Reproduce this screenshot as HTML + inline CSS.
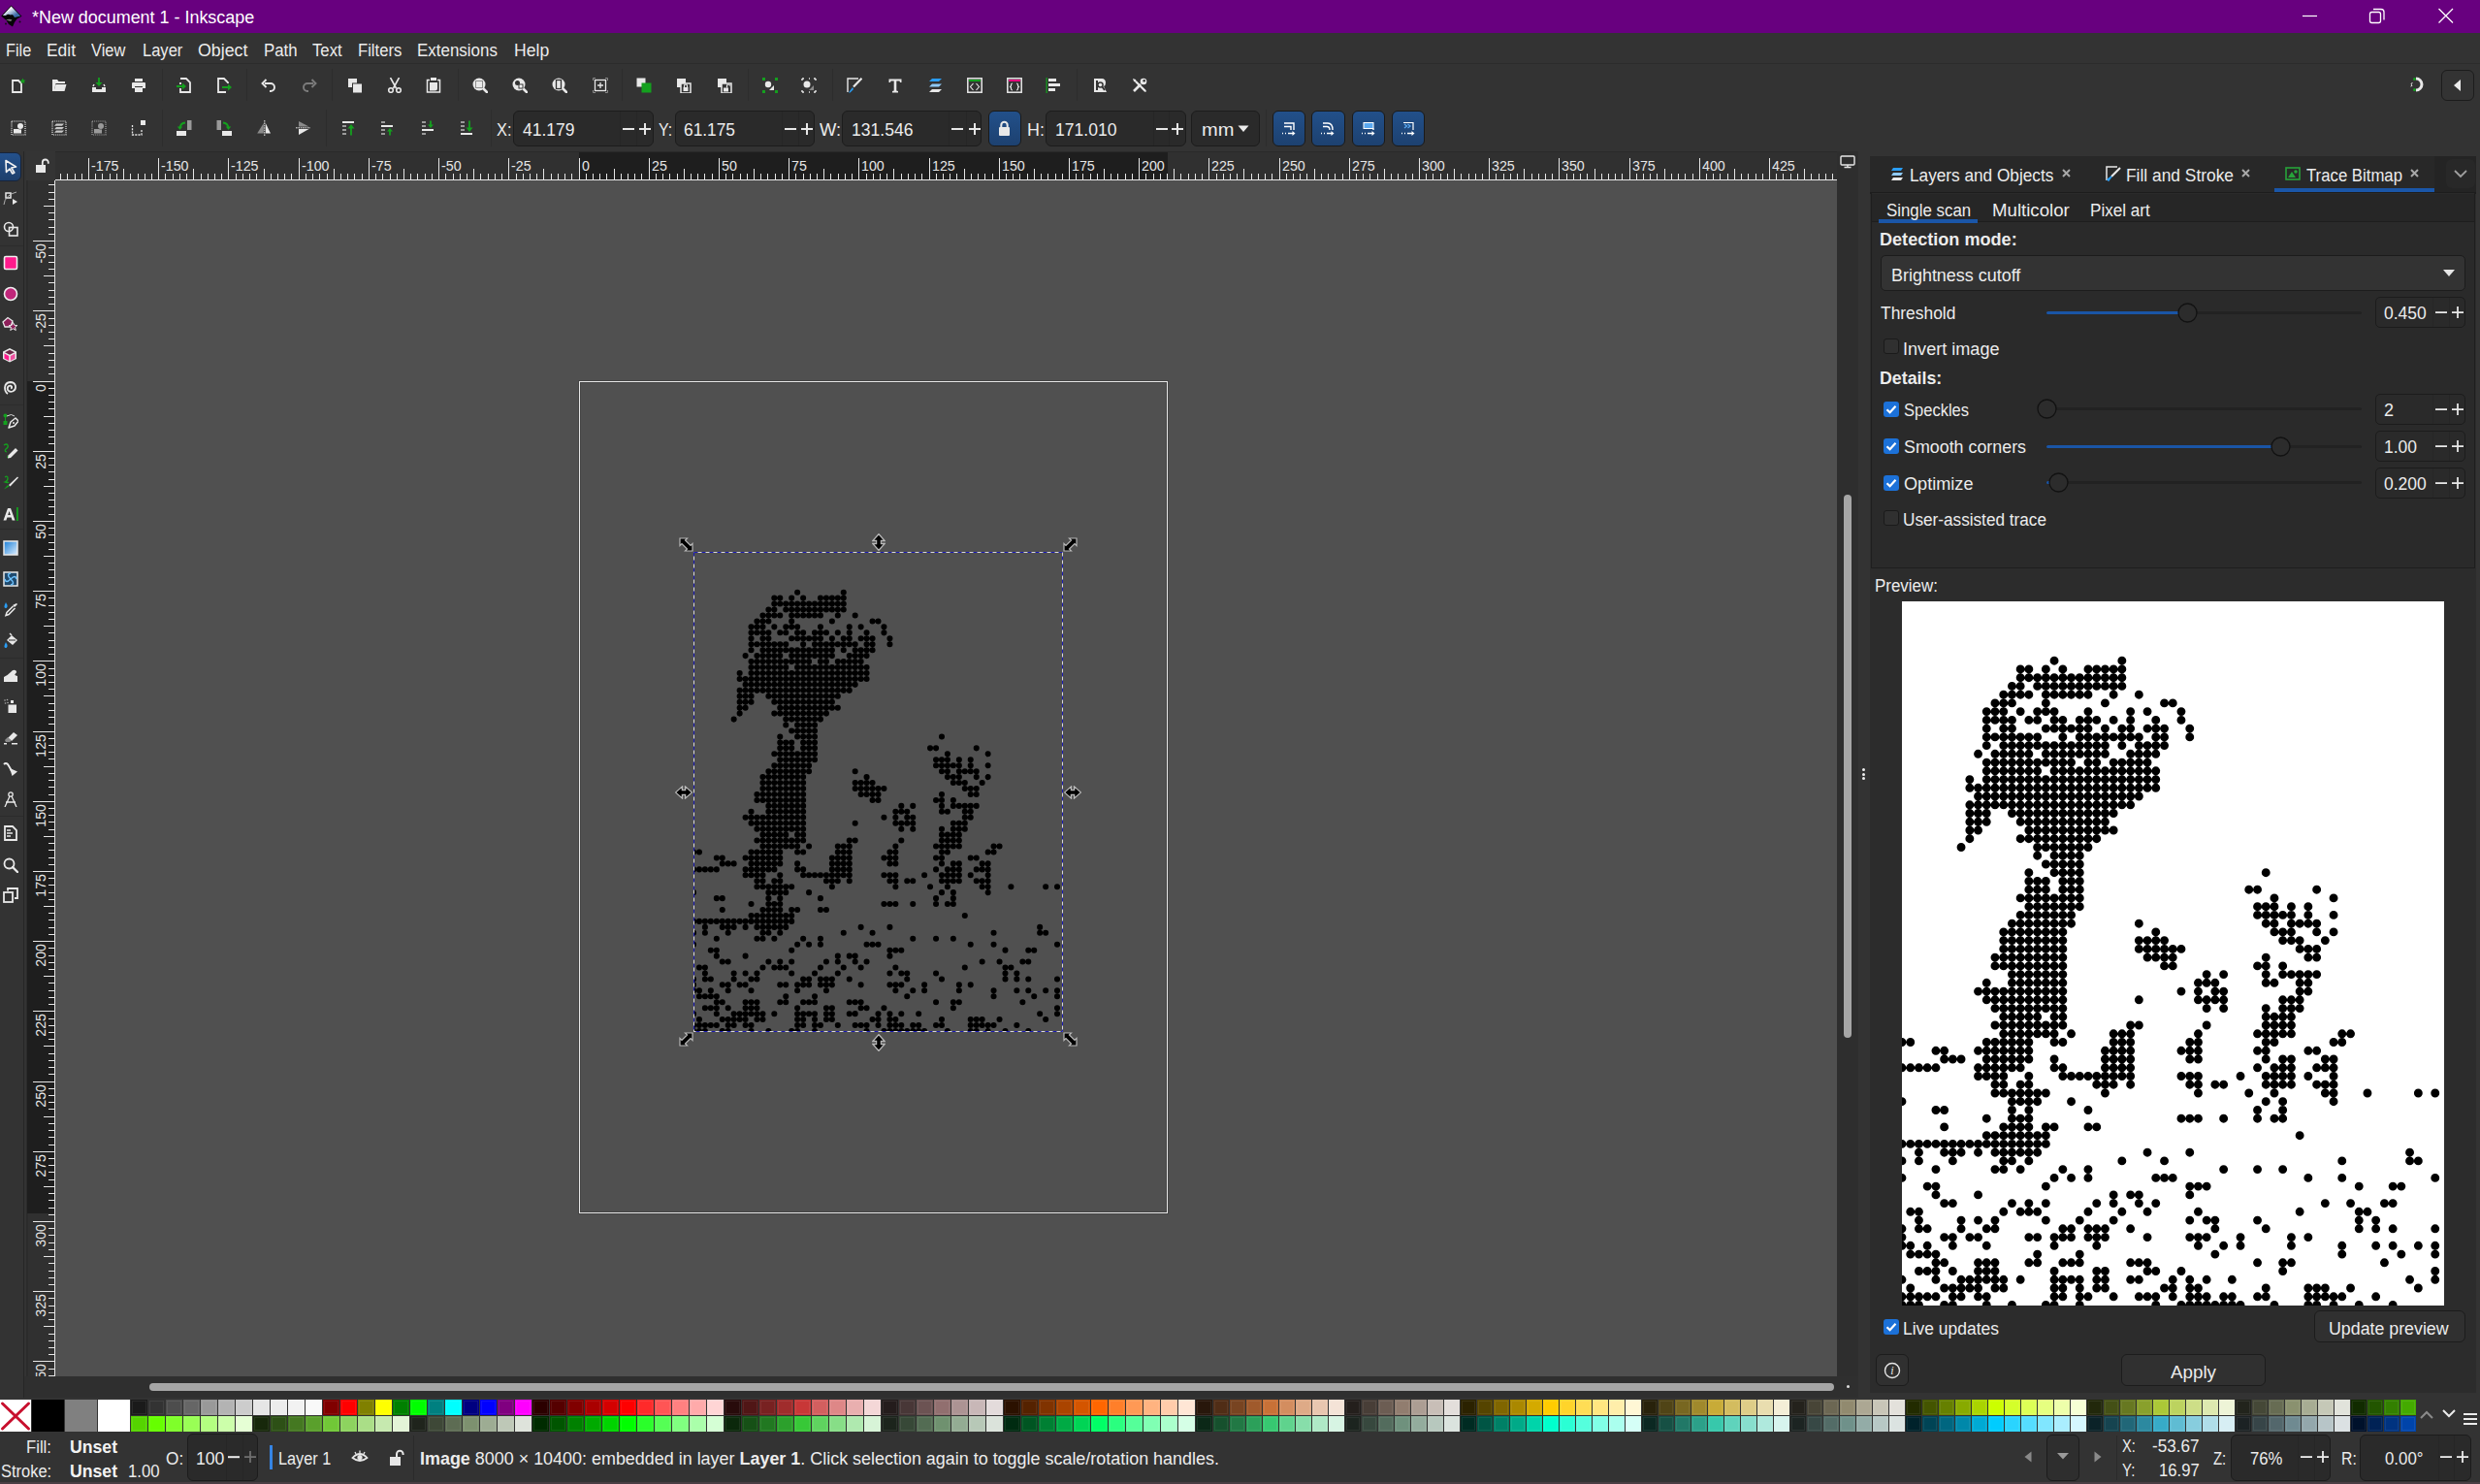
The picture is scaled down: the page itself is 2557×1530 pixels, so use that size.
<!DOCTYPE html><html><head><meta charset="utf-8"><style>*{margin:0;padding:0}
html,body{width:2557px;height:1530px;overflow:hidden;background:#333;position:relative}
body>div{position:absolute}
.t{position:absolute;white-space:pre;font-family:"Liberation Sans",sans-serif}
</style></head><body>
<div style="left:0.0px;top:0.0px;width:2557.0px;height:34.0px;background:#68007f"></div>
<div class="t" id="t0" style="left:33.30px;top:9.46px;font-size:18px;line-height:18px;color:#ffffff;font-weight:400;transform:scaleX(0.9961);transform-origin:0 0;">*New document 1 - Inkscape</div>
<svg style="position:absolute;left:2370.0px;top:10.0px;" width="24" height="14" viewBox="0 0 24 14"><line x1="4" y1="6.5" x2="19" y2="6.5" stroke="#fff" stroke-width="1.2"/></svg>
<svg style="position:absolute;left:2440.0px;top:6.0px;" width="22" height="22" viewBox="0 0 22 22"><rect x="3.5" y="6.5" width="11" height="11" rx="2" fill="none" stroke="#fff" stroke-width="1.3"/><path d="M7 3.5 h8 a3 3 0 0 1 3 3 v8" fill="none" stroke="#fff" stroke-width="1.3"/></svg>
<svg style="position:absolute;left:2510.0px;top:6.0px;" width="24" height="22" viewBox="0 0 24 22"><path d="M4.5 3 L19 17.5 M19 3 L4.5 17.5" stroke="#fff" stroke-width="1.3"/></svg>
<svg style="position:absolute;left:0.0px;top:0.0px;" width="26" height="30" viewBox="0 0 26 30"><defs><linearGradient id="lg1" x1="0" y1="0" x2="1" y2="1"><stop offset="0.3" stop-color="#ffffff"/><stop offset="0.75" stop-color="#3d6aa8"/></linearGradient></defs><path d="M11.5 5.5 L22.5 16.8 L17.5 19.5 L15 23 L13 27.5 L9 25 L6.5 21 L1.2 16.5 Z" fill="#050505"/><path d="M11.5 6.5 L21.2 16.5 L15 18 Q13 13.5 11 15.5 Q8 14 6 16 L2.8 16 Z" fill="url(#lg1)"/><path d="M6 20.5 Q10 19 12.5 20.5 L11 22 Z" fill="#777"/><circle cx="20.5" cy="22.5" r="1" fill="#111"/><circle cx="6" cy="24.5" r="0.9" fill="#111"/></svg>
<div style="left:0.0px;top:34.0px;width:2557.0px;height:32.0px;background:#333333"></div>
<div style="left:0.0px;top:65.0px;width:2557.0px;height:1.0px;background:#2c2c2c"></div>
<div class="t" id="t1" style="left:5.80px;top:42.76px;font-size:18px;line-height:18px;color:#ececec;font-weight:400;transform:scaleX(0.9038);transform-origin:0 0;">File</div>
<div class="t" id="t2" style="left:48.03px;top:42.76px;font-size:18px;line-height:18px;color:#ececec;font-weight:400;transform:scaleX(0.9662);transform-origin:0 0;">Edit</div>
<div class="t" id="t3" style="left:94.40px;top:42.76px;font-size:18px;line-height:18px;color:#ececec;font-weight:400;transform:scaleX(0.9121);transform-origin:0 0;">View</div>
<div class="t" id="t4" style="left:146.68px;top:42.76px;font-size:18px;line-height:18px;color:#ececec;font-weight:400;transform:scaleX(0.9175);transform-origin:0 0;">Layer</div>
<div class="t" id="t5" style="left:204.40px;top:42.76px;font-size:18px;line-height:18px;color:#ececec;font-weight:400;transform:scaleX(0.9881);transform-origin:0 0;">Object</div>
<div class="t" id="t6" style="left:271.67px;top:42.76px;font-size:18px;line-height:18px;color:#ececec;font-weight:400;transform:scaleX(0.9338);transform-origin:0 0;">Path</div>
<div class="t" id="t7" style="left:322.30px;top:42.76px;font-size:18px;line-height:18px;color:#ececec;font-weight:400;transform:scaleX(0.9300);transform-origin:0 0;">Text</div>
<div class="t" id="t8" style="left:369.07px;top:42.76px;font-size:18px;line-height:18px;color:#ececec;font-weight:400;transform:scaleX(0.9250);transform-origin:0 0;">Filters</div>
<div class="t" id="t9" style="left:430.36px;top:42.76px;font-size:18px;line-height:18px;color:#ececec;font-weight:400;transform:scaleX(0.9409);transform-origin:0 0;">Extensions</div>
<div class="t" id="t10" style="left:529.82px;top:42.76px;font-size:18px;line-height:18px;color:#ececec;font-weight:400;transform:scaleX(0.9775);transform-origin:0 0;">Help</div>
<div style="left:0.0px;top:66.0px;width:2557.0px;height:90.0px;background:#333333"></div>
<div style="left:166.5px;top:71.0px;width:1.0px;height:33.0px;background:#2d2d2d"></div>
<div style="left:254.0px;top:71.0px;width:1.0px;height:33.0px;background:#2d2d2d"></div>
<div style="left:342.0px;top:71.0px;width:1.0px;height:33.0px;background:#2d2d2d"></div>
<div style="left:472.0px;top:71.0px;width:1.0px;height:33.0px;background:#2d2d2d"></div>
<div style="left:641.0px;top:71.0px;width:1.0px;height:33.0px;background:#2d2d2d"></div>
<div style="left:770.6px;top:71.0px;width:1.0px;height:33.0px;background:#2d2d2d"></div>
<div style="left:858.4px;top:71.0px;width:1.0px;height:33.0px;background:#2d2d2d"></div>
<div style="left:1110.4px;top:71.0px;width:1.0px;height:33.0px;background:#2d2d2d"></div>
<div style="left:166.5px;top:113.0px;width:1.0px;height:38.0px;background:#2d2d2d"></div>
<div style="left:336.0px;top:113.0px;width:1.0px;height:38.0px;background:#2d2d2d"></div>
<div style="left:506.0px;top:113.0px;width:1.0px;height:38.0px;background:#2d2d2d"></div>
<div style="left:1305.0px;top:113.0px;width:1.0px;height:38.0px;background:#2d2d2d"></div>
<div style="left:27.0px;top:156.0px;width:30.0px;height:30.0px;background:#343434"></div>
<div style="left:57.0px;top:156.0px;width:1837.0px;height:30.0px;background:#303030;border-top:1px solid #2a2a2a;box-sizing:border-box"></div>
<div style="left:597.0px;top:157.0px;width:607.0px;height:29.0px;background:#1e1e1e"></div>
<div style="left:27.0px;top:186.0px;width:30.0px;height:1233.0px;background:#303030;border-left:2px solid #2b2b2b;box-sizing:border-box"></div>
<div style="left:28.0px;top:393.0px;width:29.0px;height:858.0px;background:#1e1e1e"></div>
<div style="left:24.0px;top:156.0px;width:1.0px;height:1285.0px;background:#262626"></div>
<svg style="position:absolute;left:57.0px;top:156.0px;font-family:'Liberation Sans'" width="1837" height="30" viewBox="0 0 1837 30"><rect x="0" y="29" width="1837" height="1" fill="#e6e6e6"/><rect x="5.00" y="23" width="1" height="7" fill="#e6e6e6"/><rect x="12.00" y="23" width="1" height="7" fill="#e6e6e6"/><rect x="20.00" y="23" width="1" height="7" fill="#e6e6e6"/><rect x="27.00" y="23" width="1" height="7" fill="#e6e6e6"/><rect x="34.00" y="7" width="1" height="23" fill="#e6e6e6"/><text transform="translate(37.00,19.8) scale(0.92,1)" font-size="15.5" fill="#e6e6e6">-175</text><rect x="41.00" y="23" width="1" height="7" fill="#e6e6e6"/><rect x="48.00" y="23" width="1" height="7" fill="#e6e6e6"/><rect x="56.00" y="23" width="1" height="7" fill="#e6e6e6"/><rect x="63.00" y="23" width="1" height="7" fill="#e6e6e6"/><rect x="70.00" y="18" width="1" height="12" fill="#e6e6e6"/><rect x="77.00" y="23" width="1" height="7" fill="#e6e6e6"/><rect x="85.00" y="23" width="1" height="7" fill="#e6e6e6"/><rect x="92.00" y="23" width="1" height="7" fill="#e6e6e6"/><rect x="99.00" y="23" width="1" height="7" fill="#e6e6e6"/><rect x="106.00" y="7" width="1" height="23" fill="#e6e6e6"/><text transform="translate(109.00,19.8) scale(0.92,1)" font-size="15.5" fill="#e6e6e6">-150</text><rect x="113.00" y="23" width="1" height="7" fill="#e6e6e6"/><rect x="121.00" y="23" width="1" height="7" fill="#e6e6e6"/><rect x="128.00" y="23" width="1" height="7" fill="#e6e6e6"/><rect x="135.00" y="23" width="1" height="7" fill="#e6e6e6"/><rect x="142.00" y="18" width="1" height="12" fill="#e6e6e6"/><rect x="150.00" y="23" width="1" height="7" fill="#e6e6e6"/><rect x="157.00" y="23" width="1" height="7" fill="#e6e6e6"/><rect x="164.00" y="23" width="1" height="7" fill="#e6e6e6"/><rect x="171.00" y="23" width="1" height="7" fill="#e6e6e6"/><rect x="178.00" y="7" width="1" height="23" fill="#e6e6e6"/><text transform="translate(181.00,19.8) scale(0.92,1)" font-size="15.5" fill="#e6e6e6">-125</text><rect x="186.00" y="23" width="1" height="7" fill="#e6e6e6"/><rect x="193.00" y="23" width="1" height="7" fill="#e6e6e6"/><rect x="200.00" y="23" width="1" height="7" fill="#e6e6e6"/><rect x="207.00" y="23" width="1" height="7" fill="#e6e6e6"/><rect x="215.00" y="18" width="1" height="12" fill="#e6e6e6"/><rect x="222.00" y="23" width="1" height="7" fill="#e6e6e6"/><rect x="229.00" y="23" width="1" height="7" fill="#e6e6e6"/><rect x="236.00" y="23" width="1" height="7" fill="#e6e6e6"/><rect x="243.00" y="23" width="1" height="7" fill="#e6e6e6"/><rect x="251.00" y="7" width="1" height="23" fill="#e6e6e6"/><text transform="translate(254.00,19.8) scale(0.92,1)" font-size="15.5" fill="#e6e6e6">-100</text><rect x="258.00" y="23" width="1" height="7" fill="#e6e6e6"/><rect x="265.00" y="23" width="1" height="7" fill="#e6e6e6"/><rect x="272.00" y="23" width="1" height="7" fill="#e6e6e6"/><rect x="280.00" y="23" width="1" height="7" fill="#e6e6e6"/><rect x="287.00" y="18" width="1" height="12" fill="#e6e6e6"/><rect x="294.00" y="23" width="1" height="7" fill="#e6e6e6"/><rect x="301.00" y="23" width="1" height="7" fill="#e6e6e6"/><rect x="308.00" y="23" width="1" height="7" fill="#e6e6e6"/><rect x="316.00" y="23" width="1" height="7" fill="#e6e6e6"/><rect x="323.00" y="7" width="1" height="23" fill="#e6e6e6"/><text transform="translate(326.00,19.8) scale(0.92,1)" font-size="15.5" fill="#e6e6e6">-75</text><rect x="330.00" y="23" width="1" height="7" fill="#e6e6e6"/><rect x="337.00" y="23" width="1" height="7" fill="#e6e6e6"/><rect x="345.00" y="23" width="1" height="7" fill="#e6e6e6"/><rect x="352.00" y="23" width="1" height="7" fill="#e6e6e6"/><rect x="359.00" y="18" width="1" height="12" fill="#e6e6e6"/><rect x="366.00" y="23" width="1" height="7" fill="#e6e6e6"/><rect x="373.00" y="23" width="1" height="7" fill="#e6e6e6"/><rect x="381.00" y="23" width="1" height="7" fill="#e6e6e6"/><rect x="388.00" y="23" width="1" height="7" fill="#e6e6e6"/><rect x="395.00" y="7" width="1" height="23" fill="#e6e6e6"/><text transform="translate(398.00,19.8) scale(0.92,1)" font-size="15.5" fill="#e6e6e6">-50</text><rect x="402.00" y="23" width="1" height="7" fill="#e6e6e6"/><rect x="410.00" y="23" width="1" height="7" fill="#e6e6e6"/><rect x="417.00" y="23" width="1" height="7" fill="#e6e6e6"/><rect x="424.00" y="23" width="1" height="7" fill="#e6e6e6"/><rect x="431.00" y="18" width="1" height="12" fill="#e6e6e6"/><rect x="438.00" y="23" width="1" height="7" fill="#e6e6e6"/><rect x="446.00" y="23" width="1" height="7" fill="#e6e6e6"/><rect x="453.00" y="23" width="1" height="7" fill="#e6e6e6"/><rect x="460.00" y="23" width="1" height="7" fill="#e6e6e6"/><rect x="467.00" y="7" width="1" height="23" fill="#e6e6e6"/><text transform="translate(470.00,19.8) scale(0.92,1)" font-size="15.5" fill="#e6e6e6">-25</text><rect x="475.00" y="23" width="1" height="7" fill="#e6e6e6"/><rect x="482.00" y="23" width="1" height="7" fill="#e6e6e6"/><rect x="489.00" y="23" width="1" height="7" fill="#e6e6e6"/><rect x="496.00" y="23" width="1" height="7" fill="#e6e6e6"/><rect x="503.00" y="18" width="1" height="12" fill="#e6e6e6"/><rect x="511.00" y="23" width="1" height="7" fill="#e6e6e6"/><rect x="518.00" y="23" width="1" height="7" fill="#e6e6e6"/><rect x="525.00" y="23" width="1" height="7" fill="#e6e6e6"/><rect x="532.00" y="23" width="1" height="7" fill="#e6e6e6"/><rect x="540.00" y="7" width="1" height="23" fill="#e6e6e6"/><text transform="translate(543.00,19.8) scale(0.92,1)" font-size="15.5" fill="#e6e6e6">0</text><rect x="547.00" y="23" width="1" height="7" fill="#e6e6e6"/><rect x="554.00" y="23" width="1" height="7" fill="#e6e6e6"/><rect x="561.00" y="23" width="1" height="7" fill="#e6e6e6"/><rect x="568.00" y="23" width="1" height="7" fill="#e6e6e6"/><rect x="576.00" y="18" width="1" height="12" fill="#e6e6e6"/><rect x="583.00" y="23" width="1" height="7" fill="#e6e6e6"/><rect x="590.00" y="23" width="1" height="7" fill="#e6e6e6"/><rect x="597.00" y="23" width="1" height="7" fill="#e6e6e6"/><rect x="604.00" y="23" width="1" height="7" fill="#e6e6e6"/><rect x="612.00" y="7" width="1" height="23" fill="#e6e6e6"/><text transform="translate(615.00,19.8) scale(0.92,1)" font-size="15.5" fill="#e6e6e6">25</text><rect x="619.00" y="23" width="1" height="7" fill="#e6e6e6"/><rect x="626.00" y="23" width="1" height="7" fill="#e6e6e6"/><rect x="633.00" y="23" width="1" height="7" fill="#e6e6e6"/><rect x="641.00" y="23" width="1" height="7" fill="#e6e6e6"/><rect x="648.00" y="18" width="1" height="12" fill="#e6e6e6"/><rect x="655.00" y="23" width="1" height="7" fill="#e6e6e6"/><rect x="662.00" y="23" width="1" height="7" fill="#e6e6e6"/><rect x="669.00" y="23" width="1" height="7" fill="#e6e6e6"/><rect x="677.00" y="23" width="1" height="7" fill="#e6e6e6"/><rect x="684.00" y="7" width="1" height="23" fill="#e6e6e6"/><text transform="translate(687.00,19.8) scale(0.92,1)" font-size="15.5" fill="#e6e6e6">50</text><rect x="691.00" y="23" width="1" height="7" fill="#e6e6e6"/><rect x="698.00" y="23" width="1" height="7" fill="#e6e6e6"/><rect x="706.00" y="23" width="1" height="7" fill="#e6e6e6"/><rect x="713.00" y="23" width="1" height="7" fill="#e6e6e6"/><rect x="720.00" y="18" width="1" height="12" fill="#e6e6e6"/><rect x="727.00" y="23" width="1" height="7" fill="#e6e6e6"/><rect x="734.00" y="23" width="1" height="7" fill="#e6e6e6"/><rect x="742.00" y="23" width="1" height="7" fill="#e6e6e6"/><rect x="749.00" y="23" width="1" height="7" fill="#e6e6e6"/><rect x="756.00" y="7" width="1" height="23" fill="#e6e6e6"/><text transform="translate(759.00,19.8) scale(0.92,1)" font-size="15.5" fill="#e6e6e6">75</text><rect x="763.00" y="23" width="1" height="7" fill="#e6e6e6"/><rect x="771.00" y="23" width="1" height="7" fill="#e6e6e6"/><rect x="778.00" y="23" width="1" height="7" fill="#e6e6e6"/><rect x="785.00" y="23" width="1" height="7" fill="#e6e6e6"/><rect x="792.00" y="18" width="1" height="12" fill="#e6e6e6"/><rect x="799.00" y="23" width="1" height="7" fill="#e6e6e6"/><rect x="807.00" y="23" width="1" height="7" fill="#e6e6e6"/><rect x="814.00" y="23" width="1" height="7" fill="#e6e6e6"/><rect x="821.00" y="23" width="1" height="7" fill="#e6e6e6"/><rect x="828.00" y="7" width="1" height="23" fill="#e6e6e6"/><text transform="translate(831.00,19.8) scale(0.92,1)" font-size="15.5" fill="#e6e6e6">100</text><rect x="836.00" y="23" width="1" height="7" fill="#e6e6e6"/><rect x="843.00" y="23" width="1" height="7" fill="#e6e6e6"/><rect x="850.00" y="23" width="1" height="7" fill="#e6e6e6"/><rect x="857.00" y="23" width="1" height="7" fill="#e6e6e6"/><rect x="864.00" y="18" width="1" height="12" fill="#e6e6e6"/><rect x="872.00" y="23" width="1" height="7" fill="#e6e6e6"/><rect x="879.00" y="23" width="1" height="7" fill="#e6e6e6"/><rect x="886.00" y="23" width="1" height="7" fill="#e6e6e6"/><rect x="893.00" y="23" width="1" height="7" fill="#e6e6e6"/><rect x="901.00" y="7" width="1" height="23" fill="#e6e6e6"/><text transform="translate(904.00,19.8) scale(0.92,1)" font-size="15.5" fill="#e6e6e6">125</text><rect x="908.00" y="23" width="1" height="7" fill="#e6e6e6"/><rect x="915.00" y="23" width="1" height="7" fill="#e6e6e6"/><rect x="922.00" y="23" width="1" height="7" fill="#e6e6e6"/><rect x="929.00" y="23" width="1" height="7" fill="#e6e6e6"/><rect x="937.00" y="18" width="1" height="12" fill="#e6e6e6"/><rect x="944.00" y="23" width="1" height="7" fill="#e6e6e6"/><rect x="951.00" y="23" width="1" height="7" fill="#e6e6e6"/><rect x="958.00" y="23" width="1" height="7" fill="#e6e6e6"/><rect x="966.00" y="23" width="1" height="7" fill="#e6e6e6"/><rect x="973.00" y="7" width="1" height="23" fill="#e6e6e6"/><text transform="translate(976.00,19.8) scale(0.92,1)" font-size="15.5" fill="#e6e6e6">150</text><rect x="980.00" y="23" width="1" height="7" fill="#e6e6e6"/><rect x="987.00" y="23" width="1" height="7" fill="#e6e6e6"/><rect x="994.00" y="23" width="1" height="7" fill="#e6e6e6"/><rect x="1002.00" y="23" width="1" height="7" fill="#e6e6e6"/><rect x="1009.00" y="18" width="1" height="12" fill="#e6e6e6"/><rect x="1016.00" y="23" width="1" height="7" fill="#e6e6e6"/><rect x="1023.00" y="23" width="1" height="7" fill="#e6e6e6"/><rect x="1031.00" y="23" width="1" height="7" fill="#e6e6e6"/><rect x="1038.00" y="23" width="1" height="7" fill="#e6e6e6"/><rect x="1045.00" y="7" width="1" height="23" fill="#e6e6e6"/><text transform="translate(1048.00,19.8) scale(0.92,1)" font-size="15.5" fill="#e6e6e6">175</text><rect x="1052.00" y="23" width="1" height="7" fill="#e6e6e6"/><rect x="1059.00" y="23" width="1" height="7" fill="#e6e6e6"/><rect x="1067.00" y="23" width="1" height="7" fill="#e6e6e6"/><rect x="1074.00" y="23" width="1" height="7" fill="#e6e6e6"/><rect x="1081.00" y="18" width="1" height="12" fill="#e6e6e6"/><rect x="1088.00" y="23" width="1" height="7" fill="#e6e6e6"/><rect x="1095.00" y="23" width="1" height="7" fill="#e6e6e6"/><rect x="1103.00" y="23" width="1" height="7" fill="#e6e6e6"/><rect x="1110.00" y="23" width="1" height="7" fill="#e6e6e6"/><rect x="1117.00" y="7" width="1" height="23" fill="#e6e6e6"/><text transform="translate(1120.00,19.8) scale(0.92,1)" font-size="15.5" fill="#e6e6e6">200</text><rect x="1124.00" y="23" width="1" height="7" fill="#e6e6e6"/><rect x="1132.00" y="23" width="1" height="7" fill="#e6e6e6"/><rect x="1139.00" y="23" width="1" height="7" fill="#e6e6e6"/><rect x="1146.00" y="23" width="1" height="7" fill="#e6e6e6"/><rect x="1153.00" y="18" width="1" height="12" fill="#e6e6e6"/><rect x="1160.00" y="23" width="1" height="7" fill="#e6e6e6"/><rect x="1168.00" y="23" width="1" height="7" fill="#e6e6e6"/><rect x="1175.00" y="23" width="1" height="7" fill="#e6e6e6"/><rect x="1182.00" y="23" width="1" height="7" fill="#e6e6e6"/><rect x="1189.00" y="7" width="1" height="23" fill="#e6e6e6"/><text transform="translate(1192.00,19.8) scale(0.92,1)" font-size="15.5" fill="#e6e6e6">225</text><rect x="1197.00" y="23" width="1" height="7" fill="#e6e6e6"/><rect x="1204.00" y="23" width="1" height="7" fill="#e6e6e6"/><rect x="1211.00" y="23" width="1" height="7" fill="#e6e6e6"/><rect x="1218.00" y="23" width="1" height="7" fill="#e6e6e6"/><rect x="1225.00" y="18" width="1" height="12" fill="#e6e6e6"/><rect x="1233.00" y="23" width="1" height="7" fill="#e6e6e6"/><rect x="1240.00" y="23" width="1" height="7" fill="#e6e6e6"/><rect x="1247.00" y="23" width="1" height="7" fill="#e6e6e6"/><rect x="1254.00" y="23" width="1" height="7" fill="#e6e6e6"/><rect x="1262.00" y="7" width="1" height="23" fill="#e6e6e6"/><text transform="translate(1265.00,19.8) scale(0.92,1)" font-size="15.5" fill="#e6e6e6">250</text><rect x="1269.00" y="23" width="1" height="7" fill="#e6e6e6"/><rect x="1276.00" y="23" width="1" height="7" fill="#e6e6e6"/><rect x="1283.00" y="23" width="1" height="7" fill="#e6e6e6"/><rect x="1290.00" y="23" width="1" height="7" fill="#e6e6e6"/><rect x="1298.00" y="18" width="1" height="12" fill="#e6e6e6"/><rect x="1305.00" y="23" width="1" height="7" fill="#e6e6e6"/><rect x="1312.00" y="23" width="1" height="7" fill="#e6e6e6"/><rect x="1319.00" y="23" width="1" height="7" fill="#e6e6e6"/><rect x="1327.00" y="23" width="1" height="7" fill="#e6e6e6"/><rect x="1334.00" y="7" width="1" height="23" fill="#e6e6e6"/><text transform="translate(1337.00,19.8) scale(0.92,1)" font-size="15.5" fill="#e6e6e6">275</text><rect x="1341.00" y="23" width="1" height="7" fill="#e6e6e6"/><rect x="1348.00" y="23" width="1" height="7" fill="#e6e6e6"/><rect x="1355.00" y="23" width="1" height="7" fill="#e6e6e6"/><rect x="1363.00" y="23" width="1" height="7" fill="#e6e6e6"/><rect x="1370.00" y="18" width="1" height="12" fill="#e6e6e6"/><rect x="1377.00" y="23" width="1" height="7" fill="#e6e6e6"/><rect x="1384.00" y="23" width="1" height="7" fill="#e6e6e6"/><rect x="1392.00" y="23" width="1" height="7" fill="#e6e6e6"/><rect x="1399.00" y="23" width="1" height="7" fill="#e6e6e6"/><rect x="1406.00" y="7" width="1" height="23" fill="#e6e6e6"/><text transform="translate(1409.00,19.8) scale(0.92,1)" font-size="15.5" fill="#e6e6e6">300</text><rect x="1413.00" y="23" width="1" height="7" fill="#e6e6e6"/><rect x="1420.00" y="23" width="1" height="7" fill="#e6e6e6"/><rect x="1428.00" y="23" width="1" height="7" fill="#e6e6e6"/><rect x="1435.00" y="23" width="1" height="7" fill="#e6e6e6"/><rect x="1442.00" y="18" width="1" height="12" fill="#e6e6e6"/><rect x="1449.00" y="23" width="1" height="7" fill="#e6e6e6"/><rect x="1457.00" y="23" width="1" height="7" fill="#e6e6e6"/><rect x="1464.00" y="23" width="1" height="7" fill="#e6e6e6"/><rect x="1471.00" y="23" width="1" height="7" fill="#e6e6e6"/><rect x="1478.00" y="7" width="1" height="23" fill="#e6e6e6"/><text transform="translate(1481.00,19.8) scale(0.92,1)" font-size="15.5" fill="#e6e6e6">325</text><rect x="1485.00" y="23" width="1" height="7" fill="#e6e6e6"/><rect x="1493.00" y="23" width="1" height="7" fill="#e6e6e6"/><rect x="1500.00" y="23" width="1" height="7" fill="#e6e6e6"/><rect x="1507.00" y="23" width="1" height="7" fill="#e6e6e6"/><rect x="1514.00" y="18" width="1" height="12" fill="#e6e6e6"/><rect x="1522.00" y="23" width="1" height="7" fill="#e6e6e6"/><rect x="1529.00" y="23" width="1" height="7" fill="#e6e6e6"/><rect x="1536.00" y="23" width="1" height="7" fill="#e6e6e6"/><rect x="1543.00" y="23" width="1" height="7" fill="#e6e6e6"/><rect x="1550.00" y="7" width="1" height="23" fill="#e6e6e6"/><text transform="translate(1553.00,19.8) scale(0.92,1)" font-size="15.5" fill="#e6e6e6">350</text><rect x="1558.00" y="23" width="1" height="7" fill="#e6e6e6"/><rect x="1565.00" y="23" width="1" height="7" fill="#e6e6e6"/><rect x="1572.00" y="23" width="1" height="7" fill="#e6e6e6"/><rect x="1579.00" y="23" width="1" height="7" fill="#e6e6e6"/><rect x="1587.00" y="18" width="1" height="12" fill="#e6e6e6"/><rect x="1594.00" y="23" width="1" height="7" fill="#e6e6e6"/><rect x="1601.00" y="23" width="1" height="7" fill="#e6e6e6"/><rect x="1608.00" y="23" width="1" height="7" fill="#e6e6e6"/><rect x="1615.00" y="23" width="1" height="7" fill="#e6e6e6"/><rect x="1623.00" y="7" width="1" height="23" fill="#e6e6e6"/><text transform="translate(1626.00,19.8) scale(0.92,1)" font-size="15.5" fill="#e6e6e6">375</text><rect x="1630.00" y="23" width="1" height="7" fill="#e6e6e6"/><rect x="1637.00" y="23" width="1" height="7" fill="#e6e6e6"/><rect x="1644.00" y="23" width="1" height="7" fill="#e6e6e6"/><rect x="1651.00" y="23" width="1" height="7" fill="#e6e6e6"/><rect x="1659.00" y="18" width="1" height="12" fill="#e6e6e6"/><rect x="1666.00" y="23" width="1" height="7" fill="#e6e6e6"/><rect x="1673.00" y="23" width="1" height="7" fill="#e6e6e6"/><rect x="1680.00" y="23" width="1" height="7" fill="#e6e6e6"/><rect x="1688.00" y="23" width="1" height="7" fill="#e6e6e6"/><rect x="1695.00" y="7" width="1" height="23" fill="#e6e6e6"/><text transform="translate(1698.00,19.8) scale(0.92,1)" font-size="15.5" fill="#e6e6e6">400</text><rect x="1702.00" y="23" width="1" height="7" fill="#e6e6e6"/><rect x="1709.00" y="23" width="1" height="7" fill="#e6e6e6"/><rect x="1716.00" y="23" width="1" height="7" fill="#e6e6e6"/><rect x="1724.00" y="23" width="1" height="7" fill="#e6e6e6"/><rect x="1731.00" y="18" width="1" height="12" fill="#e6e6e6"/><rect x="1738.00" y="23" width="1" height="7" fill="#e6e6e6"/><rect x="1745.00" y="23" width="1" height="7" fill="#e6e6e6"/><rect x="1753.00" y="23" width="1" height="7" fill="#e6e6e6"/><rect x="1760.00" y="23" width="1" height="7" fill="#e6e6e6"/><rect x="1767.00" y="7" width="1" height="23" fill="#e6e6e6"/><text transform="translate(1770.00,19.8) scale(0.92,1)" font-size="15.5" fill="#e6e6e6">425</text><rect x="1774.00" y="23" width="1" height="7" fill="#e6e6e6"/><rect x="1781.00" y="23" width="1" height="7" fill="#e6e6e6"/><rect x="1789.00" y="23" width="1" height="7" fill="#e6e6e6"/><rect x="1796.00" y="23" width="1" height="7" fill="#e6e6e6"/><rect x="1803.00" y="18" width="1" height="12" fill="#e6e6e6"/><rect x="1810.00" y="23" width="1" height="7" fill="#e6e6e6"/><rect x="1818.00" y="23" width="1" height="7" fill="#e6e6e6"/><rect x="1825.00" y="23" width="1" height="7" fill="#e6e6e6"/><rect x="1832.00" y="23" width="1" height="7" fill="#e6e6e6"/></svg>
<svg style="position:absolute;left:27.0px;top:186.0px;font-family:'Liberation Sans'" width="30" height="1233" viewBox="0 0 30 1233"><rect x="29" y="0" width="1" height="1233" fill="#e6e6e6"/><rect x="23" y="4.00" width="7" height="1" fill="#e6e6e6"/><rect x="23" y="12.00" width="7" height="1" fill="#e6e6e6"/><rect x="23" y="19.00" width="7" height="1" fill="#e6e6e6"/><rect x="18" y="26.00" width="12" height="1" fill="#e6e6e6"/><rect x="23" y="33.00" width="7" height="1" fill="#e6e6e6"/><rect x="23" y="40.00" width="7" height="1" fill="#e6e6e6"/><rect x="23" y="48.00" width="7" height="1" fill="#e6e6e6"/><rect x="23" y="55.00" width="7" height="1" fill="#e6e6e6"/><rect x="7" y="62.00" width="23" height="1" fill="#e6e6e6"/><text transform="translate(19.8,65.00) rotate(-90) scale(0.92,1)" text-anchor="end" font-size="15.5" fill="#e6e6e6">-50</text><rect x="23" y="69.00" width="7" height="1" fill="#e6e6e6"/><rect x="23" y="77.00" width="7" height="1" fill="#e6e6e6"/><rect x="23" y="84.00" width="7" height="1" fill="#e6e6e6"/><rect x="23" y="91.00" width="7" height="1" fill="#e6e6e6"/><rect x="18" y="98.00" width="12" height="1" fill="#e6e6e6"/><rect x="23" y="105.00" width="7" height="1" fill="#e6e6e6"/><rect x="23" y="113.00" width="7" height="1" fill="#e6e6e6"/><rect x="23" y="120.00" width="7" height="1" fill="#e6e6e6"/><rect x="23" y="127.00" width="7" height="1" fill="#e6e6e6"/><rect x="7" y="134.00" width="23" height="1" fill="#e6e6e6"/><text transform="translate(19.8,137.00) rotate(-90) scale(0.92,1)" text-anchor="end" font-size="15.5" fill="#e6e6e6">-25</text><rect x="23" y="142.00" width="7" height="1" fill="#e6e6e6"/><rect x="23" y="149.00" width="7" height="1" fill="#e6e6e6"/><rect x="23" y="156.00" width="7" height="1" fill="#e6e6e6"/><rect x="23" y="163.00" width="7" height="1" fill="#e6e6e6"/><rect x="18" y="170.00" width="12" height="1" fill="#e6e6e6"/><rect x="23" y="178.00" width="7" height="1" fill="#e6e6e6"/><rect x="23" y="185.00" width="7" height="1" fill="#e6e6e6"/><rect x="23" y="192.00" width="7" height="1" fill="#e6e6e6"/><rect x="23" y="199.00" width="7" height="1" fill="#e6e6e6"/><rect x="7" y="207.00" width="23" height="1" fill="#e6e6e6"/><text transform="translate(19.8,210.00) rotate(-90) scale(0.92,1)" text-anchor="end" font-size="15.5" fill="#e6e6e6">0</text><rect x="23" y="214.00" width="7" height="1" fill="#e6e6e6"/><rect x="23" y="221.00" width="7" height="1" fill="#e6e6e6"/><rect x="23" y="228.00" width="7" height="1" fill="#e6e6e6"/><rect x="23" y="235.00" width="7" height="1" fill="#e6e6e6"/><rect x="18" y="243.00" width="12" height="1" fill="#e6e6e6"/><rect x="23" y="250.00" width="7" height="1" fill="#e6e6e6"/><rect x="23" y="257.00" width="7" height="1" fill="#e6e6e6"/><rect x="23" y="264.00" width="7" height="1" fill="#e6e6e6"/><rect x="23" y="271.00" width="7" height="1" fill="#e6e6e6"/><rect x="7" y="279.00" width="23" height="1" fill="#e6e6e6"/><text transform="translate(19.8,282.00) rotate(-90) scale(0.92,1)" text-anchor="end" font-size="15.5" fill="#e6e6e6">25</text><rect x="23" y="286.00" width="7" height="1" fill="#e6e6e6"/><rect x="23" y="293.00" width="7" height="1" fill="#e6e6e6"/><rect x="23" y="300.00" width="7" height="1" fill="#e6e6e6"/><rect x="23" y="308.00" width="7" height="1" fill="#e6e6e6"/><rect x="18" y="315.00" width="12" height="1" fill="#e6e6e6"/><rect x="23" y="322.00" width="7" height="1" fill="#e6e6e6"/><rect x="23" y="329.00" width="7" height="1" fill="#e6e6e6"/><rect x="23" y="336.00" width="7" height="1" fill="#e6e6e6"/><rect x="23" y="344.00" width="7" height="1" fill="#e6e6e6"/><rect x="7" y="351.00" width="23" height="1" fill="#e6e6e6"/><text transform="translate(19.8,354.00) rotate(-90) scale(0.92,1)" text-anchor="end" font-size="15.5" fill="#e6e6e6">50</text><rect x="23" y="358.00" width="7" height="1" fill="#e6e6e6"/><rect x="23" y="365.00" width="7" height="1" fill="#e6e6e6"/><rect x="23" y="373.00" width="7" height="1" fill="#e6e6e6"/><rect x="23" y="380.00" width="7" height="1" fill="#e6e6e6"/><rect x="18" y="387.00" width="12" height="1" fill="#e6e6e6"/><rect x="23" y="394.00" width="7" height="1" fill="#e6e6e6"/><rect x="23" y="401.00" width="7" height="1" fill="#e6e6e6"/><rect x="23" y="409.00" width="7" height="1" fill="#e6e6e6"/><rect x="23" y="416.00" width="7" height="1" fill="#e6e6e6"/><rect x="7" y="423.00" width="23" height="1" fill="#e6e6e6"/><text transform="translate(19.8,426.00) rotate(-90) scale(0.92,1)" text-anchor="end" font-size="15.5" fill="#e6e6e6">75</text><rect x="23" y="430.00" width="7" height="1" fill="#e6e6e6"/><rect x="23" y="438.00" width="7" height="1" fill="#e6e6e6"/><rect x="23" y="445.00" width="7" height="1" fill="#e6e6e6"/><rect x="23" y="452.00" width="7" height="1" fill="#e6e6e6"/><rect x="18" y="459.00" width="12" height="1" fill="#e6e6e6"/><rect x="23" y="466.00" width="7" height="1" fill="#e6e6e6"/><rect x="23" y="474.00" width="7" height="1" fill="#e6e6e6"/><rect x="23" y="481.00" width="7" height="1" fill="#e6e6e6"/><rect x="23" y="488.00" width="7" height="1" fill="#e6e6e6"/><rect x="7" y="495.00" width="23" height="1" fill="#e6e6e6"/><text transform="translate(19.8,498.00) rotate(-90) scale(0.92,1)" text-anchor="end" font-size="15.5" fill="#e6e6e6">100</text><rect x="23" y="503.00" width="7" height="1" fill="#e6e6e6"/><rect x="23" y="510.00" width="7" height="1" fill="#e6e6e6"/><rect x="23" y="517.00" width="7" height="1" fill="#e6e6e6"/><rect x="23" y="524.00" width="7" height="1" fill="#e6e6e6"/><rect x="18" y="531.00" width="12" height="1" fill="#e6e6e6"/><rect x="23" y="539.00" width="7" height="1" fill="#e6e6e6"/><rect x="23" y="546.00" width="7" height="1" fill="#e6e6e6"/><rect x="23" y="553.00" width="7" height="1" fill="#e6e6e6"/><rect x="23" y="560.00" width="7" height="1" fill="#e6e6e6"/><rect x="7" y="568.00" width="23" height="1" fill="#e6e6e6"/><text transform="translate(19.8,571.00) rotate(-90) scale(0.92,1)" text-anchor="end" font-size="15.5" fill="#e6e6e6">125</text><rect x="23" y="575.00" width="7" height="1" fill="#e6e6e6"/><rect x="23" y="582.00" width="7" height="1" fill="#e6e6e6"/><rect x="23" y="589.00" width="7" height="1" fill="#e6e6e6"/><rect x="23" y="596.00" width="7" height="1" fill="#e6e6e6"/><rect x="18" y="604.00" width="12" height="1" fill="#e6e6e6"/><rect x="23" y="611.00" width="7" height="1" fill="#e6e6e6"/><rect x="23" y="618.00" width="7" height="1" fill="#e6e6e6"/><rect x="23" y="625.00" width="7" height="1" fill="#e6e6e6"/><rect x="23" y="633.00" width="7" height="1" fill="#e6e6e6"/><rect x="7" y="640.00" width="23" height="1" fill="#e6e6e6"/><text transform="translate(19.8,643.00) rotate(-90) scale(0.92,1)" text-anchor="end" font-size="15.5" fill="#e6e6e6">150</text><rect x="23" y="647.00" width="7" height="1" fill="#e6e6e6"/><rect x="23" y="654.00" width="7" height="1" fill="#e6e6e6"/><rect x="23" y="661.00" width="7" height="1" fill="#e6e6e6"/><rect x="23" y="669.00" width="7" height="1" fill="#e6e6e6"/><rect x="18" y="676.00" width="12" height="1" fill="#e6e6e6"/><rect x="23" y="683.00" width="7" height="1" fill="#e6e6e6"/><rect x="23" y="690.00" width="7" height="1" fill="#e6e6e6"/><rect x="23" y="698.00" width="7" height="1" fill="#e6e6e6"/><rect x="23" y="705.00" width="7" height="1" fill="#e6e6e6"/><rect x="7" y="712.00" width="23" height="1" fill="#e6e6e6"/><text transform="translate(19.8,715.00) rotate(-90) scale(0.92,1)" text-anchor="end" font-size="15.5" fill="#e6e6e6">175</text><rect x="23" y="719.00" width="7" height="1" fill="#e6e6e6"/><rect x="23" y="726.00" width="7" height="1" fill="#e6e6e6"/><rect x="23" y="734.00" width="7" height="1" fill="#e6e6e6"/><rect x="23" y="741.00" width="7" height="1" fill="#e6e6e6"/><rect x="18" y="748.00" width="12" height="1" fill="#e6e6e6"/><rect x="23" y="755.00" width="7" height="1" fill="#e6e6e6"/><rect x="23" y="762.00" width="7" height="1" fill="#e6e6e6"/><rect x="23" y="770.00" width="7" height="1" fill="#e6e6e6"/><rect x="23" y="777.00" width="7" height="1" fill="#e6e6e6"/><rect x="7" y="784.00" width="23" height="1" fill="#e6e6e6"/><text transform="translate(19.8,787.00) rotate(-90) scale(0.92,1)" text-anchor="end" font-size="15.5" fill="#e6e6e6">200</text><rect x="23" y="791.00" width="7" height="1" fill="#e6e6e6"/><rect x="23" y="799.00" width="7" height="1" fill="#e6e6e6"/><rect x="23" y="806.00" width="7" height="1" fill="#e6e6e6"/><rect x="23" y="813.00" width="7" height="1" fill="#e6e6e6"/><rect x="18" y="820.00" width="12" height="1" fill="#e6e6e6"/><rect x="23" y="827.00" width="7" height="1" fill="#e6e6e6"/><rect x="23" y="835.00" width="7" height="1" fill="#e6e6e6"/><rect x="23" y="842.00" width="7" height="1" fill="#e6e6e6"/><rect x="23" y="849.00" width="7" height="1" fill="#e6e6e6"/><rect x="7" y="856.00" width="23" height="1" fill="#e6e6e6"/><text transform="translate(19.8,859.00) rotate(-90) scale(0.92,1)" text-anchor="end" font-size="15.5" fill="#e6e6e6">225</text><rect x="23" y="864.00" width="7" height="1" fill="#e6e6e6"/><rect x="23" y="871.00" width="7" height="1" fill="#e6e6e6"/><rect x="23" y="878.00" width="7" height="1" fill="#e6e6e6"/><rect x="23" y="885.00" width="7" height="1" fill="#e6e6e6"/><rect x="18" y="892.00" width="12" height="1" fill="#e6e6e6"/><rect x="23" y="900.00" width="7" height="1" fill="#e6e6e6"/><rect x="23" y="907.00" width="7" height="1" fill="#e6e6e6"/><rect x="23" y="914.00" width="7" height="1" fill="#e6e6e6"/><rect x="23" y="921.00" width="7" height="1" fill="#e6e6e6"/><rect x="7" y="929.00" width="23" height="1" fill="#e6e6e6"/><text transform="translate(19.8,932.00) rotate(-90) scale(0.92,1)" text-anchor="end" font-size="15.5" fill="#e6e6e6">250</text><rect x="23" y="936.00" width="7" height="1" fill="#e6e6e6"/><rect x="23" y="943.00" width="7" height="1" fill="#e6e6e6"/><rect x="23" y="950.00" width="7" height="1" fill="#e6e6e6"/><rect x="23" y="957.00" width="7" height="1" fill="#e6e6e6"/><rect x="18" y="965.00" width="12" height="1" fill="#e6e6e6"/><rect x="23" y="972.00" width="7" height="1" fill="#e6e6e6"/><rect x="23" y="979.00" width="7" height="1" fill="#e6e6e6"/><rect x="23" y="986.00" width="7" height="1" fill="#e6e6e6"/><rect x="23" y="994.00" width="7" height="1" fill="#e6e6e6"/><rect x="7" y="1001.00" width="23" height="1" fill="#e6e6e6"/><text transform="translate(19.8,1004.00) rotate(-90) scale(0.92,1)" text-anchor="end" font-size="15.5" fill="#e6e6e6">275</text><rect x="23" y="1008.00" width="7" height="1" fill="#e6e6e6"/><rect x="23" y="1015.00" width="7" height="1" fill="#e6e6e6"/><rect x="23" y="1022.00" width="7" height="1" fill="#e6e6e6"/><rect x="23" y="1030.00" width="7" height="1" fill="#e6e6e6"/><rect x="18" y="1037.00" width="12" height="1" fill="#e6e6e6"/><rect x="23" y="1044.00" width="7" height="1" fill="#e6e6e6"/><rect x="23" y="1051.00" width="7" height="1" fill="#e6e6e6"/><rect x="23" y="1059.00" width="7" height="1" fill="#e6e6e6"/><rect x="23" y="1066.00" width="7" height="1" fill="#e6e6e6"/><rect x="7" y="1073.00" width="23" height="1" fill="#e6e6e6"/><text transform="translate(19.8,1076.00) rotate(-90) scale(0.92,1)" text-anchor="end" font-size="15.5" fill="#e6e6e6">300</text><rect x="23" y="1080.00" width="7" height="1" fill="#e6e6e6"/><rect x="23" y="1087.00" width="7" height="1" fill="#e6e6e6"/><rect x="23" y="1095.00" width="7" height="1" fill="#e6e6e6"/><rect x="23" y="1102.00" width="7" height="1" fill="#e6e6e6"/><rect x="18" y="1109.00" width="12" height="1" fill="#e6e6e6"/><rect x="23" y="1116.00" width="7" height="1" fill="#e6e6e6"/><rect x="23" y="1124.00" width="7" height="1" fill="#e6e6e6"/><rect x="23" y="1131.00" width="7" height="1" fill="#e6e6e6"/><rect x="23" y="1138.00" width="7" height="1" fill="#e6e6e6"/><rect x="7" y="1145.00" width="23" height="1" fill="#e6e6e6"/><text transform="translate(19.8,1148.00) rotate(-90) scale(0.92,1)" text-anchor="end" font-size="15.5" fill="#e6e6e6">325</text><rect x="23" y="1152.00" width="7" height="1" fill="#e6e6e6"/><rect x="23" y="1160.00" width="7" height="1" fill="#e6e6e6"/><rect x="23" y="1167.00" width="7" height="1" fill="#e6e6e6"/><rect x="23" y="1174.00" width="7" height="1" fill="#e6e6e6"/><rect x="18" y="1181.00" width="12" height="1" fill="#e6e6e6"/><rect x="23" y="1189.00" width="7" height="1" fill="#e6e6e6"/><rect x="23" y="1196.00" width="7" height="1" fill="#e6e6e6"/><rect x="23" y="1203.00" width="7" height="1" fill="#e6e6e6"/><rect x="23" y="1210.00" width="7" height="1" fill="#e6e6e6"/><rect x="7" y="1217.00" width="23" height="1" fill="#e6e6e6"/><text transform="translate(19.8,1220.00) rotate(-90) scale(0.92,1)" text-anchor="end" font-size="15.5" fill="#e6e6e6">350</text><rect x="23" y="1225.00" width="7" height="1" fill="#e6e6e6"/><rect x="23" y="1232.00" width="7" height="1" fill="#e6e6e6"/></svg>
<div style="left:57.0px;top:186.0px;width:1837.0px;height:1233.0px;background:#505050"></div>
<div style="left:597.0px;top:393.0px;width:607.0px;height:858.0px;border:1px solid #e8e8e8;box-sizing:border-box;box-shadow:0 0 0 1px rgba(0,0,0,0.13), inset 0 0 0 1px rgba(0,0,0,0.13)"></div>
<div style="left:1894.0px;top:156.0px;width:22.0px;height:1263.0px;background:#2e2e2e"></div>
<div style="left:0.0px;top:1441.0px;width:2557.0px;height:89.0px;background:#333333"></div>
<div style="left:25.0px;top:1419.0px;width:1891.0px;height:22.0px;background:#2f2f2f"></div>
<div style="left:1916.0px;top:156.0px;width:12.0px;height:1285.0px;background:#333333"></div>
<div style="left:1920.3px;top:791.9px;width:3.0px;height:3.0px;background:#f0f0f0;border-radius:50%"></div>
<div style="left:1920.3px;top:796.5px;width:3.0px;height:3.0px;background:#f0f0f0;border-radius:50%"></div>
<div style="left:1920.3px;top:801.0px;width:3.0px;height:3.0px;background:#f0f0f0;border-radius:50%"></div>
<div style="left:1900.8px;top:510.0px;width:8.3px;height:560.0px;background:#a6a6a6;border-radius:4px"></div>
<div style="left:1928.0px;top:161.0px;width:625.0px;height:1275.0px;background:#2c2c2c"></div>
<div style="left:1928.0px;top:161.0px;width:625.0px;height:37.0px;background:#282828"></div>
<div style="left:2510.0px;top:161.0px;width:43.0px;height:37.0px;background:#242424"></div>
<div style="left:2522.0px;top:164.0px;width:29.6px;height:30.0px;background:#282828;border-radius:6px"></div>
<svg style="position:absolute;left:2528.0px;top:172.0px;" width="18" height="14" viewBox="0 0 18 14"><path d="M3 4 L9 10 L15 4" fill="none" stroke="#a0a0a0" stroke-width="1.8"/></svg>
<div style="left:2344.8px;top:194.0px;width:164.8px;height:4.0px;background:#1a56a8"></div>
<div style="left:1928.0px;top:198.0px;width:625.0px;height:2.0px;background:#1d1d1d"></div>
<div class="t" id="t11" style="left:1968.64px;top:171.56px;font-size:18px;line-height:18px;color:#ececec;font-weight:400;transform:scaleX(0.9566);transform-origin:0 0;">Layers and Objects</div>
<div class="t" id="t12" style="left:2191.54px;top:171.56px;font-size:18px;line-height:18px;color:#ececec;font-weight:400;transform:scaleX(0.9646);transform-origin:0 0;">Fill and Stroke</div>
<div class="t" id="t13" style="left:2378.00px;top:171.56px;font-size:18px;line-height:18px;color:#ececec;font-weight:400;transform:scaleX(0.9308);transform-origin:0 0;">Trace Bitmap</div>
<svg style="position:absolute;left:2125.6px;top:174.0px;" width="9" height="9" viewBox="0 0 9 9"><path d="M1 1 L8 8 M8 1 L1 8" stroke="#a8a8a8" stroke-width="2"/></svg>
<svg style="position:absolute;left:2310.7px;top:174.0px;" width="9" height="9" viewBox="0 0 9 9"><path d="M1 1 L8 8 M8 1 L1 8" stroke="#a8a8a8" stroke-width="2"/></svg>
<svg style="position:absolute;left:2485.0px;top:174.0px;" width="9" height="9" viewBox="0 0 9 9"><path d="M1 1 L8 8 M8 1 L1 8" stroke="#a8a8a8" stroke-width="2"/></svg>
<svg style="position:absolute;left:1948.0px;top:170.0px;" width="18" height="18" viewBox="0 0 18 18"><path d="M4 3 H14 L12 6 H2 Z" fill="#2a9df4"/><path d="M4 8 H14 L12 11 H2 Z" fill="#8fc9f7"/><path d="M4 13 H14 L12 16 H2 Z" fill="#e8e8e8"/></svg>
<svg style="position:absolute;left:2170.0px;top:170.0px;" width="18" height="18" viewBox="0 0 18 18"><path d="M2 16 V2 H13" fill="none" stroke="#e8e8e8" stroke-width="1.5"/><path d="M16 3 L7 12" stroke="#e8e8e8" stroke-width="2.2"/><path d="M7 12 L4 16 L3 15 Z" fill="#2a9df4" stroke="#2a9df4" stroke-width="1.5"/></svg>
<svg style="position:absolute;left:2356.0px;top:171.0px;" width="17" height="16" viewBox="0 0 17 16"><rect x="1" y="2" width="14" height="12" fill="none" stroke="#27a33a" stroke-width="1.6"/><path d="M3 12 L7 6 L11 12 Z" fill="#27a33a"/><circle cx="11" cy="6" r="1.8" fill="#27a33a"/></svg>
<div style="left:1929.0px;top:199.0px;width:623.0px;height:387.0px;background:#2a2a2a;border:1px solid #1e1e1e;border-top:none;box-sizing:border-box"></div>
<div style="left:1930.0px;top:200.0px;width:621.0px;height:28.0px;background:#262626"></div>
<div style="left:1930.0px;top:228.0px;width:621.0px;height:1.0px;background:#1e1e1e"></div>
<div style="left:1937.0px;top:226.0px;width:102.0px;height:4.0px;background:#1a56a8"></div>
<div class="t" id="t14" style="left:1944.80px;top:207.56px;font-size:18px;line-height:18px;color:#ececec;font-weight:400;transform:scaleX(0.9365);transform-origin:0 0;">Single scan</div>
<div class="t" id="t15" style="left:2053.76px;top:207.56px;font-size:18px;line-height:18px;color:#ececec;font-weight:400;transform:scaleX(1.0352);transform-origin:0 0;">Multicolor</div>
<div class="t" id="t16" style="left:2155.25px;top:207.56px;font-size:18px;line-height:18px;color:#ececec;font-weight:400;transform:scaleX(0.9497);transform-origin:0 0;">Pixel art</div>
<div class="t" id="t17" style="left:1937.70px;top:238.06px;font-size:18px;line-height:18px;color:#ececec;font-weight:700;transform:scaleX(1.0049);transform-origin:0 0;">Detection mode:</div>
<div style="left:1938.6px;top:262.6px;width:603.9px;height:37.7px;background:#333333;border:1px solid #1c1c1c;border-radius:5px;box-sizing:border-box"></div>
<div class="t" id="t18" style="left:1949.70px;top:274.86px;font-size:18px;line-height:18px;color:#ececec;font-weight:400;transform:scaleX(0.9967);transform-origin:0 0;">Brightness cutoff</div>
<svg style="position:absolute;left:2518.0px;top:277.0px;" width="14" height="9" viewBox="0 0 14 9"><path d="M1 1 H13 L7 8 Z" fill="#e6e6e6"/></svg>
<div class="t" id="t19" style="left:1939.00px;top:314.46px;font-size:18px;line-height:18px;color:#ececec;font-weight:400;transform:scaleX(0.9667);transform-origin:0 0;">Threshold</div>
<div style="left:2110.3px;top:320.5px;width:325.0px;height:3.0px;background:#222222;border-radius:2px"></div>
<div style="left:2110.3px;top:320.5px;width:145.6px;height:3.0px;background:#1a55a6;border-radius:2px"></div>
<svg style="position:absolute;left:2245.4px;top:311.5px;" width="21" height="21" viewBox="0 0 21 21"><circle cx="10.5" cy="10.5" r="9.5" fill="#2c2c2c" stroke="#121212" stroke-width="1.3"/></svg>
<div style="left:2448.7px;top:305.7px;width:93.8px;height:32.3px;background:#2a2a2a;border:1px solid #1c1c1c;border-radius:5px;box-sizing:border-box"></div>
<div style="left:2508.0px;top:306.7px;width:1.0px;height:30.3px;background:#262626"></div>
<div style="left:2525.0px;top:306.7px;width:1.0px;height:30.3px;background:#262626"></div>
<div class="t" id="t20" style="left:2458.00px;top:314.46px;font-size:18px;line-height:18px;color:#ececec;font-weight:400;transform:scaleX(0.9704);transform-origin:0 0;">0.450</div>
<svg style="position:absolute;left:2510.0px;top:314.9px;" width="14" height="14" viewBox="0 0 14 14"><rect x="1" y="6.2" width="12" height="1.8" fill="#e6e6e6"/></svg>
<svg style="position:absolute;left:2527.0px;top:314.9px;" width="14" height="14" viewBox="0 0 14 14"><rect x="1" y="6.2" width="12" height="1.8" fill="#e6e6e6"/><rect x="6.1" y="1" width="1.8" height="12" fill="#e6e6e6"/></svg>
<div style="left:1941.8px;top:349.4px;width:16.0px;height:16.0px;background:#303030;border:1px solid #1a1a1a;border-radius:3px;box-sizing:border-box"></div>
<div class="t" id="t21" style="left:1961.50px;top:350.86px;font-size:18px;line-height:18px;color:#ececec;font-weight:400;transform:scaleX(1.0048);transform-origin:0 0;">Invert image</div>
<div class="t" id="t22" style="left:1937.71px;top:381.06px;font-size:18px;line-height:18px;color:#ececec;font-weight:700;transform:scaleX(0.9885);transform-origin:0 0;">Details:</div>
<div style="left:1941.8px;top:414.0px;width:16.0px;height:16.0px;background:#1c71d8;border-radius:3px"></div>
<svg style="position:absolute;left:1941.8px;top:414.0px;" width="16" height="16" viewBox="0 0 16 16"><path d="M3.5 8.2 L6.6 11.2 L12.5 4.8" fill="none" stroke="#fff" stroke-width="2.2"/></svg>
<div class="t" id="t23" style="left:1962.50px;top:414.46px;font-size:18px;line-height:18px;color:#ececec;font-weight:400;transform:scaleX(0.9173);transform-origin:0 0;">Speckles</div>
<div style="left:2110.3px;top:420.2px;width:325.0px;height:3.0px;background:#222222;border-radius:2px"></div>
<svg style="position:absolute;left:2100.3px;top:411.2px;" width="21" height="21" viewBox="0 0 21 21"><circle cx="10.5" cy="10.5" r="9.5" fill="#2c2c2c" stroke="#121212" stroke-width="1.3"/></svg>
<div style="left:2448.7px;top:406.0px;width:93.8px;height:31.8px;background:#2a2a2a;border:1px solid #1c1c1c;border-radius:5px;box-sizing:border-box"></div>
<div style="left:2508.0px;top:407.0px;width:1.0px;height:29.8px;background:#262626"></div>
<div style="left:2525.0px;top:407.0px;width:1.0px;height:29.8px;background:#262626"></div>
<div class="t" id="t24" style="left:2458.00px;top:414.46px;font-size:18px;line-height:18px;color:#ececec;font-weight:400;">2</div>
<svg style="position:absolute;left:2510.0px;top:414.9px;" width="14" height="14" viewBox="0 0 14 14"><rect x="1" y="6.2" width="12" height="1.8" fill="#e6e6e6"/></svg>
<svg style="position:absolute;left:2527.0px;top:414.9px;" width="14" height="14" viewBox="0 0 14 14"><rect x="1" y="6.2" width="12" height="1.8" fill="#e6e6e6"/><rect x="6.1" y="1" width="1.8" height="12" fill="#e6e6e6"/></svg>
<div style="left:1941.8px;top:452.0px;width:16.0px;height:16.0px;background:#1c71d8;border-radius:3px"></div>
<svg style="position:absolute;left:1941.8px;top:452.0px;" width="16" height="16" viewBox="0 0 16 16"><path d="M3.5 8.2 L6.6 11.2 L12.5 4.8" fill="none" stroke="#fff" stroke-width="2.2"/></svg>
<div class="t" id="t25" style="left:1962.50px;top:452.46px;font-size:18px;line-height:18px;color:#ececec;font-weight:400;transform:scaleX(0.9917);transform-origin:0 0;">Smooth corners</div>
<div style="left:2110.3px;top:458.5px;width:325.0px;height:3.0px;background:#222222;border-radius:2px"></div>
<div style="left:2110.3px;top:458.5px;width:241.3px;height:3.0px;background:#1a55a6;border-radius:2px"></div>
<svg style="position:absolute;left:2341.1px;top:449.5px;" width="21" height="21" viewBox="0 0 21 21"><circle cx="10.5" cy="10.5" r="9.5" fill="#2c2c2c" stroke="#121212" stroke-width="1.3"/></svg>
<div style="left:2448.7px;top:443.8px;width:93.8px;height:32.2px;background:#2a2a2a;border:1px solid #1c1c1c;border-radius:5px;box-sizing:border-box"></div>
<div style="left:2508.0px;top:444.8px;width:1.0px;height:30.2px;background:#262626"></div>
<div style="left:2525.0px;top:444.8px;width:1.0px;height:30.2px;background:#262626"></div>
<div class="t" id="t26" style="left:2458.03px;top:452.46px;font-size:18px;line-height:18px;color:#ececec;font-weight:400;transform:scaleX(0.9699);transform-origin:0 0;">1.00</div>
<svg style="position:absolute;left:2510.0px;top:452.9px;" width="14" height="14" viewBox="0 0 14 14"><rect x="1" y="6.2" width="12" height="1.8" fill="#e6e6e6"/></svg>
<svg style="position:absolute;left:2527.0px;top:452.9px;" width="14" height="14" viewBox="0 0 14 14"><rect x="1" y="6.2" width="12" height="1.8" fill="#e6e6e6"/><rect x="6.1" y="1" width="1.8" height="12" fill="#e6e6e6"/></svg>
<div style="left:1941.8px;top:490.4px;width:16.0px;height:16.0px;background:#1c71d8;border-radius:3px"></div>
<svg style="position:absolute;left:1941.8px;top:490.4px;" width="16" height="16" viewBox="0 0 16 16"><path d="M3.5 8.2 L6.6 11.2 L12.5 4.8" fill="none" stroke="#fff" stroke-width="2.2"/></svg>
<div class="t" id="t27" style="left:1962.50px;top:490.46px;font-size:18px;line-height:18px;color:#ececec;font-weight:400;transform:scaleX(1.0070);transform-origin:0 0;">Optimize</div>
<div style="left:2110.3px;top:496.2px;width:325.0px;height:3.0px;background:#222222;border-radius:2px"></div>
<div style="left:2110.3px;top:496.2px;width:12.1px;height:3.0px;background:#1a55a6;border-radius:2px"></div>
<svg style="position:absolute;left:2111.9px;top:487.2px;" width="21" height="21" viewBox="0 0 21 21"><circle cx="10.5" cy="10.5" r="9.5" fill="#2c2c2c" stroke="#121212" stroke-width="1.3"/></svg>
<div style="left:2448.7px;top:481.5px;width:93.8px;height:32.9px;background:#2a2a2a;border:1px solid #1c1c1c;border-radius:5px;box-sizing:border-box"></div>
<div style="left:2508.0px;top:482.5px;width:1.0px;height:30.9px;background:#262626"></div>
<div style="left:2525.0px;top:482.5px;width:1.0px;height:30.9px;background:#262626"></div>
<div class="t" id="t28" style="left:2458.00px;top:490.46px;font-size:18px;line-height:18px;color:#ececec;font-weight:400;transform:scaleX(0.9704);transform-origin:0 0;">0.200</div>
<svg style="position:absolute;left:2510.0px;top:490.9px;" width="14" height="14" viewBox="0 0 14 14"><rect x="1" y="6.2" width="12" height="1.8" fill="#e6e6e6"/></svg>
<svg style="position:absolute;left:2527.0px;top:490.9px;" width="14" height="14" viewBox="0 0 14 14"><rect x="1" y="6.2" width="12" height="1.8" fill="#e6e6e6"/><rect x="6.1" y="1" width="1.8" height="12" fill="#e6e6e6"/></svg>
<div style="left:1941.8px;top:525.5px;width:16.0px;height:16.0px;background:#303030;border:1px solid #1a1a1a;border-radius:3px;box-sizing:border-box"></div>
<div class="t" id="t29" style="left:1961.55px;top:527.26px;font-size:18px;line-height:18px;color:#ececec;font-weight:400;transform:scaleX(0.9543);transform-origin:0 0;">User-assisted trace</div>
<div class="t" id="t30" style="left:1932.76px;top:595.26px;font-size:18px;line-height:18px;color:#ececec;font-weight:400;transform:scaleX(0.9400);transform-origin:0 0;">Preview:</div>
<div style="left:1942.0px;top:1359.6px;width:16.0px;height:16.0px;background:#1c71d8;border-radius:3px"></div>
<svg style="position:absolute;left:1942.0px;top:1359.6px;" width="16" height="16" viewBox="0 0 16 16"><path d="M3.5 8.2 L6.6 11.2 L12.5 4.8" fill="none" stroke="#fff" stroke-width="2.2"/></svg>
<div class="t" id="t31" style="left:1961.63px;top:1360.56px;font-size:18px;line-height:18px;color:#ececec;font-weight:400;transform:scaleX(0.9696);transform-origin:0 0;">Live updates</div>
<div style="left:2385.6px;top:1350.6px;width:156.8px;height:33.7px;background:#303030;border:1px solid #1c1c1c;border-radius:6px;box-sizing:border-box"></div>
<div class="t" id="t32" style="left:2401.41px;top:1360.56px;font-size:18px;line-height:18px;color:#ececec;font-weight:400;transform:scaleX(0.9883);transform-origin:0 0;">Update preview</div>
<div style="left:1933.6px;top:1395.6px;width:34.9px;height:33.7px;background:#303030;border:1px solid #1c1c1c;border-radius:6px;box-sizing:border-box"></div>
<svg style="position:absolute;left:1942.0px;top:1403.5px;" width="18" height="18" viewBox="0 0 18 18"><circle cx="9" cy="9" r="7.5" fill="none" stroke="#e6e6e6" stroke-width="1.4"/><text x="9" y="13.2" text-anchor="middle" font-family="Liberation Serif" font-style="italic" font-size="12" fill="#e6e6e6">i</text></svg>
<div style="left:2187.4px;top:1395.6px;width:149.0px;height:33.7px;background:#303030;border:1px solid #1c1c1c;border-radius:6px;box-sizing:border-box"></div>
<div class="t" id="t33" style="left:2238.00px;top:1405.76px;font-size:18px;line-height:18px;color:#ececec;font-weight:400;transform:scaleX(1.0438);transform-origin:0 0;">Apply</div>
<div style="left:1961.0px;top:619.5px;width:558.5px;height:726.3px;background:#ffffff;overflow:hidden"></div>
<svg style="position:absolute;left:1961px;top:619.5px" width="558.5" height="726.3" viewBox="0 0 558.5 726.3"><defs><path id="dots" d="M152.6 61.2a4.45 4.45 0 1 0 8.9 0a4.45 4.45 0 1 0 -8.9 0M222.4 61.2a4.45 4.45 0 1 0 8.9 0a4.45 4.45 0 1 0 -8.9 0M117.7 69.9a4.45 4.45 0 1 0 8.9 0a4.45 4.45 0 1 0 -8.9 0M126.4 69.9a4.45 4.45 0 1 0 8.9 0a4.45 4.45 0 1 0 -8.9 0M143.9 69.9a4.45 4.45 0 1 0 8.9 0a4.45 4.45 0 1 0 -8.9 0M161.4 69.9a4.45 4.45 0 1 0 8.9 0a4.45 4.45 0 1 0 -8.9 0M187.5 69.9a4.45 4.45 0 1 0 8.9 0a4.45 4.45 0 1 0 -8.9 0M196.3 69.9a4.45 4.45 0 1 0 8.9 0a4.45 4.45 0 1 0 -8.9 0M205.0 69.9a4.45 4.45 0 1 0 8.9 0a4.45 4.45 0 1 0 -8.9 0M213.7 69.9a4.45 4.45 0 1 0 8.9 0a4.45 4.45 0 1 0 -8.9 0M222.4 69.9a4.45 4.45 0 1 0 8.9 0a4.45 4.45 0 1 0 -8.9 0M117.7 78.7a4.45 4.45 0 1 0 8.9 0a4.45 4.45 0 1 0 -8.9 0M126.4 78.7a4.45 4.45 0 1 0 8.9 0a4.45 4.45 0 1 0 -8.9 0M135.2 78.7a4.45 4.45 0 1 0 8.9 0a4.45 4.45 0 1 0 -8.9 0M143.9 78.7a4.45 4.45 0 1 0 8.9 0a4.45 4.45 0 1 0 -8.9 0M152.6 78.7a4.45 4.45 0 1 0 8.9 0a4.45 4.45 0 1 0 -8.9 0M161.4 78.7a4.45 4.45 0 1 0 8.9 0a4.45 4.45 0 1 0 -8.9 0M170.1 78.7a4.45 4.45 0 1 0 8.9 0a4.45 4.45 0 1 0 -8.9 0M178.8 78.7a4.45 4.45 0 1 0 8.9 0a4.45 4.45 0 1 0 -8.9 0M187.5 78.7a4.45 4.45 0 1 0 8.9 0a4.45 4.45 0 1 0 -8.9 0M196.3 78.7a4.45 4.45 0 1 0 8.9 0a4.45 4.45 0 1 0 -8.9 0M205.0 78.7a4.45 4.45 0 1 0 8.9 0a4.45 4.45 0 1 0 -8.9 0M213.7 78.7a4.45 4.45 0 1 0 8.9 0a4.45 4.45 0 1 0 -8.9 0M222.4 78.7a4.45 4.45 0 1 0 8.9 0a4.45 4.45 0 1 0 -8.9 0M109.0 87.4a4.45 4.45 0 1 0 8.9 0a4.45 4.45 0 1 0 -8.9 0M117.7 87.4a4.45 4.45 0 1 0 8.9 0a4.45 4.45 0 1 0 -8.9 0M135.2 87.4a4.45 4.45 0 1 0 8.9 0a4.45 4.45 0 1 0 -8.9 0M143.9 87.4a4.45 4.45 0 1 0 8.9 0a4.45 4.45 0 1 0 -8.9 0M152.6 87.4a4.45 4.45 0 1 0 8.9 0a4.45 4.45 0 1 0 -8.9 0M161.4 87.4a4.45 4.45 0 1 0 8.9 0a4.45 4.45 0 1 0 -8.9 0M170.1 87.4a4.45 4.45 0 1 0 8.9 0a4.45 4.45 0 1 0 -8.9 0M178.8 87.4a4.45 4.45 0 1 0 8.9 0a4.45 4.45 0 1 0 -8.9 0M187.5 87.4a4.45 4.45 0 1 0 8.9 0a4.45 4.45 0 1 0 -8.9 0M196.3 87.4a4.45 4.45 0 1 0 8.9 0a4.45 4.45 0 1 0 -8.9 0M205.0 87.4a4.45 4.45 0 1 0 8.9 0a4.45 4.45 0 1 0 -8.9 0M213.7 87.4a4.45 4.45 0 1 0 8.9 0a4.45 4.45 0 1 0 -8.9 0M222.4 87.4a4.45 4.45 0 1 0 8.9 0a4.45 4.45 0 1 0 -8.9 0M100.3 96.2a4.45 4.45 0 1 0 8.9 0a4.45 4.45 0 1 0 -8.9 0M109.0 96.2a4.45 4.45 0 1 0 8.9 0a4.45 4.45 0 1 0 -8.9 0M117.7 96.2a4.45 4.45 0 1 0 8.9 0a4.45 4.45 0 1 0 -8.9 0M126.4 96.2a4.45 4.45 0 1 0 8.9 0a4.45 4.45 0 1 0 -8.9 0M143.9 96.2a4.45 4.45 0 1 0 8.9 0a4.45 4.45 0 1 0 -8.9 0M152.6 96.2a4.45 4.45 0 1 0 8.9 0a4.45 4.45 0 1 0 -8.9 0M161.4 96.2a4.45 4.45 0 1 0 8.9 0a4.45 4.45 0 1 0 -8.9 0M170.1 96.2a4.45 4.45 0 1 0 8.9 0a4.45 4.45 0 1 0 -8.9 0M178.8 96.2a4.45 4.45 0 1 0 8.9 0a4.45 4.45 0 1 0 -8.9 0M187.5 96.2a4.45 4.45 0 1 0 8.9 0a4.45 4.45 0 1 0 -8.9 0M213.7 96.2a4.45 4.45 0 1 0 8.9 0a4.45 4.45 0 1 0 -8.9 0M239.9 96.2a4.45 4.45 0 1 0 8.9 0a4.45 4.45 0 1 0 -8.9 0M91.5 104.9a4.45 4.45 0 1 0 8.9 0a4.45 4.45 0 1 0 -8.9 0M100.3 104.9a4.45 4.45 0 1 0 8.9 0a4.45 4.45 0 1 0 -8.9 0M109.0 104.9a4.45 4.45 0 1 0 8.9 0a4.45 4.45 0 1 0 -8.9 0M143.9 104.9a4.45 4.45 0 1 0 8.9 0a4.45 4.45 0 1 0 -8.9 0M205.0 104.9a4.45 4.45 0 1 0 8.9 0a4.45 4.45 0 1 0 -8.9 0M266.1 104.9a4.45 4.45 0 1 0 8.9 0a4.45 4.45 0 1 0 -8.9 0M274.8 104.9a4.45 4.45 0 1 0 8.9 0a4.45 4.45 0 1 0 -8.9 0M82.8 113.6a4.45 4.45 0 1 0 8.9 0a4.45 4.45 0 1 0 -8.9 0M91.5 113.6a4.45 4.45 0 1 0 8.9 0a4.45 4.45 0 1 0 -8.9 0M100.3 113.6a4.45 4.45 0 1 0 8.9 0a4.45 4.45 0 1 0 -8.9 0M117.7 113.6a4.45 4.45 0 1 0 8.9 0a4.45 4.45 0 1 0 -8.9 0M135.2 113.6a4.45 4.45 0 1 0 8.9 0a4.45 4.45 0 1 0 -8.9 0M143.9 113.6a4.45 4.45 0 1 0 8.9 0a4.45 4.45 0 1 0 -8.9 0M152.6 113.6a4.45 4.45 0 1 0 8.9 0a4.45 4.45 0 1 0 -8.9 0M187.5 113.6a4.45 4.45 0 1 0 8.9 0a4.45 4.45 0 1 0 -8.9 0M231.2 113.6a4.45 4.45 0 1 0 8.9 0a4.45 4.45 0 1 0 -8.9 0M248.6 113.6a4.45 4.45 0 1 0 8.9 0a4.45 4.45 0 1 0 -8.9 0M283.5 113.6a4.45 4.45 0 1 0 8.9 0a4.45 4.45 0 1 0 -8.9 0M82.8 122.4a4.45 4.45 0 1 0 8.9 0a4.45 4.45 0 1 0 -8.9 0M91.5 122.4a4.45 4.45 0 1 0 8.9 0a4.45 4.45 0 1 0 -8.9 0M100.3 122.4a4.45 4.45 0 1 0 8.9 0a4.45 4.45 0 1 0 -8.9 0M109.0 122.4a4.45 4.45 0 1 0 8.9 0a4.45 4.45 0 1 0 -8.9 0M126.4 122.4a4.45 4.45 0 1 0 8.9 0a4.45 4.45 0 1 0 -8.9 0M135.2 122.4a4.45 4.45 0 1 0 8.9 0a4.45 4.45 0 1 0 -8.9 0M152.6 122.4a4.45 4.45 0 1 0 8.9 0a4.45 4.45 0 1 0 -8.9 0M161.4 122.4a4.45 4.45 0 1 0 8.9 0a4.45 4.45 0 1 0 -8.9 0M178.8 122.4a4.45 4.45 0 1 0 8.9 0a4.45 4.45 0 1 0 -8.9 0M187.5 122.4a4.45 4.45 0 1 0 8.9 0a4.45 4.45 0 1 0 -8.9 0M196.3 122.4a4.45 4.45 0 1 0 8.9 0a4.45 4.45 0 1 0 -8.9 0M213.7 122.4a4.45 4.45 0 1 0 8.9 0a4.45 4.45 0 1 0 -8.9 0M231.2 122.4a4.45 4.45 0 1 0 8.9 0a4.45 4.45 0 1 0 -8.9 0M257.3 122.4a4.45 4.45 0 1 0 8.9 0a4.45 4.45 0 1 0 -8.9 0M283.5 122.4a4.45 4.45 0 1 0 8.9 0a4.45 4.45 0 1 0 -8.9 0M82.8 131.1a4.45 4.45 0 1 0 8.9 0a4.45 4.45 0 1 0 -8.9 0M100.3 131.1a4.45 4.45 0 1 0 8.9 0a4.45 4.45 0 1 0 -8.9 0M109.0 131.1a4.45 4.45 0 1 0 8.9 0a4.45 4.45 0 1 0 -8.9 0M143.9 131.1a4.45 4.45 0 1 0 8.9 0a4.45 4.45 0 1 0 -8.9 0M152.6 131.1a4.45 4.45 0 1 0 8.9 0a4.45 4.45 0 1 0 -8.9 0M161.4 131.1a4.45 4.45 0 1 0 8.9 0a4.45 4.45 0 1 0 -8.9 0M170.1 131.1a4.45 4.45 0 1 0 8.9 0a4.45 4.45 0 1 0 -8.9 0M178.8 131.1a4.45 4.45 0 1 0 8.9 0a4.45 4.45 0 1 0 -8.9 0M187.5 131.1a4.45 4.45 0 1 0 8.9 0a4.45 4.45 0 1 0 -8.9 0M205.0 131.1a4.45 4.45 0 1 0 8.9 0a4.45 4.45 0 1 0 -8.9 0M222.4 131.1a4.45 4.45 0 1 0 8.9 0a4.45 4.45 0 1 0 -8.9 0M231.2 131.1a4.45 4.45 0 1 0 8.9 0a4.45 4.45 0 1 0 -8.9 0M248.6 131.1a4.45 4.45 0 1 0 8.9 0a4.45 4.45 0 1 0 -8.9 0M257.3 131.1a4.45 4.45 0 1 0 8.9 0a4.45 4.45 0 1 0 -8.9 0M266.1 131.1a4.45 4.45 0 1 0 8.9 0a4.45 4.45 0 1 0 -8.9 0M292.3 131.1a4.45 4.45 0 1 0 8.9 0a4.45 4.45 0 1 0 -8.9 0M82.8 139.9a4.45 4.45 0 1 0 8.9 0a4.45 4.45 0 1 0 -8.9 0M91.5 139.9a4.45 4.45 0 1 0 8.9 0a4.45 4.45 0 1 0 -8.9 0M100.3 139.9a4.45 4.45 0 1 0 8.9 0a4.45 4.45 0 1 0 -8.9 0M109.0 139.9a4.45 4.45 0 1 0 8.9 0a4.45 4.45 0 1 0 -8.9 0M117.7 139.9a4.45 4.45 0 1 0 8.9 0a4.45 4.45 0 1 0 -8.9 0M126.4 139.9a4.45 4.45 0 1 0 8.9 0a4.45 4.45 0 1 0 -8.9 0M135.2 139.9a4.45 4.45 0 1 0 8.9 0a4.45 4.45 0 1 0 -8.9 0M161.4 139.9a4.45 4.45 0 1 0 8.9 0a4.45 4.45 0 1 0 -8.9 0M178.8 139.9a4.45 4.45 0 1 0 8.9 0a4.45 4.45 0 1 0 -8.9 0M187.5 139.9a4.45 4.45 0 1 0 8.9 0a4.45 4.45 0 1 0 -8.9 0M196.3 139.9a4.45 4.45 0 1 0 8.9 0a4.45 4.45 0 1 0 -8.9 0M205.0 139.9a4.45 4.45 0 1 0 8.9 0a4.45 4.45 0 1 0 -8.9 0M213.7 139.9a4.45 4.45 0 1 0 8.9 0a4.45 4.45 0 1 0 -8.9 0M222.4 139.9a4.45 4.45 0 1 0 8.9 0a4.45 4.45 0 1 0 -8.9 0M231.2 139.9a4.45 4.45 0 1 0 8.9 0a4.45 4.45 0 1 0 -8.9 0M239.9 139.9a4.45 4.45 0 1 0 8.9 0a4.45 4.45 0 1 0 -8.9 0M257.3 139.9a4.45 4.45 0 1 0 8.9 0a4.45 4.45 0 1 0 -8.9 0M266.1 139.9a4.45 4.45 0 1 0 8.9 0a4.45 4.45 0 1 0 -8.9 0M292.3 139.9a4.45 4.45 0 1 0 8.9 0a4.45 4.45 0 1 0 -8.9 0M82.8 148.6a4.45 4.45 0 1 0 8.9 0a4.45 4.45 0 1 0 -8.9 0M100.3 148.6a4.45 4.45 0 1 0 8.9 0a4.45 4.45 0 1 0 -8.9 0M109.0 148.6a4.45 4.45 0 1 0 8.9 0a4.45 4.45 0 1 0 -8.9 0M117.7 148.6a4.45 4.45 0 1 0 8.9 0a4.45 4.45 0 1 0 -8.9 0M126.4 148.6a4.45 4.45 0 1 0 8.9 0a4.45 4.45 0 1 0 -8.9 0M135.2 148.6a4.45 4.45 0 1 0 8.9 0a4.45 4.45 0 1 0 -8.9 0M143.9 148.6a4.45 4.45 0 1 0 8.9 0a4.45 4.45 0 1 0 -8.9 0M152.6 148.6a4.45 4.45 0 1 0 8.9 0a4.45 4.45 0 1 0 -8.9 0M161.4 148.6a4.45 4.45 0 1 0 8.9 0a4.45 4.45 0 1 0 -8.9 0M170.1 148.6a4.45 4.45 0 1 0 8.9 0a4.45 4.45 0 1 0 -8.9 0M178.8 148.6a4.45 4.45 0 1 0 8.9 0a4.45 4.45 0 1 0 -8.9 0M187.5 148.6a4.45 4.45 0 1 0 8.9 0a4.45 4.45 0 1 0 -8.9 0M196.3 148.6a4.45 4.45 0 1 0 8.9 0a4.45 4.45 0 1 0 -8.9 0M205.0 148.6a4.45 4.45 0 1 0 8.9 0a4.45 4.45 0 1 0 -8.9 0M222.4 148.6a4.45 4.45 0 1 0 8.9 0a4.45 4.45 0 1 0 -8.9 0M239.9 148.6a4.45 4.45 0 1 0 8.9 0a4.45 4.45 0 1 0 -8.9 0M248.6 148.6a4.45 4.45 0 1 0 8.9 0a4.45 4.45 0 1 0 -8.9 0M257.3 148.6a4.45 4.45 0 1 0 8.9 0a4.45 4.45 0 1 0 -8.9 0M266.1 148.6a4.45 4.45 0 1 0 8.9 0a4.45 4.45 0 1 0 -8.9 0M74.1 157.3a4.45 4.45 0 1 0 8.9 0a4.45 4.45 0 1 0 -8.9 0M91.5 157.3a4.45 4.45 0 1 0 8.9 0a4.45 4.45 0 1 0 -8.9 0M100.3 157.3a4.45 4.45 0 1 0 8.9 0a4.45 4.45 0 1 0 -8.9 0M109.0 157.3a4.45 4.45 0 1 0 8.9 0a4.45 4.45 0 1 0 -8.9 0M117.7 157.3a4.45 4.45 0 1 0 8.9 0a4.45 4.45 0 1 0 -8.9 0M126.4 157.3a4.45 4.45 0 1 0 8.9 0a4.45 4.45 0 1 0 -8.9 0M143.9 157.3a4.45 4.45 0 1 0 8.9 0a4.45 4.45 0 1 0 -8.9 0M152.6 157.3a4.45 4.45 0 1 0 8.9 0a4.45 4.45 0 1 0 -8.9 0M161.4 157.3a4.45 4.45 0 1 0 8.9 0a4.45 4.45 0 1 0 -8.9 0M170.1 157.3a4.45 4.45 0 1 0 8.9 0a4.45 4.45 0 1 0 -8.9 0M178.8 157.3a4.45 4.45 0 1 0 8.9 0a4.45 4.45 0 1 0 -8.9 0M187.5 157.3a4.45 4.45 0 1 0 8.9 0a4.45 4.45 0 1 0 -8.9 0M196.3 157.3a4.45 4.45 0 1 0 8.9 0a4.45 4.45 0 1 0 -8.9 0M205.0 157.3a4.45 4.45 0 1 0 8.9 0a4.45 4.45 0 1 0 -8.9 0M231.2 157.3a4.45 4.45 0 1 0 8.9 0a4.45 4.45 0 1 0 -8.9 0M239.9 157.3a4.45 4.45 0 1 0 8.9 0a4.45 4.45 0 1 0 -8.9 0M248.6 157.3a4.45 4.45 0 1 0 8.9 0a4.45 4.45 0 1 0 -8.9 0M257.3 157.3a4.45 4.45 0 1 0 8.9 0a4.45 4.45 0 1 0 -8.9 0M82.8 166.1a4.45 4.45 0 1 0 8.9 0a4.45 4.45 0 1 0 -8.9 0M91.5 166.1a4.45 4.45 0 1 0 8.9 0a4.45 4.45 0 1 0 -8.9 0M100.3 166.1a4.45 4.45 0 1 0 8.9 0a4.45 4.45 0 1 0 -8.9 0M109.0 166.1a4.45 4.45 0 1 0 8.9 0a4.45 4.45 0 1 0 -8.9 0M117.7 166.1a4.45 4.45 0 1 0 8.9 0a4.45 4.45 0 1 0 -8.9 0M126.4 166.1a4.45 4.45 0 1 0 8.9 0a4.45 4.45 0 1 0 -8.9 0M135.2 166.1a4.45 4.45 0 1 0 8.9 0a4.45 4.45 0 1 0 -8.9 0M143.9 166.1a4.45 4.45 0 1 0 8.9 0a4.45 4.45 0 1 0 -8.9 0M152.6 166.1a4.45 4.45 0 1 0 8.9 0a4.45 4.45 0 1 0 -8.9 0M161.4 166.1a4.45 4.45 0 1 0 8.9 0a4.45 4.45 0 1 0 -8.9 0M170.1 166.1a4.45 4.45 0 1 0 8.9 0a4.45 4.45 0 1 0 -8.9 0M187.5 166.1a4.45 4.45 0 1 0 8.9 0a4.45 4.45 0 1 0 -8.9 0M196.3 166.1a4.45 4.45 0 1 0 8.9 0a4.45 4.45 0 1 0 -8.9 0M213.7 166.1a4.45 4.45 0 1 0 8.9 0a4.45 4.45 0 1 0 -8.9 0M222.4 166.1a4.45 4.45 0 1 0 8.9 0a4.45 4.45 0 1 0 -8.9 0M231.2 166.1a4.45 4.45 0 1 0 8.9 0a4.45 4.45 0 1 0 -8.9 0M239.9 166.1a4.45 4.45 0 1 0 8.9 0a4.45 4.45 0 1 0 -8.9 0M248.6 166.1a4.45 4.45 0 1 0 8.9 0a4.45 4.45 0 1 0 -8.9 0M82.8 174.8a4.45 4.45 0 1 0 8.9 0a4.45 4.45 0 1 0 -8.9 0M91.5 174.8a4.45 4.45 0 1 0 8.9 0a4.45 4.45 0 1 0 -8.9 0M100.3 174.8a4.45 4.45 0 1 0 8.9 0a4.45 4.45 0 1 0 -8.9 0M109.0 174.8a4.45 4.45 0 1 0 8.9 0a4.45 4.45 0 1 0 -8.9 0M117.7 174.8a4.45 4.45 0 1 0 8.9 0a4.45 4.45 0 1 0 -8.9 0M126.4 174.8a4.45 4.45 0 1 0 8.9 0a4.45 4.45 0 1 0 -8.9 0M135.2 174.8a4.45 4.45 0 1 0 8.9 0a4.45 4.45 0 1 0 -8.9 0M152.6 174.8a4.45 4.45 0 1 0 8.9 0a4.45 4.45 0 1 0 -8.9 0M161.4 174.8a4.45 4.45 0 1 0 8.9 0a4.45 4.45 0 1 0 -8.9 0M170.1 174.8a4.45 4.45 0 1 0 8.9 0a4.45 4.45 0 1 0 -8.9 0M178.8 174.8a4.45 4.45 0 1 0 8.9 0a4.45 4.45 0 1 0 -8.9 0M187.5 174.8a4.45 4.45 0 1 0 8.9 0a4.45 4.45 0 1 0 -8.9 0M196.3 174.8a4.45 4.45 0 1 0 8.9 0a4.45 4.45 0 1 0 -8.9 0M205.0 174.8a4.45 4.45 0 1 0 8.9 0a4.45 4.45 0 1 0 -8.9 0M213.7 174.8a4.45 4.45 0 1 0 8.9 0a4.45 4.45 0 1 0 -8.9 0M222.4 174.8a4.45 4.45 0 1 0 8.9 0a4.45 4.45 0 1 0 -8.9 0M231.2 174.8a4.45 4.45 0 1 0 8.9 0a4.45 4.45 0 1 0 -8.9 0M239.9 174.8a4.45 4.45 0 1 0 8.9 0a4.45 4.45 0 1 0 -8.9 0M248.6 174.8a4.45 4.45 0 1 0 8.9 0a4.45 4.45 0 1 0 -8.9 0M257.3 174.8a4.45 4.45 0 1 0 8.9 0a4.45 4.45 0 1 0 -8.9 0M65.4 183.6a4.45 4.45 0 1 0 8.9 0a4.45 4.45 0 1 0 -8.9 0M82.8 183.6a4.45 4.45 0 1 0 8.9 0a4.45 4.45 0 1 0 -8.9 0M91.5 183.6a4.45 4.45 0 1 0 8.9 0a4.45 4.45 0 1 0 -8.9 0M100.3 183.6a4.45 4.45 0 1 0 8.9 0a4.45 4.45 0 1 0 -8.9 0M109.0 183.6a4.45 4.45 0 1 0 8.9 0a4.45 4.45 0 1 0 -8.9 0M117.7 183.6a4.45 4.45 0 1 0 8.9 0a4.45 4.45 0 1 0 -8.9 0M126.4 183.6a4.45 4.45 0 1 0 8.9 0a4.45 4.45 0 1 0 -8.9 0M135.2 183.6a4.45 4.45 0 1 0 8.9 0a4.45 4.45 0 1 0 -8.9 0M143.9 183.6a4.45 4.45 0 1 0 8.9 0a4.45 4.45 0 1 0 -8.9 0M152.6 183.6a4.45 4.45 0 1 0 8.9 0a4.45 4.45 0 1 0 -8.9 0M161.4 183.6a4.45 4.45 0 1 0 8.9 0a4.45 4.45 0 1 0 -8.9 0M170.1 183.6a4.45 4.45 0 1 0 8.9 0a4.45 4.45 0 1 0 -8.9 0M178.8 183.6a4.45 4.45 0 1 0 8.9 0a4.45 4.45 0 1 0 -8.9 0M187.5 183.6a4.45 4.45 0 1 0 8.9 0a4.45 4.45 0 1 0 -8.9 0M196.3 183.6a4.45 4.45 0 1 0 8.9 0a4.45 4.45 0 1 0 -8.9 0M205.0 183.6a4.45 4.45 0 1 0 8.9 0a4.45 4.45 0 1 0 -8.9 0M213.7 183.6a4.45 4.45 0 1 0 8.9 0a4.45 4.45 0 1 0 -8.9 0M222.4 183.6a4.45 4.45 0 1 0 8.9 0a4.45 4.45 0 1 0 -8.9 0M231.2 183.6a4.45 4.45 0 1 0 8.9 0a4.45 4.45 0 1 0 -8.9 0M239.9 183.6a4.45 4.45 0 1 0 8.9 0a4.45 4.45 0 1 0 -8.9 0M248.6 183.6a4.45 4.45 0 1 0 8.9 0a4.45 4.45 0 1 0 -8.9 0M257.3 183.6a4.45 4.45 0 1 0 8.9 0a4.45 4.45 0 1 0 -8.9 0M65.4 192.3a4.45 4.45 0 1 0 8.9 0a4.45 4.45 0 1 0 -8.9 0M74.1 192.3a4.45 4.45 0 1 0 8.9 0a4.45 4.45 0 1 0 -8.9 0M82.8 192.3a4.45 4.45 0 1 0 8.9 0a4.45 4.45 0 1 0 -8.9 0M91.5 192.3a4.45 4.45 0 1 0 8.9 0a4.45 4.45 0 1 0 -8.9 0M100.3 192.3a4.45 4.45 0 1 0 8.9 0a4.45 4.45 0 1 0 -8.9 0M109.0 192.3a4.45 4.45 0 1 0 8.9 0a4.45 4.45 0 1 0 -8.9 0M117.7 192.3a4.45 4.45 0 1 0 8.9 0a4.45 4.45 0 1 0 -8.9 0M126.4 192.3a4.45 4.45 0 1 0 8.9 0a4.45 4.45 0 1 0 -8.9 0M135.2 192.3a4.45 4.45 0 1 0 8.9 0a4.45 4.45 0 1 0 -8.9 0M143.9 192.3a4.45 4.45 0 1 0 8.9 0a4.45 4.45 0 1 0 -8.9 0M152.6 192.3a4.45 4.45 0 1 0 8.9 0a4.45 4.45 0 1 0 -8.9 0M161.4 192.3a4.45 4.45 0 1 0 8.9 0a4.45 4.45 0 1 0 -8.9 0M170.1 192.3a4.45 4.45 0 1 0 8.9 0a4.45 4.45 0 1 0 -8.9 0M178.8 192.3a4.45 4.45 0 1 0 8.9 0a4.45 4.45 0 1 0 -8.9 0M187.5 192.3a4.45 4.45 0 1 0 8.9 0a4.45 4.45 0 1 0 -8.9 0M196.3 192.3a4.45 4.45 0 1 0 8.9 0a4.45 4.45 0 1 0 -8.9 0M205.0 192.3a4.45 4.45 0 1 0 8.9 0a4.45 4.45 0 1 0 -8.9 0M213.7 192.3a4.45 4.45 0 1 0 8.9 0a4.45 4.45 0 1 0 -8.9 0M222.4 192.3a4.45 4.45 0 1 0 8.9 0a4.45 4.45 0 1 0 -8.9 0M231.2 192.3a4.45 4.45 0 1 0 8.9 0a4.45 4.45 0 1 0 -8.9 0M239.9 192.3a4.45 4.45 0 1 0 8.9 0a4.45 4.45 0 1 0 -8.9 0M248.6 192.3a4.45 4.45 0 1 0 8.9 0a4.45 4.45 0 1 0 -8.9 0M257.3 192.3a4.45 4.45 0 1 0 8.9 0a4.45 4.45 0 1 0 -8.9 0M74.1 201.0a4.45 4.45 0 1 0 8.9 0a4.45 4.45 0 1 0 -8.9 0M82.8 201.0a4.45 4.45 0 1 0 8.9 0a4.45 4.45 0 1 0 -8.9 0M91.5 201.0a4.45 4.45 0 1 0 8.9 0a4.45 4.45 0 1 0 -8.9 0M100.3 201.0a4.45 4.45 0 1 0 8.9 0a4.45 4.45 0 1 0 -8.9 0M109.0 201.0a4.45 4.45 0 1 0 8.9 0a4.45 4.45 0 1 0 -8.9 0M117.7 201.0a4.45 4.45 0 1 0 8.9 0a4.45 4.45 0 1 0 -8.9 0M126.4 201.0a4.45 4.45 0 1 0 8.9 0a4.45 4.45 0 1 0 -8.9 0M135.2 201.0a4.45 4.45 0 1 0 8.9 0a4.45 4.45 0 1 0 -8.9 0M143.9 201.0a4.45 4.45 0 1 0 8.9 0a4.45 4.45 0 1 0 -8.9 0M152.6 201.0a4.45 4.45 0 1 0 8.9 0a4.45 4.45 0 1 0 -8.9 0M161.4 201.0a4.45 4.45 0 1 0 8.9 0a4.45 4.45 0 1 0 -8.9 0M170.1 201.0a4.45 4.45 0 1 0 8.9 0a4.45 4.45 0 1 0 -8.9 0M178.8 201.0a4.45 4.45 0 1 0 8.9 0a4.45 4.45 0 1 0 -8.9 0M187.5 201.0a4.45 4.45 0 1 0 8.9 0a4.45 4.45 0 1 0 -8.9 0M196.3 201.0a4.45 4.45 0 1 0 8.9 0a4.45 4.45 0 1 0 -8.9 0M205.0 201.0a4.45 4.45 0 1 0 8.9 0a4.45 4.45 0 1 0 -8.9 0M213.7 201.0a4.45 4.45 0 1 0 8.9 0a4.45 4.45 0 1 0 -8.9 0M222.4 201.0a4.45 4.45 0 1 0 8.9 0a4.45 4.45 0 1 0 -8.9 0M231.2 201.0a4.45 4.45 0 1 0 8.9 0a4.45 4.45 0 1 0 -8.9 0M239.9 201.0a4.45 4.45 0 1 0 8.9 0a4.45 4.45 0 1 0 -8.9 0M65.4 209.8a4.45 4.45 0 1 0 8.9 0a4.45 4.45 0 1 0 -8.9 0M74.1 209.8a4.45 4.45 0 1 0 8.9 0a4.45 4.45 0 1 0 -8.9 0M82.8 209.8a4.45 4.45 0 1 0 8.9 0a4.45 4.45 0 1 0 -8.9 0M91.5 209.8a4.45 4.45 0 1 0 8.9 0a4.45 4.45 0 1 0 -8.9 0M100.3 209.8a4.45 4.45 0 1 0 8.9 0a4.45 4.45 0 1 0 -8.9 0M109.0 209.8a4.45 4.45 0 1 0 8.9 0a4.45 4.45 0 1 0 -8.9 0M117.7 209.8a4.45 4.45 0 1 0 8.9 0a4.45 4.45 0 1 0 -8.9 0M126.4 209.8a4.45 4.45 0 1 0 8.9 0a4.45 4.45 0 1 0 -8.9 0M135.2 209.8a4.45 4.45 0 1 0 8.9 0a4.45 4.45 0 1 0 -8.9 0M143.9 209.8a4.45 4.45 0 1 0 8.9 0a4.45 4.45 0 1 0 -8.9 0M152.6 209.8a4.45 4.45 0 1 0 8.9 0a4.45 4.45 0 1 0 -8.9 0M161.4 209.8a4.45 4.45 0 1 0 8.9 0a4.45 4.45 0 1 0 -8.9 0M170.1 209.8a4.45 4.45 0 1 0 8.9 0a4.45 4.45 0 1 0 -8.9 0M178.8 209.8a4.45 4.45 0 1 0 8.9 0a4.45 4.45 0 1 0 -8.9 0M187.5 209.8a4.45 4.45 0 1 0 8.9 0a4.45 4.45 0 1 0 -8.9 0M196.3 209.8a4.45 4.45 0 1 0 8.9 0a4.45 4.45 0 1 0 -8.9 0M205.0 209.8a4.45 4.45 0 1 0 8.9 0a4.45 4.45 0 1 0 -8.9 0M213.7 209.8a4.45 4.45 0 1 0 8.9 0a4.45 4.45 0 1 0 -8.9 0M222.4 209.8a4.45 4.45 0 1 0 8.9 0a4.45 4.45 0 1 0 -8.9 0M231.2 209.8a4.45 4.45 0 1 0 8.9 0a4.45 4.45 0 1 0 -8.9 0M65.4 218.5a4.45 4.45 0 1 0 8.9 0a4.45 4.45 0 1 0 -8.9 0M74.1 218.5a4.45 4.45 0 1 0 8.9 0a4.45 4.45 0 1 0 -8.9 0M82.8 218.5a4.45 4.45 0 1 0 8.9 0a4.45 4.45 0 1 0 -8.9 0M109.0 218.5a4.45 4.45 0 1 0 8.9 0a4.45 4.45 0 1 0 -8.9 0M117.7 218.5a4.45 4.45 0 1 0 8.9 0a4.45 4.45 0 1 0 -8.9 0M126.4 218.5a4.45 4.45 0 1 0 8.9 0a4.45 4.45 0 1 0 -8.9 0M135.2 218.5a4.45 4.45 0 1 0 8.9 0a4.45 4.45 0 1 0 -8.9 0M143.9 218.5a4.45 4.45 0 1 0 8.9 0a4.45 4.45 0 1 0 -8.9 0M152.6 218.5a4.45 4.45 0 1 0 8.9 0a4.45 4.45 0 1 0 -8.9 0M161.4 218.5a4.45 4.45 0 1 0 8.9 0a4.45 4.45 0 1 0 -8.9 0M170.1 218.5a4.45 4.45 0 1 0 8.9 0a4.45 4.45 0 1 0 -8.9 0M178.8 218.5a4.45 4.45 0 1 0 8.9 0a4.45 4.45 0 1 0 -8.9 0M187.5 218.5a4.45 4.45 0 1 0 8.9 0a4.45 4.45 0 1 0 -8.9 0M196.3 218.5a4.45 4.45 0 1 0 8.9 0a4.45 4.45 0 1 0 -8.9 0M205.0 218.5a4.45 4.45 0 1 0 8.9 0a4.45 4.45 0 1 0 -8.9 0M213.7 218.5a4.45 4.45 0 1 0 8.9 0a4.45 4.45 0 1 0 -8.9 0M65.4 227.3a4.45 4.45 0 1 0 8.9 0a4.45 4.45 0 1 0 -8.9 0M74.1 227.3a4.45 4.45 0 1 0 8.9 0a4.45 4.45 0 1 0 -8.9 0M82.8 227.3a4.45 4.45 0 1 0 8.9 0a4.45 4.45 0 1 0 -8.9 0M117.7 227.3a4.45 4.45 0 1 0 8.9 0a4.45 4.45 0 1 0 -8.9 0M126.4 227.3a4.45 4.45 0 1 0 8.9 0a4.45 4.45 0 1 0 -8.9 0M135.2 227.3a4.45 4.45 0 1 0 8.9 0a4.45 4.45 0 1 0 -8.9 0M143.9 227.3a4.45 4.45 0 1 0 8.9 0a4.45 4.45 0 1 0 -8.9 0M152.6 227.3a4.45 4.45 0 1 0 8.9 0a4.45 4.45 0 1 0 -8.9 0M161.4 227.3a4.45 4.45 0 1 0 8.9 0a4.45 4.45 0 1 0 -8.9 0M170.1 227.3a4.45 4.45 0 1 0 8.9 0a4.45 4.45 0 1 0 -8.9 0M178.8 227.3a4.45 4.45 0 1 0 8.9 0a4.45 4.45 0 1 0 -8.9 0M187.5 227.3a4.45 4.45 0 1 0 8.9 0a4.45 4.45 0 1 0 -8.9 0M196.3 227.3a4.45 4.45 0 1 0 8.9 0a4.45 4.45 0 1 0 -8.9 0M205.0 227.3a4.45 4.45 0 1 0 8.9 0a4.45 4.45 0 1 0 -8.9 0M65.4 236.0a4.45 4.45 0 1 0 8.9 0a4.45 4.45 0 1 0 -8.9 0M74.1 236.0a4.45 4.45 0 1 0 8.9 0a4.45 4.45 0 1 0 -8.9 0M126.4 236.0a4.45 4.45 0 1 0 8.9 0a4.45 4.45 0 1 0 -8.9 0M135.2 236.0a4.45 4.45 0 1 0 8.9 0a4.45 4.45 0 1 0 -8.9 0M143.9 236.0a4.45 4.45 0 1 0 8.9 0a4.45 4.45 0 1 0 -8.9 0M152.6 236.0a4.45 4.45 0 1 0 8.9 0a4.45 4.45 0 1 0 -8.9 0M161.4 236.0a4.45 4.45 0 1 0 8.9 0a4.45 4.45 0 1 0 -8.9 0M170.1 236.0a4.45 4.45 0 1 0 8.9 0a4.45 4.45 0 1 0 -8.9 0M178.8 236.0a4.45 4.45 0 1 0 8.9 0a4.45 4.45 0 1 0 -8.9 0M187.5 236.0a4.45 4.45 0 1 0 8.9 0a4.45 4.45 0 1 0 -8.9 0M196.3 236.0a4.45 4.45 0 1 0 8.9 0a4.45 4.45 0 1 0 -8.9 0M205.0 236.0a4.45 4.45 0 1 0 8.9 0a4.45 4.45 0 1 0 -8.9 0M213.7 236.0a4.45 4.45 0 1 0 8.9 0a4.45 4.45 0 1 0 -8.9 0M65.4 244.7a4.45 4.45 0 1 0 8.9 0a4.45 4.45 0 1 0 -8.9 0M117.7 244.7a4.45 4.45 0 1 0 8.9 0a4.45 4.45 0 1 0 -8.9 0M126.4 244.7a4.45 4.45 0 1 0 8.9 0a4.45 4.45 0 1 0 -8.9 0M135.2 244.7a4.45 4.45 0 1 0 8.9 0a4.45 4.45 0 1 0 -8.9 0M143.9 244.7a4.45 4.45 0 1 0 8.9 0a4.45 4.45 0 1 0 -8.9 0M152.6 244.7a4.45 4.45 0 1 0 8.9 0a4.45 4.45 0 1 0 -8.9 0M161.4 244.7a4.45 4.45 0 1 0 8.9 0a4.45 4.45 0 1 0 -8.9 0M170.1 244.7a4.45 4.45 0 1 0 8.9 0a4.45 4.45 0 1 0 -8.9 0M178.8 244.7a4.45 4.45 0 1 0 8.9 0a4.45 4.45 0 1 0 -8.9 0M187.5 244.7a4.45 4.45 0 1 0 8.9 0a4.45 4.45 0 1 0 -8.9 0M196.3 244.7a4.45 4.45 0 1 0 8.9 0a4.45 4.45 0 1 0 -8.9 0M56.6 253.5a4.45 4.45 0 1 0 8.9 0a4.45 4.45 0 1 0 -8.9 0M135.2 253.5a4.45 4.45 0 1 0 8.9 0a4.45 4.45 0 1 0 -8.9 0M143.9 253.5a4.45 4.45 0 1 0 8.9 0a4.45 4.45 0 1 0 -8.9 0M152.6 253.5a4.45 4.45 0 1 0 8.9 0a4.45 4.45 0 1 0 -8.9 0M161.4 253.5a4.45 4.45 0 1 0 8.9 0a4.45 4.45 0 1 0 -8.9 0M170.1 253.5a4.45 4.45 0 1 0 8.9 0a4.45 4.45 0 1 0 -8.9 0M178.8 253.5a4.45 4.45 0 1 0 8.9 0a4.45 4.45 0 1 0 -8.9 0M187.5 253.5a4.45 4.45 0 1 0 8.9 0a4.45 4.45 0 1 0 -8.9 0M135.2 262.2a4.45 4.45 0 1 0 8.9 0a4.45 4.45 0 1 0 -8.9 0M152.6 262.2a4.45 4.45 0 1 0 8.9 0a4.45 4.45 0 1 0 -8.9 0M161.4 262.2a4.45 4.45 0 1 0 8.9 0a4.45 4.45 0 1 0 -8.9 0M170.1 262.2a4.45 4.45 0 1 0 8.9 0a4.45 4.45 0 1 0 -8.9 0M178.8 262.2a4.45 4.45 0 1 0 8.9 0a4.45 4.45 0 1 0 -8.9 0M143.9 271.0a4.45 4.45 0 1 0 8.9 0a4.45 4.45 0 1 0 -8.9 0M152.6 271.0a4.45 4.45 0 1 0 8.9 0a4.45 4.45 0 1 0 -8.9 0M161.4 271.0a4.45 4.45 0 1 0 8.9 0a4.45 4.45 0 1 0 -8.9 0M170.1 271.0a4.45 4.45 0 1 0 8.9 0a4.45 4.45 0 1 0 -8.9 0M178.8 271.0a4.45 4.45 0 1 0 8.9 0a4.45 4.45 0 1 0 -8.9 0M126.4 279.7a4.45 4.45 0 1 0 8.9 0a4.45 4.45 0 1 0 -8.9 0M152.6 279.7a4.45 4.45 0 1 0 8.9 0a4.45 4.45 0 1 0 -8.9 0M161.4 279.7a4.45 4.45 0 1 0 8.9 0a4.45 4.45 0 1 0 -8.9 0M170.1 279.7a4.45 4.45 0 1 0 8.9 0a4.45 4.45 0 1 0 -8.9 0M178.8 279.7a4.45 4.45 0 1 0 8.9 0a4.45 4.45 0 1 0 -8.9 0M370.8 279.7a4.45 4.45 0 1 0 8.9 0a4.45 4.45 0 1 0 -8.9 0M126.4 288.5a4.45 4.45 0 1 0 8.9 0a4.45 4.45 0 1 0 -8.9 0M135.2 288.5a4.45 4.45 0 1 0 8.9 0a4.45 4.45 0 1 0 -8.9 0M143.9 288.5a4.45 4.45 0 1 0 8.9 0a4.45 4.45 0 1 0 -8.9 0M161.4 288.5a4.45 4.45 0 1 0 8.9 0a4.45 4.45 0 1 0 -8.9 0M170.1 288.5a4.45 4.45 0 1 0 8.9 0a4.45 4.45 0 1 0 -8.9 0M178.8 288.5a4.45 4.45 0 1 0 8.9 0a4.45 4.45 0 1 0 -8.9 0M126.4 297.2a4.45 4.45 0 1 0 8.9 0a4.45 4.45 0 1 0 -8.9 0M135.2 297.2a4.45 4.45 0 1 0 8.9 0a4.45 4.45 0 1 0 -8.9 0M143.9 297.2a4.45 4.45 0 1 0 8.9 0a4.45 4.45 0 1 0 -8.9 0M161.4 297.2a4.45 4.45 0 1 0 8.9 0a4.45 4.45 0 1 0 -8.9 0M170.1 297.2a4.45 4.45 0 1 0 8.9 0a4.45 4.45 0 1 0 -8.9 0M178.8 297.2a4.45 4.45 0 1 0 8.9 0a4.45 4.45 0 1 0 -8.9 0M353.3 297.2a4.45 4.45 0 1 0 8.9 0a4.45 4.45 0 1 0 -8.9 0M362.1 297.2a4.45 4.45 0 1 0 8.9 0a4.45 4.45 0 1 0 -8.9 0M423.2 297.2a4.45 4.45 0 1 0 8.9 0a4.45 4.45 0 1 0 -8.9 0M117.7 305.9a4.45 4.45 0 1 0 8.9 0a4.45 4.45 0 1 0 -8.9 0M126.4 305.9a4.45 4.45 0 1 0 8.9 0a4.45 4.45 0 1 0 -8.9 0M135.2 305.9a4.45 4.45 0 1 0 8.9 0a4.45 4.45 0 1 0 -8.9 0M143.9 305.9a4.45 4.45 0 1 0 8.9 0a4.45 4.45 0 1 0 -8.9 0M152.6 305.9a4.45 4.45 0 1 0 8.9 0a4.45 4.45 0 1 0 -8.9 0M161.4 305.9a4.45 4.45 0 1 0 8.9 0a4.45 4.45 0 1 0 -8.9 0M170.1 305.9a4.45 4.45 0 1 0 8.9 0a4.45 4.45 0 1 0 -8.9 0M178.8 305.9a4.45 4.45 0 1 0 8.9 0a4.45 4.45 0 1 0 -8.9 0M379.5 305.9a4.45 4.45 0 1 0 8.9 0a4.45 4.45 0 1 0 -8.9 0M440.6 305.9a4.45 4.45 0 1 0 8.9 0a4.45 4.45 0 1 0 -8.9 0M126.4 314.7a4.45 4.45 0 1 0 8.9 0a4.45 4.45 0 1 0 -8.9 0M135.2 314.7a4.45 4.45 0 1 0 8.9 0a4.45 4.45 0 1 0 -8.9 0M143.9 314.7a4.45 4.45 0 1 0 8.9 0a4.45 4.45 0 1 0 -8.9 0M152.6 314.7a4.45 4.45 0 1 0 8.9 0a4.45 4.45 0 1 0 -8.9 0M161.4 314.7a4.45 4.45 0 1 0 8.9 0a4.45 4.45 0 1 0 -8.9 0M170.1 314.7a4.45 4.45 0 1 0 8.9 0a4.45 4.45 0 1 0 -8.9 0M178.8 314.7a4.45 4.45 0 1 0 8.9 0a4.45 4.45 0 1 0 -8.9 0M362.1 314.7a4.45 4.45 0 1 0 8.9 0a4.45 4.45 0 1 0 -8.9 0M370.8 314.7a4.45 4.45 0 1 0 8.9 0a4.45 4.45 0 1 0 -8.9 0M379.5 314.7a4.45 4.45 0 1 0 8.9 0a4.45 4.45 0 1 0 -8.9 0M397.0 314.7a4.45 4.45 0 1 0 8.9 0a4.45 4.45 0 1 0 -8.9 0M414.4 314.7a4.45 4.45 0 1 0 8.9 0a4.45 4.45 0 1 0 -8.9 0M117.7 323.4a4.45 4.45 0 1 0 8.9 0a4.45 4.45 0 1 0 -8.9 0M126.4 323.4a4.45 4.45 0 1 0 8.9 0a4.45 4.45 0 1 0 -8.9 0M135.2 323.4a4.45 4.45 0 1 0 8.9 0a4.45 4.45 0 1 0 -8.9 0M143.9 323.4a4.45 4.45 0 1 0 8.9 0a4.45 4.45 0 1 0 -8.9 0M152.6 323.4a4.45 4.45 0 1 0 8.9 0a4.45 4.45 0 1 0 -8.9 0M161.4 323.4a4.45 4.45 0 1 0 8.9 0a4.45 4.45 0 1 0 -8.9 0M170.1 323.4a4.45 4.45 0 1 0 8.9 0a4.45 4.45 0 1 0 -8.9 0M362.1 323.4a4.45 4.45 0 1 0 8.9 0a4.45 4.45 0 1 0 -8.9 0M370.8 323.4a4.45 4.45 0 1 0 8.9 0a4.45 4.45 0 1 0 -8.9 0M379.5 323.4a4.45 4.45 0 1 0 8.9 0a4.45 4.45 0 1 0 -8.9 0M388.2 323.4a4.45 4.45 0 1 0 8.9 0a4.45 4.45 0 1 0 -8.9 0M397.0 323.4a4.45 4.45 0 1 0 8.9 0a4.45 4.45 0 1 0 -8.9 0M414.4 323.4a4.45 4.45 0 1 0 8.9 0a4.45 4.45 0 1 0 -8.9 0M440.6 323.4a4.45 4.45 0 1 0 8.9 0a4.45 4.45 0 1 0 -8.9 0M109.0 332.2a4.45 4.45 0 1 0 8.9 0a4.45 4.45 0 1 0 -8.9 0M117.7 332.2a4.45 4.45 0 1 0 8.9 0a4.45 4.45 0 1 0 -8.9 0M126.4 332.2a4.45 4.45 0 1 0 8.9 0a4.45 4.45 0 1 0 -8.9 0M135.2 332.2a4.45 4.45 0 1 0 8.9 0a4.45 4.45 0 1 0 -8.9 0M143.9 332.2a4.45 4.45 0 1 0 8.9 0a4.45 4.45 0 1 0 -8.9 0M152.6 332.2a4.45 4.45 0 1 0 8.9 0a4.45 4.45 0 1 0 -8.9 0M161.4 332.2a4.45 4.45 0 1 0 8.9 0a4.45 4.45 0 1 0 -8.9 0M170.1 332.2a4.45 4.45 0 1 0 8.9 0a4.45 4.45 0 1 0 -8.9 0M239.9 332.2a4.45 4.45 0 1 0 8.9 0a4.45 4.45 0 1 0 -8.9 0M370.8 332.2a4.45 4.45 0 1 0 8.9 0a4.45 4.45 0 1 0 -8.9 0M379.5 332.2a4.45 4.45 0 1 0 8.9 0a4.45 4.45 0 1 0 -8.9 0M397.0 332.2a4.45 4.45 0 1 0 8.9 0a4.45 4.45 0 1 0 -8.9 0M405.7 332.2a4.45 4.45 0 1 0 8.9 0a4.45 4.45 0 1 0 -8.9 0M414.4 332.2a4.45 4.45 0 1 0 8.9 0a4.45 4.45 0 1 0 -8.9 0M423.2 332.2a4.45 4.45 0 1 0 8.9 0a4.45 4.45 0 1 0 -8.9 0M100.3 340.9a4.45 4.45 0 1 0 8.9 0a4.45 4.45 0 1 0 -8.9 0M109.0 340.9a4.45 4.45 0 1 0 8.9 0a4.45 4.45 0 1 0 -8.9 0M117.7 340.9a4.45 4.45 0 1 0 8.9 0a4.45 4.45 0 1 0 -8.9 0M126.4 340.9a4.45 4.45 0 1 0 8.9 0a4.45 4.45 0 1 0 -8.9 0M135.2 340.9a4.45 4.45 0 1 0 8.9 0a4.45 4.45 0 1 0 -8.9 0M143.9 340.9a4.45 4.45 0 1 0 8.9 0a4.45 4.45 0 1 0 -8.9 0M152.6 340.9a4.45 4.45 0 1 0 8.9 0a4.45 4.45 0 1 0 -8.9 0M161.4 340.9a4.45 4.45 0 1 0 8.9 0a4.45 4.45 0 1 0 -8.9 0M257.3 340.9a4.45 4.45 0 1 0 8.9 0a4.45 4.45 0 1 0 -8.9 0M379.5 340.9a4.45 4.45 0 1 0 8.9 0a4.45 4.45 0 1 0 -8.9 0M388.2 340.9a4.45 4.45 0 1 0 8.9 0a4.45 4.45 0 1 0 -8.9 0M397.0 340.9a4.45 4.45 0 1 0 8.9 0a4.45 4.45 0 1 0 -8.9 0M423.2 340.9a4.45 4.45 0 1 0 8.9 0a4.45 4.45 0 1 0 -8.9 0M440.6 340.9a4.45 4.45 0 1 0 8.9 0a4.45 4.45 0 1 0 -8.9 0M100.3 349.6a4.45 4.45 0 1 0 8.9 0a4.45 4.45 0 1 0 -8.9 0M109.0 349.6a4.45 4.45 0 1 0 8.9 0a4.45 4.45 0 1 0 -8.9 0M117.7 349.6a4.45 4.45 0 1 0 8.9 0a4.45 4.45 0 1 0 -8.9 0M126.4 349.6a4.45 4.45 0 1 0 8.9 0a4.45 4.45 0 1 0 -8.9 0M135.2 349.6a4.45 4.45 0 1 0 8.9 0a4.45 4.45 0 1 0 -8.9 0M143.9 349.6a4.45 4.45 0 1 0 8.9 0a4.45 4.45 0 1 0 -8.9 0M152.6 349.6a4.45 4.45 0 1 0 8.9 0a4.45 4.45 0 1 0 -8.9 0M161.4 349.6a4.45 4.45 0 1 0 8.9 0a4.45 4.45 0 1 0 -8.9 0M239.9 349.6a4.45 4.45 0 1 0 8.9 0a4.45 4.45 0 1 0 -8.9 0M248.6 349.6a4.45 4.45 0 1 0 8.9 0a4.45 4.45 0 1 0 -8.9 0M257.3 349.6a4.45 4.45 0 1 0 8.9 0a4.45 4.45 0 1 0 -8.9 0M266.1 349.6a4.45 4.45 0 1 0 8.9 0a4.45 4.45 0 1 0 -8.9 0M388.2 349.6a4.45 4.45 0 1 0 8.9 0a4.45 4.45 0 1 0 -8.9 0M397.0 349.6a4.45 4.45 0 1 0 8.9 0a4.45 4.45 0 1 0 -8.9 0M405.7 349.6a4.45 4.45 0 1 0 8.9 0a4.45 4.45 0 1 0 -8.9 0M431.9 349.6a4.45 4.45 0 1 0 8.9 0a4.45 4.45 0 1 0 -8.9 0M100.3 358.4a4.45 4.45 0 1 0 8.9 0a4.45 4.45 0 1 0 -8.9 0M109.0 358.4a4.45 4.45 0 1 0 8.9 0a4.45 4.45 0 1 0 -8.9 0M117.7 358.4a4.45 4.45 0 1 0 8.9 0a4.45 4.45 0 1 0 -8.9 0M126.4 358.4a4.45 4.45 0 1 0 8.9 0a4.45 4.45 0 1 0 -8.9 0M135.2 358.4a4.45 4.45 0 1 0 8.9 0a4.45 4.45 0 1 0 -8.9 0M143.9 358.4a4.45 4.45 0 1 0 8.9 0a4.45 4.45 0 1 0 -8.9 0M152.6 358.4a4.45 4.45 0 1 0 8.9 0a4.45 4.45 0 1 0 -8.9 0M161.4 358.4a4.45 4.45 0 1 0 8.9 0a4.45 4.45 0 1 0 -8.9 0M239.9 358.4a4.45 4.45 0 1 0 8.9 0a4.45 4.45 0 1 0 -8.9 0M248.6 358.4a4.45 4.45 0 1 0 8.9 0a4.45 4.45 0 1 0 -8.9 0M257.3 358.4a4.45 4.45 0 1 0 8.9 0a4.45 4.45 0 1 0 -8.9 0M266.1 358.4a4.45 4.45 0 1 0 8.9 0a4.45 4.45 0 1 0 -8.9 0M274.8 358.4a4.45 4.45 0 1 0 8.9 0a4.45 4.45 0 1 0 -8.9 0M283.5 358.4a4.45 4.45 0 1 0 8.9 0a4.45 4.45 0 1 0 -8.9 0M405.7 358.4a4.45 4.45 0 1 0 8.9 0a4.45 4.45 0 1 0 -8.9 0M414.4 358.4a4.45 4.45 0 1 0 8.9 0a4.45 4.45 0 1 0 -8.9 0M423.2 358.4a4.45 4.45 0 1 0 8.9 0a4.45 4.45 0 1 0 -8.9 0M91.5 367.1a4.45 4.45 0 1 0 8.9 0a4.45 4.45 0 1 0 -8.9 0M100.3 367.1a4.45 4.45 0 1 0 8.9 0a4.45 4.45 0 1 0 -8.9 0M109.0 367.1a4.45 4.45 0 1 0 8.9 0a4.45 4.45 0 1 0 -8.9 0M117.7 367.1a4.45 4.45 0 1 0 8.9 0a4.45 4.45 0 1 0 -8.9 0M126.4 367.1a4.45 4.45 0 1 0 8.9 0a4.45 4.45 0 1 0 -8.9 0M135.2 367.1a4.45 4.45 0 1 0 8.9 0a4.45 4.45 0 1 0 -8.9 0M143.9 367.1a4.45 4.45 0 1 0 8.9 0a4.45 4.45 0 1 0 -8.9 0M152.6 367.1a4.45 4.45 0 1 0 8.9 0a4.45 4.45 0 1 0 -8.9 0M161.4 367.1a4.45 4.45 0 1 0 8.9 0a4.45 4.45 0 1 0 -8.9 0M248.6 367.1a4.45 4.45 0 1 0 8.9 0a4.45 4.45 0 1 0 -8.9 0M257.3 367.1a4.45 4.45 0 1 0 8.9 0a4.45 4.45 0 1 0 -8.9 0M266.1 367.1a4.45 4.45 0 1 0 8.9 0a4.45 4.45 0 1 0 -8.9 0M274.8 367.1a4.45 4.45 0 1 0 8.9 0a4.45 4.45 0 1 0 -8.9 0M370.8 367.1a4.45 4.45 0 1 0 8.9 0a4.45 4.45 0 1 0 -8.9 0M414.4 367.1a4.45 4.45 0 1 0 8.9 0a4.45 4.45 0 1 0 -8.9 0M423.2 367.1a4.45 4.45 0 1 0 8.9 0a4.45 4.45 0 1 0 -8.9 0M91.5 375.9a4.45 4.45 0 1 0 8.9 0a4.45 4.45 0 1 0 -8.9 0M100.3 375.9a4.45 4.45 0 1 0 8.9 0a4.45 4.45 0 1 0 -8.9 0M109.0 375.9a4.45 4.45 0 1 0 8.9 0a4.45 4.45 0 1 0 -8.9 0M117.7 375.9a4.45 4.45 0 1 0 8.9 0a4.45 4.45 0 1 0 -8.9 0M126.4 375.9a4.45 4.45 0 1 0 8.9 0a4.45 4.45 0 1 0 -8.9 0M135.2 375.9a4.45 4.45 0 1 0 8.9 0a4.45 4.45 0 1 0 -8.9 0M143.9 375.9a4.45 4.45 0 1 0 8.9 0a4.45 4.45 0 1 0 -8.9 0M152.6 375.9a4.45 4.45 0 1 0 8.9 0a4.45 4.45 0 1 0 -8.9 0M161.4 375.9a4.45 4.45 0 1 0 8.9 0a4.45 4.45 0 1 0 -8.9 0M266.1 375.9a4.45 4.45 0 1 0 8.9 0a4.45 4.45 0 1 0 -8.9 0M274.8 375.9a4.45 4.45 0 1 0 8.9 0a4.45 4.45 0 1 0 -8.9 0M362.1 375.9a4.45 4.45 0 1 0 8.9 0a4.45 4.45 0 1 0 -8.9 0M370.8 375.9a4.45 4.45 0 1 0 8.9 0a4.45 4.45 0 1 0 -8.9 0M388.2 375.9a4.45 4.45 0 1 0 8.9 0a4.45 4.45 0 1 0 -8.9 0M109.0 384.6a4.45 4.45 0 1 0 8.9 0a4.45 4.45 0 1 0 -8.9 0M117.7 384.6a4.45 4.45 0 1 0 8.9 0a4.45 4.45 0 1 0 -8.9 0M126.4 384.6a4.45 4.45 0 1 0 8.9 0a4.45 4.45 0 1 0 -8.9 0M135.2 384.6a4.45 4.45 0 1 0 8.9 0a4.45 4.45 0 1 0 -8.9 0M143.9 384.6a4.45 4.45 0 1 0 8.9 0a4.45 4.45 0 1 0 -8.9 0M152.6 384.6a4.45 4.45 0 1 0 8.9 0a4.45 4.45 0 1 0 -8.9 0M161.4 384.6a4.45 4.45 0 1 0 8.9 0a4.45 4.45 0 1 0 -8.9 0M309.7 384.6a4.45 4.45 0 1 0 8.9 0a4.45 4.45 0 1 0 -8.9 0M327.2 384.6a4.45 4.45 0 1 0 8.9 0a4.45 4.45 0 1 0 -8.9 0M370.8 384.6a4.45 4.45 0 1 0 8.9 0a4.45 4.45 0 1 0 -8.9 0M388.2 384.6a4.45 4.45 0 1 0 8.9 0a4.45 4.45 0 1 0 -8.9 0M397.0 384.6a4.45 4.45 0 1 0 8.9 0a4.45 4.45 0 1 0 -8.9 0M405.7 384.6a4.45 4.45 0 1 0 8.9 0a4.45 4.45 0 1 0 -8.9 0M414.4 384.6a4.45 4.45 0 1 0 8.9 0a4.45 4.45 0 1 0 -8.9 0M423.2 384.6a4.45 4.45 0 1 0 8.9 0a4.45 4.45 0 1 0 -8.9 0M82.8 393.3a4.45 4.45 0 1 0 8.9 0a4.45 4.45 0 1 0 -8.9 0M109.0 393.3a4.45 4.45 0 1 0 8.9 0a4.45 4.45 0 1 0 -8.9 0M117.7 393.3a4.45 4.45 0 1 0 8.9 0a4.45 4.45 0 1 0 -8.9 0M126.4 393.3a4.45 4.45 0 1 0 8.9 0a4.45 4.45 0 1 0 -8.9 0M135.2 393.3a4.45 4.45 0 1 0 8.9 0a4.45 4.45 0 1 0 -8.9 0M143.9 393.3a4.45 4.45 0 1 0 8.9 0a4.45 4.45 0 1 0 -8.9 0M152.6 393.3a4.45 4.45 0 1 0 8.9 0a4.45 4.45 0 1 0 -8.9 0M161.4 393.3a4.45 4.45 0 1 0 8.9 0a4.45 4.45 0 1 0 -8.9 0M301.0 393.3a4.45 4.45 0 1 0 8.9 0a4.45 4.45 0 1 0 -8.9 0M309.7 393.3a4.45 4.45 0 1 0 8.9 0a4.45 4.45 0 1 0 -8.9 0M318.4 393.3a4.45 4.45 0 1 0 8.9 0a4.45 4.45 0 1 0 -8.9 0M370.8 393.3a4.45 4.45 0 1 0 8.9 0a4.45 4.45 0 1 0 -8.9 0M379.5 393.3a4.45 4.45 0 1 0 8.9 0a4.45 4.45 0 1 0 -8.9 0M405.7 393.3a4.45 4.45 0 1 0 8.9 0a4.45 4.45 0 1 0 -8.9 0M414.4 393.3a4.45 4.45 0 1 0 8.9 0a4.45 4.45 0 1 0 -8.9 0M74.1 402.1a4.45 4.45 0 1 0 8.9 0a4.45 4.45 0 1 0 -8.9 0M82.8 402.1a4.45 4.45 0 1 0 8.9 0a4.45 4.45 0 1 0 -8.9 0M91.5 402.1a4.45 4.45 0 1 0 8.9 0a4.45 4.45 0 1 0 -8.9 0M100.3 402.1a4.45 4.45 0 1 0 8.9 0a4.45 4.45 0 1 0 -8.9 0M109.0 402.1a4.45 4.45 0 1 0 8.9 0a4.45 4.45 0 1 0 -8.9 0M117.7 402.1a4.45 4.45 0 1 0 8.9 0a4.45 4.45 0 1 0 -8.9 0M126.4 402.1a4.45 4.45 0 1 0 8.9 0a4.45 4.45 0 1 0 -8.9 0M135.2 402.1a4.45 4.45 0 1 0 8.9 0a4.45 4.45 0 1 0 -8.9 0M143.9 402.1a4.45 4.45 0 1 0 8.9 0a4.45 4.45 0 1 0 -8.9 0M152.6 402.1a4.45 4.45 0 1 0 8.9 0a4.45 4.45 0 1 0 -8.9 0M161.4 402.1a4.45 4.45 0 1 0 8.9 0a4.45 4.45 0 1 0 -8.9 0M283.5 402.1a4.45 4.45 0 1 0 8.9 0a4.45 4.45 0 1 0 -8.9 0M301.0 402.1a4.45 4.45 0 1 0 8.9 0a4.45 4.45 0 1 0 -8.9 0M318.4 402.1a4.45 4.45 0 1 0 8.9 0a4.45 4.45 0 1 0 -8.9 0M327.2 402.1a4.45 4.45 0 1 0 8.9 0a4.45 4.45 0 1 0 -8.9 0M405.7 402.1a4.45 4.45 0 1 0 8.9 0a4.45 4.45 0 1 0 -8.9 0M414.4 402.1a4.45 4.45 0 1 0 8.9 0a4.45 4.45 0 1 0 -8.9 0M82.8 410.8a4.45 4.45 0 1 0 8.9 0a4.45 4.45 0 1 0 -8.9 0M91.5 410.8a4.45 4.45 0 1 0 8.9 0a4.45 4.45 0 1 0 -8.9 0M100.3 410.8a4.45 4.45 0 1 0 8.9 0a4.45 4.45 0 1 0 -8.9 0M109.0 410.8a4.45 4.45 0 1 0 8.9 0a4.45 4.45 0 1 0 -8.9 0M117.7 410.8a4.45 4.45 0 1 0 8.9 0a4.45 4.45 0 1 0 -8.9 0M126.4 410.8a4.45 4.45 0 1 0 8.9 0a4.45 4.45 0 1 0 -8.9 0M135.2 410.8a4.45 4.45 0 1 0 8.9 0a4.45 4.45 0 1 0 -8.9 0M143.9 410.8a4.45 4.45 0 1 0 8.9 0a4.45 4.45 0 1 0 -8.9 0M152.6 410.8a4.45 4.45 0 1 0 8.9 0a4.45 4.45 0 1 0 -8.9 0M161.4 410.8a4.45 4.45 0 1 0 8.9 0a4.45 4.45 0 1 0 -8.9 0M239.9 410.8a4.45 4.45 0 1 0 8.9 0a4.45 4.45 0 1 0 -8.9 0M301.0 410.8a4.45 4.45 0 1 0 8.9 0a4.45 4.45 0 1 0 -8.9 0M309.7 410.8a4.45 4.45 0 1 0 8.9 0a4.45 4.45 0 1 0 -8.9 0M318.4 410.8a4.45 4.45 0 1 0 8.9 0a4.45 4.45 0 1 0 -8.9 0M327.2 410.8a4.45 4.45 0 1 0 8.9 0a4.45 4.45 0 1 0 -8.9 0M388.2 410.8a4.45 4.45 0 1 0 8.9 0a4.45 4.45 0 1 0 -8.9 0M397.0 410.8a4.45 4.45 0 1 0 8.9 0a4.45 4.45 0 1 0 -8.9 0M405.7 410.8a4.45 4.45 0 1 0 8.9 0a4.45 4.45 0 1 0 -8.9 0M91.5 419.6a4.45 4.45 0 1 0 8.9 0a4.45 4.45 0 1 0 -8.9 0M100.3 419.6a4.45 4.45 0 1 0 8.9 0a4.45 4.45 0 1 0 -8.9 0M109.0 419.6a4.45 4.45 0 1 0 8.9 0a4.45 4.45 0 1 0 -8.9 0M117.7 419.6a4.45 4.45 0 1 0 8.9 0a4.45 4.45 0 1 0 -8.9 0M126.4 419.6a4.45 4.45 0 1 0 8.9 0a4.45 4.45 0 1 0 -8.9 0M135.2 419.6a4.45 4.45 0 1 0 8.9 0a4.45 4.45 0 1 0 -8.9 0M143.9 419.6a4.45 4.45 0 1 0 8.9 0a4.45 4.45 0 1 0 -8.9 0M152.6 419.6a4.45 4.45 0 1 0 8.9 0a4.45 4.45 0 1 0 -8.9 0M161.4 419.6a4.45 4.45 0 1 0 8.9 0a4.45 4.45 0 1 0 -8.9 0M309.7 419.6a4.45 4.45 0 1 0 8.9 0a4.45 4.45 0 1 0 -8.9 0M327.2 419.6a4.45 4.45 0 1 0 8.9 0a4.45 4.45 0 1 0 -8.9 0M370.8 419.6a4.45 4.45 0 1 0 8.9 0a4.45 4.45 0 1 0 -8.9 0M388.2 419.6a4.45 4.45 0 1 0 8.9 0a4.45 4.45 0 1 0 -8.9 0M397.0 419.6a4.45 4.45 0 1 0 8.9 0a4.45 4.45 0 1 0 -8.9 0M405.7 419.6a4.45 4.45 0 1 0 8.9 0a4.45 4.45 0 1 0 -8.9 0M100.3 428.3a4.45 4.45 0 1 0 8.9 0a4.45 4.45 0 1 0 -8.9 0M109.0 428.3a4.45 4.45 0 1 0 8.9 0a4.45 4.45 0 1 0 -8.9 0M117.7 428.3a4.45 4.45 0 1 0 8.9 0a4.45 4.45 0 1 0 -8.9 0M126.4 428.3a4.45 4.45 0 1 0 8.9 0a4.45 4.45 0 1 0 -8.9 0M135.2 428.3a4.45 4.45 0 1 0 8.9 0a4.45 4.45 0 1 0 -8.9 0M152.6 428.3a4.45 4.45 0 1 0 8.9 0a4.45 4.45 0 1 0 -8.9 0M161.4 428.3a4.45 4.45 0 1 0 8.9 0a4.45 4.45 0 1 0 -8.9 0M370.8 428.3a4.45 4.45 0 1 0 8.9 0a4.45 4.45 0 1 0 -8.9 0M379.5 428.3a4.45 4.45 0 1 0 8.9 0a4.45 4.45 0 1 0 -8.9 0M388.2 428.3a4.45 4.45 0 1 0 8.9 0a4.45 4.45 0 1 0 -8.9 0M397.0 428.3a4.45 4.45 0 1 0 8.9 0a4.45 4.45 0 1 0 -8.9 0M91.5 437.0a4.45 4.45 0 1 0 8.9 0a4.45 4.45 0 1 0 -8.9 0M100.3 437.0a4.45 4.45 0 1 0 8.9 0a4.45 4.45 0 1 0 -8.9 0M109.0 437.0a4.45 4.45 0 1 0 8.9 0a4.45 4.45 0 1 0 -8.9 0M117.7 437.0a4.45 4.45 0 1 0 8.9 0a4.45 4.45 0 1 0 -8.9 0M126.4 437.0a4.45 4.45 0 1 0 8.9 0a4.45 4.45 0 1 0 -8.9 0M135.2 437.0a4.45 4.45 0 1 0 8.9 0a4.45 4.45 0 1 0 -8.9 0M143.9 437.0a4.45 4.45 0 1 0 8.9 0a4.45 4.45 0 1 0 -8.9 0M152.6 437.0a4.45 4.45 0 1 0 8.9 0a4.45 4.45 0 1 0 -8.9 0M161.4 437.0a4.45 4.45 0 1 0 8.9 0a4.45 4.45 0 1 0 -8.9 0M231.2 437.0a4.45 4.45 0 1 0 8.9 0a4.45 4.45 0 1 0 -8.9 0M239.9 437.0a4.45 4.45 0 1 0 8.9 0a4.45 4.45 0 1 0 -8.9 0M309.7 437.0a4.45 4.45 0 1 0 8.9 0a4.45 4.45 0 1 0 -8.9 0M370.8 437.0a4.45 4.45 0 1 0 8.9 0a4.45 4.45 0 1 0 -8.9 0M379.5 437.0a4.45 4.45 0 1 0 8.9 0a4.45 4.45 0 1 0 -8.9 0M388.2 437.0a4.45 4.45 0 1 0 8.9 0a4.45 4.45 0 1 0 -8.9 0M397.0 437.0a4.45 4.45 0 1 0 8.9 0a4.45 4.45 0 1 0 -8.9 0M100.3 445.8a4.45 4.45 0 1 0 8.9 0a4.45 4.45 0 1 0 -8.9 0M109.0 445.8a4.45 4.45 0 1 0 8.9 0a4.45 4.45 0 1 0 -8.9 0M117.7 445.8a4.45 4.45 0 1 0 8.9 0a4.45 4.45 0 1 0 -8.9 0M126.4 445.8a4.45 4.45 0 1 0 8.9 0a4.45 4.45 0 1 0 -8.9 0M135.2 445.8a4.45 4.45 0 1 0 8.9 0a4.45 4.45 0 1 0 -8.9 0M143.9 445.8a4.45 4.45 0 1 0 8.9 0a4.45 4.45 0 1 0 -8.9 0M152.6 445.8a4.45 4.45 0 1 0 8.9 0a4.45 4.45 0 1 0 -8.9 0M170.1 445.8a4.45 4.45 0 1 0 8.9 0a4.45 4.45 0 1 0 -8.9 0M213.7 445.8a4.45 4.45 0 1 0 8.9 0a4.45 4.45 0 1 0 -8.9 0M222.4 445.8a4.45 4.45 0 1 0 8.9 0a4.45 4.45 0 1 0 -8.9 0M231.2 445.8a4.45 4.45 0 1 0 8.9 0a4.45 4.45 0 1 0 -8.9 0M301.0 445.8a4.45 4.45 0 1 0 8.9 0a4.45 4.45 0 1 0 -8.9 0M362.1 445.8a4.45 4.45 0 1 0 8.9 0a4.45 4.45 0 1 0 -8.9 0M370.8 445.8a4.45 4.45 0 1 0 8.9 0a4.45 4.45 0 1 0 -8.9 0M379.5 445.8a4.45 4.45 0 1 0 8.9 0a4.45 4.45 0 1 0 -8.9 0M388.2 445.8a4.45 4.45 0 1 0 8.9 0a4.45 4.45 0 1 0 -8.9 0M397.0 445.8a4.45 4.45 0 1 0 8.9 0a4.45 4.45 0 1 0 -8.9 0M449.3 445.8a4.45 4.45 0 1 0 8.9 0a4.45 4.45 0 1 0 -8.9 0M458.1 445.8a4.45 4.45 0 1 0 8.9 0a4.45 4.45 0 1 0 -8.9 0M-4.5 454.5a4.45 4.45 0 1 0 8.9 0a4.45 4.45 0 1 0 -8.9 0M4.3 454.5a4.45 4.45 0 1 0 8.9 0a4.45 4.45 0 1 0 -8.9 0M82.8 454.5a4.45 4.45 0 1 0 8.9 0a4.45 4.45 0 1 0 -8.9 0M91.5 454.5a4.45 4.45 0 1 0 8.9 0a4.45 4.45 0 1 0 -8.9 0M100.3 454.5a4.45 4.45 0 1 0 8.9 0a4.45 4.45 0 1 0 -8.9 0M109.0 454.5a4.45 4.45 0 1 0 8.9 0a4.45 4.45 0 1 0 -8.9 0M117.7 454.5a4.45 4.45 0 1 0 8.9 0a4.45 4.45 0 1 0 -8.9 0M126.4 454.5a4.45 4.45 0 1 0 8.9 0a4.45 4.45 0 1 0 -8.9 0M152.6 454.5a4.45 4.45 0 1 0 8.9 0a4.45 4.45 0 1 0 -8.9 0M161.4 454.5a4.45 4.45 0 1 0 8.9 0a4.45 4.45 0 1 0 -8.9 0M213.7 454.5a4.45 4.45 0 1 0 8.9 0a4.45 4.45 0 1 0 -8.9 0M222.4 454.5a4.45 4.45 0 1 0 8.9 0a4.45 4.45 0 1 0 -8.9 0M231.2 454.5a4.45 4.45 0 1 0 8.9 0a4.45 4.45 0 1 0 -8.9 0M292.3 454.5a4.45 4.45 0 1 0 8.9 0a4.45 4.45 0 1 0 -8.9 0M301.0 454.5a4.45 4.45 0 1 0 8.9 0a4.45 4.45 0 1 0 -8.9 0M370.8 454.5a4.45 4.45 0 1 0 8.9 0a4.45 4.45 0 1 0 -8.9 0M379.5 454.5a4.45 4.45 0 1 0 8.9 0a4.45 4.45 0 1 0 -8.9 0M440.6 454.5a4.45 4.45 0 1 0 8.9 0a4.45 4.45 0 1 0 -8.9 0M449.3 454.5a4.45 4.45 0 1 0 8.9 0a4.45 4.45 0 1 0 -8.9 0M30.5 463.3a4.45 4.45 0 1 0 8.9 0a4.45 4.45 0 1 0 -8.9 0M39.2 463.3a4.45 4.45 0 1 0 8.9 0a4.45 4.45 0 1 0 -8.9 0M74.1 463.3a4.45 4.45 0 1 0 8.9 0a4.45 4.45 0 1 0 -8.9 0M82.8 463.3a4.45 4.45 0 1 0 8.9 0a4.45 4.45 0 1 0 -8.9 0M91.5 463.3a4.45 4.45 0 1 0 8.9 0a4.45 4.45 0 1 0 -8.9 0M100.3 463.3a4.45 4.45 0 1 0 8.9 0a4.45 4.45 0 1 0 -8.9 0M109.0 463.3a4.45 4.45 0 1 0 8.9 0a4.45 4.45 0 1 0 -8.9 0M117.7 463.3a4.45 4.45 0 1 0 8.9 0a4.45 4.45 0 1 0 -8.9 0M126.4 463.3a4.45 4.45 0 1 0 8.9 0a4.45 4.45 0 1 0 -8.9 0M205.0 463.3a4.45 4.45 0 1 0 8.9 0a4.45 4.45 0 1 0 -8.9 0M213.7 463.3a4.45 4.45 0 1 0 8.9 0a4.45 4.45 0 1 0 -8.9 0M222.4 463.3a4.45 4.45 0 1 0 8.9 0a4.45 4.45 0 1 0 -8.9 0M231.2 463.3a4.45 4.45 0 1 0 8.9 0a4.45 4.45 0 1 0 -8.9 0M283.5 463.3a4.45 4.45 0 1 0 8.9 0a4.45 4.45 0 1 0 -8.9 0M292.3 463.3a4.45 4.45 0 1 0 8.9 0a4.45 4.45 0 1 0 -8.9 0M301.0 463.3a4.45 4.45 0 1 0 8.9 0a4.45 4.45 0 1 0 -8.9 0M362.1 463.3a4.45 4.45 0 1 0 8.9 0a4.45 4.45 0 1 0 -8.9 0M370.8 463.3a4.45 4.45 0 1 0 8.9 0a4.45 4.45 0 1 0 -8.9 0M414.4 463.3a4.45 4.45 0 1 0 8.9 0a4.45 4.45 0 1 0 -8.9 0M423.2 463.3a4.45 4.45 0 1 0 8.9 0a4.45 4.45 0 1 0 -8.9 0M39.2 472.0a4.45 4.45 0 1 0 8.9 0a4.45 4.45 0 1 0 -8.9 0M47.9 472.0a4.45 4.45 0 1 0 8.9 0a4.45 4.45 0 1 0 -8.9 0M56.6 472.0a4.45 4.45 0 1 0 8.9 0a4.45 4.45 0 1 0 -8.9 0M82.8 472.0a4.45 4.45 0 1 0 8.9 0a4.45 4.45 0 1 0 -8.9 0M91.5 472.0a4.45 4.45 0 1 0 8.9 0a4.45 4.45 0 1 0 -8.9 0M100.3 472.0a4.45 4.45 0 1 0 8.9 0a4.45 4.45 0 1 0 -8.9 0M109.0 472.0a4.45 4.45 0 1 0 8.9 0a4.45 4.45 0 1 0 -8.9 0M117.7 472.0a4.45 4.45 0 1 0 8.9 0a4.45 4.45 0 1 0 -8.9 0M126.4 472.0a4.45 4.45 0 1 0 8.9 0a4.45 4.45 0 1 0 -8.9 0M152.6 472.0a4.45 4.45 0 1 0 8.9 0a4.45 4.45 0 1 0 -8.9 0M205.0 472.0a4.45 4.45 0 1 0 8.9 0a4.45 4.45 0 1 0 -8.9 0M213.7 472.0a4.45 4.45 0 1 0 8.9 0a4.45 4.45 0 1 0 -8.9 0M222.4 472.0a4.45 4.45 0 1 0 8.9 0a4.45 4.45 0 1 0 -8.9 0M231.2 472.0a4.45 4.45 0 1 0 8.9 0a4.45 4.45 0 1 0 -8.9 0M292.3 472.0a4.45 4.45 0 1 0 8.9 0a4.45 4.45 0 1 0 -8.9 0M301.0 472.0a4.45 4.45 0 1 0 8.9 0a4.45 4.45 0 1 0 -8.9 0M370.8 472.0a4.45 4.45 0 1 0 8.9 0a4.45 4.45 0 1 0 -8.9 0M388.2 472.0a4.45 4.45 0 1 0 8.9 0a4.45 4.45 0 1 0 -8.9 0M397.0 472.0a4.45 4.45 0 1 0 8.9 0a4.45 4.45 0 1 0 -8.9 0M431.9 472.0a4.45 4.45 0 1 0 8.9 0a4.45 4.45 0 1 0 -8.9 0M440.6 472.0a4.45 4.45 0 1 0 8.9 0a4.45 4.45 0 1 0 -8.9 0M-4.5 480.8a4.45 4.45 0 1 0 8.9 0a4.45 4.45 0 1 0 -8.9 0M4.3 480.8a4.45 4.45 0 1 0 8.9 0a4.45 4.45 0 1 0 -8.9 0M13.0 480.8a4.45 4.45 0 1 0 8.9 0a4.45 4.45 0 1 0 -8.9 0M21.7 480.8a4.45 4.45 0 1 0 8.9 0a4.45 4.45 0 1 0 -8.9 0M30.5 480.8a4.45 4.45 0 1 0 8.9 0a4.45 4.45 0 1 0 -8.9 0M74.1 480.8a4.45 4.45 0 1 0 8.9 0a4.45 4.45 0 1 0 -8.9 0M82.8 480.8a4.45 4.45 0 1 0 8.9 0a4.45 4.45 0 1 0 -8.9 0M91.5 480.8a4.45 4.45 0 1 0 8.9 0a4.45 4.45 0 1 0 -8.9 0M100.3 480.8a4.45 4.45 0 1 0 8.9 0a4.45 4.45 0 1 0 -8.9 0M109.0 480.8a4.45 4.45 0 1 0 8.9 0a4.45 4.45 0 1 0 -8.9 0M117.7 480.8a4.45 4.45 0 1 0 8.9 0a4.45 4.45 0 1 0 -8.9 0M152.6 480.8a4.45 4.45 0 1 0 8.9 0a4.45 4.45 0 1 0 -8.9 0M161.4 480.8a4.45 4.45 0 1 0 8.9 0a4.45 4.45 0 1 0 -8.9 0M205.0 480.8a4.45 4.45 0 1 0 8.9 0a4.45 4.45 0 1 0 -8.9 0M213.7 480.8a4.45 4.45 0 1 0 8.9 0a4.45 4.45 0 1 0 -8.9 0M222.4 480.8a4.45 4.45 0 1 0 8.9 0a4.45 4.45 0 1 0 -8.9 0M231.2 480.8a4.45 4.45 0 1 0 8.9 0a4.45 4.45 0 1 0 -8.9 0M362.1 480.8a4.45 4.45 0 1 0 8.9 0a4.45 4.45 0 1 0 -8.9 0M379.5 480.8a4.45 4.45 0 1 0 8.9 0a4.45 4.45 0 1 0 -8.9 0M388.2 480.8a4.45 4.45 0 1 0 8.9 0a4.45 4.45 0 1 0 -8.9 0M397.0 480.8a4.45 4.45 0 1 0 8.9 0a4.45 4.45 0 1 0 -8.9 0M423.2 480.8a4.45 4.45 0 1 0 8.9 0a4.45 4.45 0 1 0 -8.9 0M431.9 480.8a4.45 4.45 0 1 0 8.9 0a4.45 4.45 0 1 0 -8.9 0M440.6 480.8a4.45 4.45 0 1 0 8.9 0a4.45 4.45 0 1 0 -8.9 0M74.1 489.5a4.45 4.45 0 1 0 8.9 0a4.45 4.45 0 1 0 -8.9 0M82.8 489.5a4.45 4.45 0 1 0 8.9 0a4.45 4.45 0 1 0 -8.9 0M91.5 489.5a4.45 4.45 0 1 0 8.9 0a4.45 4.45 0 1 0 -8.9 0M100.3 489.5a4.45 4.45 0 1 0 8.9 0a4.45 4.45 0 1 0 -8.9 0M126.4 489.5a4.45 4.45 0 1 0 8.9 0a4.45 4.45 0 1 0 -8.9 0M161.4 489.5a4.45 4.45 0 1 0 8.9 0a4.45 4.45 0 1 0 -8.9 0M170.1 489.5a4.45 4.45 0 1 0 8.9 0a4.45 4.45 0 1 0 -8.9 0M178.8 489.5a4.45 4.45 0 1 0 8.9 0a4.45 4.45 0 1 0 -8.9 0M187.5 489.5a4.45 4.45 0 1 0 8.9 0a4.45 4.45 0 1 0 -8.9 0M196.3 489.5a4.45 4.45 0 1 0 8.9 0a4.45 4.45 0 1 0 -8.9 0M205.0 489.5a4.45 4.45 0 1 0 8.9 0a4.45 4.45 0 1 0 -8.9 0M213.7 489.5a4.45 4.45 0 1 0 8.9 0a4.45 4.45 0 1 0 -8.9 0M222.4 489.5a4.45 4.45 0 1 0 8.9 0a4.45 4.45 0 1 0 -8.9 0M231.2 489.5a4.45 4.45 0 1 0 8.9 0a4.45 4.45 0 1 0 -8.9 0M283.5 489.5a4.45 4.45 0 1 0 8.9 0a4.45 4.45 0 1 0 -8.9 0M292.3 489.5a4.45 4.45 0 1 0 8.9 0a4.45 4.45 0 1 0 -8.9 0M301.0 489.5a4.45 4.45 0 1 0 8.9 0a4.45 4.45 0 1 0 -8.9 0M344.6 489.5a4.45 4.45 0 1 0 8.9 0a4.45 4.45 0 1 0 -8.9 0M370.8 489.5a4.45 4.45 0 1 0 8.9 0a4.45 4.45 0 1 0 -8.9 0M379.5 489.5a4.45 4.45 0 1 0 8.9 0a4.45 4.45 0 1 0 -8.9 0M388.2 489.5a4.45 4.45 0 1 0 8.9 0a4.45 4.45 0 1 0 -8.9 0M397.0 489.5a4.45 4.45 0 1 0 8.9 0a4.45 4.45 0 1 0 -8.9 0M414.4 489.5a4.45 4.45 0 1 0 8.9 0a4.45 4.45 0 1 0 -8.9 0M440.6 489.5a4.45 4.45 0 1 0 8.9 0a4.45 4.45 0 1 0 -8.9 0M91.5 498.2a4.45 4.45 0 1 0 8.9 0a4.45 4.45 0 1 0 -8.9 0M100.3 498.2a4.45 4.45 0 1 0 8.9 0a4.45 4.45 0 1 0 -8.9 0M117.7 498.2a4.45 4.45 0 1 0 8.9 0a4.45 4.45 0 1 0 -8.9 0M126.4 498.2a4.45 4.45 0 1 0 8.9 0a4.45 4.45 0 1 0 -8.9 0M196.3 498.2a4.45 4.45 0 1 0 8.9 0a4.45 4.45 0 1 0 -8.9 0M205.0 498.2a4.45 4.45 0 1 0 8.9 0a4.45 4.45 0 1 0 -8.9 0M213.7 498.2a4.45 4.45 0 1 0 8.9 0a4.45 4.45 0 1 0 -8.9 0M231.2 498.2a4.45 4.45 0 1 0 8.9 0a4.45 4.45 0 1 0 -8.9 0M292.3 498.2a4.45 4.45 0 1 0 8.9 0a4.45 4.45 0 1 0 -8.9 0M301.0 498.2a4.45 4.45 0 1 0 8.9 0a4.45 4.45 0 1 0 -8.9 0M318.4 498.2a4.45 4.45 0 1 0 8.9 0a4.45 4.45 0 1 0 -8.9 0M327.2 498.2a4.45 4.45 0 1 0 8.9 0a4.45 4.45 0 1 0 -8.9 0M370.8 498.2a4.45 4.45 0 1 0 8.9 0a4.45 4.45 0 1 0 -8.9 0M379.5 498.2a4.45 4.45 0 1 0 8.9 0a4.45 4.45 0 1 0 -8.9 0M388.2 498.2a4.45 4.45 0 1 0 8.9 0a4.45 4.45 0 1 0 -8.9 0M397.0 498.2a4.45 4.45 0 1 0 8.9 0a4.45 4.45 0 1 0 -8.9 0M423.2 498.2a4.45 4.45 0 1 0 8.9 0a4.45 4.45 0 1 0 -8.9 0M431.9 498.2a4.45 4.45 0 1 0 8.9 0a4.45 4.45 0 1 0 -8.9 0M440.6 498.2a4.45 4.45 0 1 0 8.9 0a4.45 4.45 0 1 0 -8.9 0M91.5 507.0a4.45 4.45 0 1 0 8.9 0a4.45 4.45 0 1 0 -8.9 0M100.3 507.0a4.45 4.45 0 1 0 8.9 0a4.45 4.45 0 1 0 -8.9 0M109.0 507.0a4.45 4.45 0 1 0 8.9 0a4.45 4.45 0 1 0 -8.9 0M117.7 507.0a4.45 4.45 0 1 0 8.9 0a4.45 4.45 0 1 0 -8.9 0M126.4 507.0a4.45 4.45 0 1 0 8.9 0a4.45 4.45 0 1 0 -8.9 0M135.2 507.0a4.45 4.45 0 1 0 8.9 0a4.45 4.45 0 1 0 -8.9 0M143.9 507.0a4.45 4.45 0 1 0 8.9 0a4.45 4.45 0 1 0 -8.9 0M205.0 507.0a4.45 4.45 0 1 0 8.9 0a4.45 4.45 0 1 0 -8.9 0M301.0 507.0a4.45 4.45 0 1 0 8.9 0a4.45 4.45 0 1 0 -8.9 0M353.3 507.0a4.45 4.45 0 1 0 8.9 0a4.45 4.45 0 1 0 -8.9 0M379.5 507.0a4.45 4.45 0 1 0 8.9 0a4.45 4.45 0 1 0 -8.9 0M431.9 507.0a4.45 4.45 0 1 0 8.9 0a4.45 4.45 0 1 0 -8.9 0M440.6 507.0a4.45 4.45 0 1 0 8.9 0a4.45 4.45 0 1 0 -8.9 0M475.5 507.0a4.45 4.45 0 1 0 8.9 0a4.45 4.45 0 1 0 -8.9 0M527.9 507.0a4.45 4.45 0 1 0 8.9 0a4.45 4.45 0 1 0 -8.9 0M545.3 507.0a4.45 4.45 0 1 0 8.9 0a4.45 4.45 0 1 0 -8.9 0M-4.5 515.7a4.45 4.45 0 1 0 8.9 0a4.45 4.45 0 1 0 -8.9 0M109.0 515.7a4.45 4.45 0 1 0 8.9 0a4.45 4.45 0 1 0 -8.9 0M117.7 515.7a4.45 4.45 0 1 0 8.9 0a4.45 4.45 0 1 0 -8.9 0M126.4 515.7a4.45 4.45 0 1 0 8.9 0a4.45 4.45 0 1 0 -8.9 0M135.2 515.7a4.45 4.45 0 1 0 8.9 0a4.45 4.45 0 1 0 -8.9 0M170.1 515.7a4.45 4.45 0 1 0 8.9 0a4.45 4.45 0 1 0 -8.9 0M370.8 515.7a4.45 4.45 0 1 0 8.9 0a4.45 4.45 0 1 0 -8.9 0M388.2 515.7a4.45 4.45 0 1 0 8.9 0a4.45 4.45 0 1 0 -8.9 0M440.6 515.7a4.45 4.45 0 1 0 8.9 0a4.45 4.45 0 1 0 -8.9 0M30.5 524.5a4.45 4.45 0 1 0 8.9 0a4.45 4.45 0 1 0 -8.9 0M39.2 524.5a4.45 4.45 0 1 0 8.9 0a4.45 4.45 0 1 0 -8.9 0M109.0 524.5a4.45 4.45 0 1 0 8.9 0a4.45 4.45 0 1 0 -8.9 0M126.4 524.5a4.45 4.45 0 1 0 8.9 0a4.45 4.45 0 1 0 -8.9 0M187.5 524.5a4.45 4.45 0 1 0 8.9 0a4.45 4.45 0 1 0 -8.9 0M362.1 524.5a4.45 4.45 0 1 0 8.9 0a4.45 4.45 0 1 0 -8.9 0M388.2 524.5a4.45 4.45 0 1 0 8.9 0a4.45 4.45 0 1 0 -8.9 0M82.8 533.2a4.45 4.45 0 1 0 8.9 0a4.45 4.45 0 1 0 -8.9 0M109.0 533.2a4.45 4.45 0 1 0 8.9 0a4.45 4.45 0 1 0 -8.9 0M117.7 533.2a4.45 4.45 0 1 0 8.9 0a4.45 4.45 0 1 0 -8.9 0M126.4 533.2a4.45 4.45 0 1 0 8.9 0a4.45 4.45 0 1 0 -8.9 0M283.5 533.2a4.45 4.45 0 1 0 8.9 0a4.45 4.45 0 1 0 -8.9 0M292.3 533.2a4.45 4.45 0 1 0 8.9 0a4.45 4.45 0 1 0 -8.9 0M301.0 533.2a4.45 4.45 0 1 0 8.9 0a4.45 4.45 0 1 0 -8.9 0M327.2 533.2a4.45 4.45 0 1 0 8.9 0a4.45 4.45 0 1 0 -8.9 0M362.1 533.2a4.45 4.45 0 1 0 8.9 0a4.45 4.45 0 1 0 -8.9 0M379.5 533.2a4.45 4.45 0 1 0 8.9 0a4.45 4.45 0 1 0 -8.9 0M388.2 533.2a4.45 4.45 0 1 0 8.9 0a4.45 4.45 0 1 0 -8.9 0M39.2 541.9a4.45 4.45 0 1 0 8.9 0a4.45 4.45 0 1 0 -8.9 0M100.3 541.9a4.45 4.45 0 1 0 8.9 0a4.45 4.45 0 1 0 -8.9 0M109.0 541.9a4.45 4.45 0 1 0 8.9 0a4.45 4.45 0 1 0 -8.9 0M117.7 541.9a4.45 4.45 0 1 0 8.9 0a4.45 4.45 0 1 0 -8.9 0M126.4 541.9a4.45 4.45 0 1 0 8.9 0a4.45 4.45 0 1 0 -8.9 0M143.9 541.9a4.45 4.45 0 1 0 8.9 0a4.45 4.45 0 1 0 -8.9 0M152.6 541.9a4.45 4.45 0 1 0 8.9 0a4.45 4.45 0 1 0 -8.9 0M187.5 541.9a4.45 4.45 0 1 0 8.9 0a4.45 4.45 0 1 0 -8.9 0M196.3 541.9a4.45 4.45 0 1 0 8.9 0a4.45 4.45 0 1 0 -8.9 0M82.8 550.7a4.45 4.45 0 1 0 8.9 0a4.45 4.45 0 1 0 -8.9 0M91.5 550.7a4.45 4.45 0 1 0 8.9 0a4.45 4.45 0 1 0 -8.9 0M100.3 550.7a4.45 4.45 0 1 0 8.9 0a4.45 4.45 0 1 0 -8.9 0M109.0 550.7a4.45 4.45 0 1 0 8.9 0a4.45 4.45 0 1 0 -8.9 0M117.7 550.7a4.45 4.45 0 1 0 8.9 0a4.45 4.45 0 1 0 -8.9 0M126.4 550.7a4.45 4.45 0 1 0 8.9 0a4.45 4.45 0 1 0 -8.9 0M135.2 550.7a4.45 4.45 0 1 0 8.9 0a4.45 4.45 0 1 0 -8.9 0M143.9 550.7a4.45 4.45 0 1 0 8.9 0a4.45 4.45 0 1 0 -8.9 0M405.7 550.7a4.45 4.45 0 1 0 8.9 0a4.45 4.45 0 1 0 -8.9 0M-4.5 559.4a4.45 4.45 0 1 0 8.9 0a4.45 4.45 0 1 0 -8.9 0M4.3 559.4a4.45 4.45 0 1 0 8.9 0a4.45 4.45 0 1 0 -8.9 0M13.0 559.4a4.45 4.45 0 1 0 8.9 0a4.45 4.45 0 1 0 -8.9 0M21.7 559.4a4.45 4.45 0 1 0 8.9 0a4.45 4.45 0 1 0 -8.9 0M30.5 559.4a4.45 4.45 0 1 0 8.9 0a4.45 4.45 0 1 0 -8.9 0M39.2 559.4a4.45 4.45 0 1 0 8.9 0a4.45 4.45 0 1 0 -8.9 0M47.9 559.4a4.45 4.45 0 1 0 8.9 0a4.45 4.45 0 1 0 -8.9 0M56.6 559.4a4.45 4.45 0 1 0 8.9 0a4.45 4.45 0 1 0 -8.9 0M65.4 559.4a4.45 4.45 0 1 0 8.9 0a4.45 4.45 0 1 0 -8.9 0M74.1 559.4a4.45 4.45 0 1 0 8.9 0a4.45 4.45 0 1 0 -8.9 0M82.8 559.4a4.45 4.45 0 1 0 8.9 0a4.45 4.45 0 1 0 -8.9 0M91.5 559.4a4.45 4.45 0 1 0 8.9 0a4.45 4.45 0 1 0 -8.9 0M100.3 559.4a4.45 4.45 0 1 0 8.9 0a4.45 4.45 0 1 0 -8.9 0M109.0 559.4a4.45 4.45 0 1 0 8.9 0a4.45 4.45 0 1 0 -8.9 0M117.7 559.4a4.45 4.45 0 1 0 8.9 0a4.45 4.45 0 1 0 -8.9 0M126.4 559.4a4.45 4.45 0 1 0 8.9 0a4.45 4.45 0 1 0 -8.9 0M135.2 559.4a4.45 4.45 0 1 0 8.9 0a4.45 4.45 0 1 0 -8.9 0M143.9 559.4a4.45 4.45 0 1 0 8.9 0a4.45 4.45 0 1 0 -8.9 0M13.0 568.2a4.45 4.45 0 1 0 8.9 0a4.45 4.45 0 1 0 -8.9 0M39.2 568.2a4.45 4.45 0 1 0 8.9 0a4.45 4.45 0 1 0 -8.9 0M47.9 568.2a4.45 4.45 0 1 0 8.9 0a4.45 4.45 0 1 0 -8.9 0M56.6 568.2a4.45 4.45 0 1 0 8.9 0a4.45 4.45 0 1 0 -8.9 0M74.1 568.2a4.45 4.45 0 1 0 8.9 0a4.45 4.45 0 1 0 -8.9 0M91.5 568.2a4.45 4.45 0 1 0 8.9 0a4.45 4.45 0 1 0 -8.9 0M100.3 568.2a4.45 4.45 0 1 0 8.9 0a4.45 4.45 0 1 0 -8.9 0M109.0 568.2a4.45 4.45 0 1 0 8.9 0a4.45 4.45 0 1 0 -8.9 0M117.7 568.2a4.45 4.45 0 1 0 8.9 0a4.45 4.45 0 1 0 -8.9 0M126.4 568.2a4.45 4.45 0 1 0 8.9 0a4.45 4.45 0 1 0 -8.9 0M135.2 568.2a4.45 4.45 0 1 0 8.9 0a4.45 4.45 0 1 0 -8.9 0M248.6 568.2a4.45 4.45 0 1 0 8.9 0a4.45 4.45 0 1 0 -8.9 0M292.3 568.2a4.45 4.45 0 1 0 8.9 0a4.45 4.45 0 1 0 -8.9 0M519.1 568.2a4.45 4.45 0 1 0 8.9 0a4.45 4.45 0 1 0 -8.9 0M-4.5 576.9a4.45 4.45 0 1 0 8.9 0a4.45 4.45 0 1 0 -8.9 0M13.0 576.9a4.45 4.45 0 1 0 8.9 0a4.45 4.45 0 1 0 -8.9 0M47.9 576.9a4.45 4.45 0 1 0 8.9 0a4.45 4.45 0 1 0 -8.9 0M100.3 576.9a4.45 4.45 0 1 0 8.9 0a4.45 4.45 0 1 0 -8.9 0M109.0 576.9a4.45 4.45 0 1 0 8.9 0a4.45 4.45 0 1 0 -8.9 0M126.4 576.9a4.45 4.45 0 1 0 8.9 0a4.45 4.45 0 1 0 -8.9 0M222.4 576.9a4.45 4.45 0 1 0 8.9 0a4.45 4.45 0 1 0 -8.9 0M266.1 576.9a4.45 4.45 0 1 0 8.9 0a4.45 4.45 0 1 0 -8.9 0M449.3 576.9a4.45 4.45 0 1 0 8.9 0a4.45 4.45 0 1 0 -8.9 0M519.1 576.9a4.45 4.45 0 1 0 8.9 0a4.45 4.45 0 1 0 -8.9 0M527.9 576.9a4.45 4.45 0 1 0 8.9 0a4.45 4.45 0 1 0 -8.9 0M30.5 585.6a4.45 4.45 0 1 0 8.9 0a4.45 4.45 0 1 0 -8.9 0M91.5 585.6a4.45 4.45 0 1 0 8.9 0a4.45 4.45 0 1 0 -8.9 0M100.3 585.6a4.45 4.45 0 1 0 8.9 0a4.45 4.45 0 1 0 -8.9 0M117.7 585.6a4.45 4.45 0 1 0 8.9 0a4.45 4.45 0 1 0 -8.9 0M161.4 585.6a4.45 4.45 0 1 0 8.9 0a4.45 4.45 0 1 0 -8.9 0M187.5 585.6a4.45 4.45 0 1 0 8.9 0a4.45 4.45 0 1 0 -8.9 0M327.2 585.6a4.45 4.45 0 1 0 8.9 0a4.45 4.45 0 1 0 -8.9 0M362.1 585.6a4.45 4.45 0 1 0 8.9 0a4.45 4.45 0 1 0 -8.9 0M388.2 585.6a4.45 4.45 0 1 0 8.9 0a4.45 4.45 0 1 0 -8.9 0M-4.5 594.4a4.45 4.45 0 1 0 8.9 0a4.45 4.45 0 1 0 -8.9 0M152.6 594.4a4.45 4.45 0 1 0 8.9 0a4.45 4.45 0 1 0 -8.9 0M170.1 594.4a4.45 4.45 0 1 0 8.9 0a4.45 4.45 0 1 0 -8.9 0M187.5 594.4a4.45 4.45 0 1 0 8.9 0a4.45 4.45 0 1 0 -8.9 0M257.3 594.4a4.45 4.45 0 1 0 8.9 0a4.45 4.45 0 1 0 -8.9 0M266.1 594.4a4.45 4.45 0 1 0 8.9 0a4.45 4.45 0 1 0 -8.9 0M274.8 594.4a4.45 4.45 0 1 0 8.9 0a4.45 4.45 0 1 0 -8.9 0M414.4 594.4a4.45 4.45 0 1 0 8.9 0a4.45 4.45 0 1 0 -8.9 0M449.3 594.4a4.45 4.45 0 1 0 8.9 0a4.45 4.45 0 1 0 -8.9 0M545.3 594.4a4.45 4.45 0 1 0 8.9 0a4.45 4.45 0 1 0 -8.9 0M21.7 603.1a4.45 4.45 0 1 0 8.9 0a4.45 4.45 0 1 0 -8.9 0M30.5 603.1a4.45 4.45 0 1 0 8.9 0a4.45 4.45 0 1 0 -8.9 0M143.9 603.1a4.45 4.45 0 1 0 8.9 0a4.45 4.45 0 1 0 -8.9 0M292.3 603.1a4.45 4.45 0 1 0 8.9 0a4.45 4.45 0 1 0 -8.9 0M301.0 603.1a4.45 4.45 0 1 0 8.9 0a4.45 4.45 0 1 0 -8.9 0M309.7 603.1a4.45 4.45 0 1 0 8.9 0a4.45 4.45 0 1 0 -8.9 0M466.8 603.1a4.45 4.45 0 1 0 8.9 0a4.45 4.45 0 1 0 -8.9 0M501.7 603.1a4.45 4.45 0 1 0 8.9 0a4.45 4.45 0 1 0 -8.9 0M510.4 603.1a4.45 4.45 0 1 0 8.9 0a4.45 4.45 0 1 0 -8.9 0M30.5 611.9a4.45 4.45 0 1 0 8.9 0a4.45 4.45 0 1 0 -8.9 0M74.1 611.9a4.45 4.45 0 1 0 8.9 0a4.45 4.45 0 1 0 -8.9 0M213.7 611.9a4.45 4.45 0 1 0 8.9 0a4.45 4.45 0 1 0 -8.9 0M231.2 611.9a4.45 4.45 0 1 0 8.9 0a4.45 4.45 0 1 0 -8.9 0M239.9 611.9a4.45 4.45 0 1 0 8.9 0a4.45 4.45 0 1 0 -8.9 0M292.3 611.9a4.45 4.45 0 1 0 8.9 0a4.45 4.45 0 1 0 -8.9 0M39.2 620.6a4.45 4.45 0 1 0 8.9 0a4.45 4.45 0 1 0 -8.9 0M47.9 620.6a4.45 4.45 0 1 0 8.9 0a4.45 4.45 0 1 0 -8.9 0M109.0 620.6a4.45 4.45 0 1 0 8.9 0a4.45 4.45 0 1 0 -8.9 0M126.4 620.6a4.45 4.45 0 1 0 8.9 0a4.45 4.45 0 1 0 -8.9 0M143.9 620.6a4.45 4.45 0 1 0 8.9 0a4.45 4.45 0 1 0 -8.9 0M196.3 620.6a4.45 4.45 0 1 0 8.9 0a4.45 4.45 0 1 0 -8.9 0M213.7 620.6a4.45 4.45 0 1 0 8.9 0a4.45 4.45 0 1 0 -8.9 0M239.9 620.6a4.45 4.45 0 1 0 8.9 0a4.45 4.45 0 1 0 -8.9 0M257.3 620.6a4.45 4.45 0 1 0 8.9 0a4.45 4.45 0 1 0 -8.9 0M431.9 620.6a4.45 4.45 0 1 0 8.9 0a4.45 4.45 0 1 0 -8.9 0M458.1 620.6a4.45 4.45 0 1 0 8.9 0a4.45 4.45 0 1 0 -8.9 0M493.0 620.6a4.45 4.45 0 1 0 8.9 0a4.45 4.45 0 1 0 -8.9 0M501.7 620.6a4.45 4.45 0 1 0 8.9 0a4.45 4.45 0 1 0 -8.9 0M4.3 629.3a4.45 4.45 0 1 0 8.9 0a4.45 4.45 0 1 0 -8.9 0M13.0 629.3a4.45 4.45 0 1 0 8.9 0a4.45 4.45 0 1 0 -8.9 0M100.3 629.3a4.45 4.45 0 1 0 8.9 0a4.45 4.45 0 1 0 -8.9 0M117.7 629.3a4.45 4.45 0 1 0 8.9 0a4.45 4.45 0 1 0 -8.9 0M126.4 629.3a4.45 4.45 0 1 0 8.9 0a4.45 4.45 0 1 0 -8.9 0M135.2 629.3a4.45 4.45 0 1 0 8.9 0a4.45 4.45 0 1 0 -8.9 0M187.5 629.3a4.45 4.45 0 1 0 8.9 0a4.45 4.45 0 1 0 -8.9 0M222.4 629.3a4.45 4.45 0 1 0 8.9 0a4.45 4.45 0 1 0 -8.9 0M248.6 629.3a4.45 4.45 0 1 0 8.9 0a4.45 4.45 0 1 0 -8.9 0M301.0 629.3a4.45 4.45 0 1 0 8.9 0a4.45 4.45 0 1 0 -8.9 0M405.7 629.3a4.45 4.45 0 1 0 8.9 0a4.45 4.45 0 1 0 -8.9 0M466.8 629.3a4.45 4.45 0 1 0 8.9 0a4.45 4.45 0 1 0 -8.9 0M475.5 629.3a4.45 4.45 0 1 0 8.9 0a4.45 4.45 0 1 0 -8.9 0M13.0 638.1a4.45 4.45 0 1 0 8.9 0a4.45 4.45 0 1 0 -8.9 0M56.6 638.1a4.45 4.45 0 1 0 8.9 0a4.45 4.45 0 1 0 -8.9 0M74.1 638.1a4.45 4.45 0 1 0 8.9 0a4.45 4.45 0 1 0 -8.9 0M91.5 638.1a4.45 4.45 0 1 0 8.9 0a4.45 4.45 0 1 0 -8.9 0M143.9 638.1a4.45 4.45 0 1 0 8.9 0a4.45 4.45 0 1 0 -8.9 0M178.8 638.1a4.45 4.45 0 1 0 8.9 0a4.45 4.45 0 1 0 -8.9 0M213.7 638.1a4.45 4.45 0 1 0 8.9 0a4.45 4.45 0 1 0 -8.9 0M292.3 638.1a4.45 4.45 0 1 0 8.9 0a4.45 4.45 0 1 0 -8.9 0M309.7 638.1a4.45 4.45 0 1 0 8.9 0a4.45 4.45 0 1 0 -8.9 0M318.4 638.1a4.45 4.45 0 1 0 8.9 0a4.45 4.45 0 1 0 -8.9 0M362.1 638.1a4.45 4.45 0 1 0 8.9 0a4.45 4.45 0 1 0 -8.9 0M466.8 638.1a4.45 4.45 0 1 0 8.9 0a4.45 4.45 0 1 0 -8.9 0M484.2 638.1a4.45 4.45 0 1 0 8.9 0a4.45 4.45 0 1 0 -8.9 0M-4.5 646.8a4.45 4.45 0 1 0 8.9 0a4.45 4.45 0 1 0 -8.9 0M13.0 646.8a4.45 4.45 0 1 0 8.9 0a4.45 4.45 0 1 0 -8.9 0M21.7 646.8a4.45 4.45 0 1 0 8.9 0a4.45 4.45 0 1 0 -8.9 0M56.6 646.8a4.45 4.45 0 1 0 8.9 0a4.45 4.45 0 1 0 -8.9 0M82.8 646.8a4.45 4.45 0 1 0 8.9 0a4.45 4.45 0 1 0 -8.9 0M91.5 646.8a4.45 4.45 0 1 0 8.9 0a4.45 4.45 0 1 0 -8.9 0M161.4 646.8a4.45 4.45 0 1 0 8.9 0a4.45 4.45 0 1 0 -8.9 0M170.1 646.8a4.45 4.45 0 1 0 8.9 0a4.45 4.45 0 1 0 -8.9 0M187.5 646.8a4.45 4.45 0 1 0 8.9 0a4.45 4.45 0 1 0 -8.9 0M196.3 646.8a4.45 4.45 0 1 0 8.9 0a4.45 4.45 0 1 0 -8.9 0M205.0 646.8a4.45 4.45 0 1 0 8.9 0a4.45 4.45 0 1 0 -8.9 0M231.2 646.8a4.45 4.45 0 1 0 8.9 0a4.45 4.45 0 1 0 -8.9 0M318.4 646.8a4.45 4.45 0 1 0 8.9 0a4.45 4.45 0 1 0 -8.9 0M370.8 646.8a4.45 4.45 0 1 0 8.9 0a4.45 4.45 0 1 0 -8.9 0M466.8 646.8a4.45 4.45 0 1 0 8.9 0a4.45 4.45 0 1 0 -8.9 0M484.2 646.8a4.45 4.45 0 1 0 8.9 0a4.45 4.45 0 1 0 -8.9 0M501.7 646.8a4.45 4.45 0 1 0 8.9 0a4.45 4.45 0 1 0 -8.9 0M545.3 646.8a4.45 4.45 0 1 0 8.9 0a4.45 4.45 0 1 0 -8.9 0M-4.5 655.6a4.45 4.45 0 1 0 8.9 0a4.45 4.45 0 1 0 -8.9 0M39.2 655.6a4.45 4.45 0 1 0 8.9 0a4.45 4.45 0 1 0 -8.9 0M47.9 655.6a4.45 4.45 0 1 0 8.9 0a4.45 4.45 0 1 0 -8.9 0M65.4 655.6a4.45 4.45 0 1 0 8.9 0a4.45 4.45 0 1 0 -8.9 0M74.1 655.6a4.45 4.45 0 1 0 8.9 0a4.45 4.45 0 1 0 -8.9 0M126.4 655.6a4.45 4.45 0 1 0 8.9 0a4.45 4.45 0 1 0 -8.9 0M135.2 655.6a4.45 4.45 0 1 0 8.9 0a4.45 4.45 0 1 0 -8.9 0M152.6 655.6a4.45 4.45 0 1 0 8.9 0a4.45 4.45 0 1 0 -8.9 0M161.4 655.6a4.45 4.45 0 1 0 8.9 0a4.45 4.45 0 1 0 -8.9 0M170.1 655.6a4.45 4.45 0 1 0 8.9 0a4.45 4.45 0 1 0 -8.9 0M187.5 655.6a4.45 4.45 0 1 0 8.9 0a4.45 4.45 0 1 0 -8.9 0M196.3 655.6a4.45 4.45 0 1 0 8.9 0a4.45 4.45 0 1 0 -8.9 0M205.0 655.6a4.45 4.45 0 1 0 8.9 0a4.45 4.45 0 1 0 -8.9 0M248.6 655.6a4.45 4.45 0 1 0 8.9 0a4.45 4.45 0 1 0 -8.9 0M292.3 655.6a4.45 4.45 0 1 0 8.9 0a4.45 4.45 0 1 0 -8.9 0M301.0 655.6a4.45 4.45 0 1 0 8.9 0a4.45 4.45 0 1 0 -8.9 0M309.7 655.6a4.45 4.45 0 1 0 8.9 0a4.45 4.45 0 1 0 -8.9 0M344.6 655.6a4.45 4.45 0 1 0 8.9 0a4.45 4.45 0 1 0 -8.9 0M397.0 655.6a4.45 4.45 0 1 0 8.9 0a4.45 4.45 0 1 0 -8.9 0M414.4 655.6a4.45 4.45 0 1 0 8.9 0a4.45 4.45 0 1 0 -8.9 0M-4.5 664.3a4.45 4.45 0 1 0 8.9 0a4.45 4.45 0 1 0 -8.9 0M4.3 664.3a4.45 4.45 0 1 0 8.9 0a4.45 4.45 0 1 0 -8.9 0M21.7 664.3a4.45 4.45 0 1 0 8.9 0a4.45 4.45 0 1 0 -8.9 0M47.9 664.3a4.45 4.45 0 1 0 8.9 0a4.45 4.45 0 1 0 -8.9 0M82.8 664.3a4.45 4.45 0 1 0 8.9 0a4.45 4.45 0 1 0 -8.9 0M152.6 664.3a4.45 4.45 0 1 0 8.9 0a4.45 4.45 0 1 0 -8.9 0M196.3 664.3a4.45 4.45 0 1 0 8.9 0a4.45 4.45 0 1 0 -8.9 0M301.0 664.3a4.45 4.45 0 1 0 8.9 0a4.45 4.45 0 1 0 -8.9 0M327.2 664.3a4.45 4.45 0 1 0 8.9 0a4.45 4.45 0 1 0 -8.9 0M344.6 664.3a4.45 4.45 0 1 0 8.9 0a4.45 4.45 0 1 0 -8.9 0M397.0 664.3a4.45 4.45 0 1 0 8.9 0a4.45 4.45 0 1 0 -8.9 0M449.3 664.3a4.45 4.45 0 1 0 8.9 0a4.45 4.45 0 1 0 -8.9 0M484.2 664.3a4.45 4.45 0 1 0 8.9 0a4.45 4.45 0 1 0 -8.9 0M501.7 664.3a4.45 4.45 0 1 0 8.9 0a4.45 4.45 0 1 0 -8.9 0M527.9 664.3a4.45 4.45 0 1 0 8.9 0a4.45 4.45 0 1 0 -8.9 0M545.3 664.3a4.45 4.45 0 1 0 8.9 0a4.45 4.45 0 1 0 -8.9 0M4.3 673.1a4.45 4.45 0 1 0 8.9 0a4.45 4.45 0 1 0 -8.9 0M13.0 673.1a4.45 4.45 0 1 0 8.9 0a4.45 4.45 0 1 0 -8.9 0M21.7 673.1a4.45 4.45 0 1 0 8.9 0a4.45 4.45 0 1 0 -8.9 0M30.5 673.1a4.45 4.45 0 1 0 8.9 0a4.45 4.45 0 1 0 -8.9 0M135.2 673.1a4.45 4.45 0 1 0 8.9 0a4.45 4.45 0 1 0 -8.9 0M178.8 673.1a4.45 4.45 0 1 0 8.9 0a4.45 4.45 0 1 0 -8.9 0M318.4 673.1a4.45 4.45 0 1 0 8.9 0a4.45 4.45 0 1 0 -8.9 0M449.3 673.1a4.45 4.45 0 1 0 8.9 0a4.45 4.45 0 1 0 -8.9 0M510.4 673.1a4.45 4.45 0 1 0 8.9 0a4.45 4.45 0 1 0 -8.9 0M545.3 673.1a4.45 4.45 0 1 0 8.9 0a4.45 4.45 0 1 0 -8.9 0M30.5 681.8a4.45 4.45 0 1 0 8.9 0a4.45 4.45 0 1 0 -8.9 0M39.2 681.8a4.45 4.45 0 1 0 8.9 0a4.45 4.45 0 1 0 -8.9 0M74.1 681.8a4.45 4.45 0 1 0 8.9 0a4.45 4.45 0 1 0 -8.9 0M82.8 681.8a4.45 4.45 0 1 0 8.9 0a4.45 4.45 0 1 0 -8.9 0M91.5 681.8a4.45 4.45 0 1 0 8.9 0a4.45 4.45 0 1 0 -8.9 0M126.4 681.8a4.45 4.45 0 1 0 8.9 0a4.45 4.45 0 1 0 -8.9 0M135.2 681.8a4.45 4.45 0 1 0 8.9 0a4.45 4.45 0 1 0 -8.9 0M161.4 681.8a4.45 4.45 0 1 0 8.9 0a4.45 4.45 0 1 0 -8.9 0M170.1 681.8a4.45 4.45 0 1 0 8.9 0a4.45 4.45 0 1 0 -8.9 0M178.8 681.8a4.45 4.45 0 1 0 8.9 0a4.45 4.45 0 1 0 -8.9 0M231.2 681.8a4.45 4.45 0 1 0 8.9 0a4.45 4.45 0 1 0 -8.9 0M239.9 681.8a4.45 4.45 0 1 0 8.9 0a4.45 4.45 0 1 0 -8.9 0M248.6 681.8a4.45 4.45 0 1 0 8.9 0a4.45 4.45 0 1 0 -8.9 0M362.1 681.8a4.45 4.45 0 1 0 8.9 0a4.45 4.45 0 1 0 -8.9 0M388.2 681.8a4.45 4.45 0 1 0 8.9 0a4.45 4.45 0 1 0 -8.9 0M397.0 681.8a4.45 4.45 0 1 0 8.9 0a4.45 4.45 0 1 0 -8.9 0M493.0 681.8a4.45 4.45 0 1 0 8.9 0a4.45 4.45 0 1 0 -8.9 0M13.0 690.5a4.45 4.45 0 1 0 8.9 0a4.45 4.45 0 1 0 -8.9 0M21.7 690.5a4.45 4.45 0 1 0 8.9 0a4.45 4.45 0 1 0 -8.9 0M30.5 690.5a4.45 4.45 0 1 0 8.9 0a4.45 4.45 0 1 0 -8.9 0M47.9 690.5a4.45 4.45 0 1 0 8.9 0a4.45 4.45 0 1 0 -8.9 0M74.1 690.5a4.45 4.45 0 1 0 8.9 0a4.45 4.45 0 1 0 -8.9 0M82.8 690.5a4.45 4.45 0 1 0 8.9 0a4.45 4.45 0 1 0 -8.9 0M91.5 690.5a4.45 4.45 0 1 0 8.9 0a4.45 4.45 0 1 0 -8.9 0M152.6 690.5a4.45 4.45 0 1 0 8.9 0a4.45 4.45 0 1 0 -8.9 0M196.3 690.5a4.45 4.45 0 1 0 8.9 0a4.45 4.45 0 1 0 -8.9 0M205.0 690.5a4.45 4.45 0 1 0 8.9 0a4.45 4.45 0 1 0 -8.9 0M248.6 690.5a4.45 4.45 0 1 0 8.9 0a4.45 4.45 0 1 0 -8.9 0M257.3 690.5a4.45 4.45 0 1 0 8.9 0a4.45 4.45 0 1 0 -8.9 0M283.5 690.5a4.45 4.45 0 1 0 8.9 0a4.45 4.45 0 1 0 -8.9 0M388.2 690.5a4.45 4.45 0 1 0 8.9 0a4.45 4.45 0 1 0 -8.9 0M545.3 690.5a4.45 4.45 0 1 0 8.9 0a4.45 4.45 0 1 0 -8.9 0M-4.5 699.3a4.45 4.45 0 1 0 8.9 0a4.45 4.45 0 1 0 -8.9 0M30.5 699.3a4.45 4.45 0 1 0 8.9 0a4.45 4.45 0 1 0 -8.9 0M56.6 699.3a4.45 4.45 0 1 0 8.9 0a4.45 4.45 0 1 0 -8.9 0M65.4 699.3a4.45 4.45 0 1 0 8.9 0a4.45 4.45 0 1 0 -8.9 0M74.1 699.3a4.45 4.45 0 1 0 8.9 0a4.45 4.45 0 1 0 -8.9 0M82.8 699.3a4.45 4.45 0 1 0 8.9 0a4.45 4.45 0 1 0 -8.9 0M91.5 699.3a4.45 4.45 0 1 0 8.9 0a4.45 4.45 0 1 0 -8.9 0M100.3 699.3a4.45 4.45 0 1 0 8.9 0a4.45 4.45 0 1 0 -8.9 0M117.7 699.3a4.45 4.45 0 1 0 8.9 0a4.45 4.45 0 1 0 -8.9 0M152.6 699.3a4.45 4.45 0 1 0 8.9 0a4.45 4.45 0 1 0 -8.9 0M161.4 699.3a4.45 4.45 0 1 0 8.9 0a4.45 4.45 0 1 0 -8.9 0M170.1 699.3a4.45 4.45 0 1 0 8.9 0a4.45 4.45 0 1 0 -8.9 0M178.8 699.3a4.45 4.45 0 1 0 8.9 0a4.45 4.45 0 1 0 -8.9 0M196.3 699.3a4.45 4.45 0 1 0 8.9 0a4.45 4.45 0 1 0 -8.9 0M205.0 699.3a4.45 4.45 0 1 0 8.9 0a4.45 4.45 0 1 0 -8.9 0M231.2 699.3a4.45 4.45 0 1 0 8.9 0a4.45 4.45 0 1 0 -8.9 0M239.9 699.3a4.45 4.45 0 1 0 8.9 0a4.45 4.45 0 1 0 -8.9 0M274.8 699.3a4.45 4.45 0 1 0 8.9 0a4.45 4.45 0 1 0 -8.9 0M292.3 699.3a4.45 4.45 0 1 0 8.9 0a4.45 4.45 0 1 0 -8.9 0M309.7 699.3a4.45 4.45 0 1 0 8.9 0a4.45 4.45 0 1 0 -8.9 0M335.9 699.3a4.45 4.45 0 1 0 8.9 0a4.45 4.45 0 1 0 -8.9 0M519.1 699.3a4.45 4.45 0 1 0 8.9 0a4.45 4.45 0 1 0 -8.9 0M545.3 699.3a4.45 4.45 0 1 0 8.9 0a4.45 4.45 0 1 0 -8.9 0M4.3 708.0a4.45 4.45 0 1 0 8.9 0a4.45 4.45 0 1 0 -8.9 0M39.2 708.0a4.45 4.45 0 1 0 8.9 0a4.45 4.45 0 1 0 -8.9 0M47.9 708.0a4.45 4.45 0 1 0 8.9 0a4.45 4.45 0 1 0 -8.9 0M56.6 708.0a4.45 4.45 0 1 0 8.9 0a4.45 4.45 0 1 0 -8.9 0M65.4 708.0a4.45 4.45 0 1 0 8.9 0a4.45 4.45 0 1 0 -8.9 0M74.1 708.0a4.45 4.45 0 1 0 8.9 0a4.45 4.45 0 1 0 -8.9 0M91.5 708.0a4.45 4.45 0 1 0 8.9 0a4.45 4.45 0 1 0 -8.9 0M100.3 708.0a4.45 4.45 0 1 0 8.9 0a4.45 4.45 0 1 0 -8.9 0M152.6 708.0a4.45 4.45 0 1 0 8.9 0a4.45 4.45 0 1 0 -8.9 0M161.4 708.0a4.45 4.45 0 1 0 8.9 0a4.45 4.45 0 1 0 -8.9 0M178.8 708.0a4.45 4.45 0 1 0 8.9 0a4.45 4.45 0 1 0 -8.9 0M196.3 708.0a4.45 4.45 0 1 0 8.9 0a4.45 4.45 0 1 0 -8.9 0M205.0 708.0a4.45 4.45 0 1 0 8.9 0a4.45 4.45 0 1 0 -8.9 0M266.1 708.0a4.45 4.45 0 1 0 8.9 0a4.45 4.45 0 1 0 -8.9 0M274.8 708.0a4.45 4.45 0 1 0 8.9 0a4.45 4.45 0 1 0 -8.9 0M292.3 708.0a4.45 4.45 0 1 0 8.9 0a4.45 4.45 0 1 0 -8.9 0M301.0 708.0a4.45 4.45 0 1 0 8.9 0a4.45 4.45 0 1 0 -8.9 0M370.8 708.0a4.45 4.45 0 1 0 8.9 0a4.45 4.45 0 1 0 -8.9 0M414.4 708.0a4.45 4.45 0 1 0 8.9 0a4.45 4.45 0 1 0 -8.9 0M423.2 708.0a4.45 4.45 0 1 0 8.9 0a4.45 4.45 0 1 0 -8.9 0M431.9 708.0a4.45 4.45 0 1 0 8.9 0a4.45 4.45 0 1 0 -8.9 0M458.1 708.0a4.45 4.45 0 1 0 8.9 0a4.45 4.45 0 1 0 -8.9 0M527.9 708.0a4.45 4.45 0 1 0 8.9 0a4.45 4.45 0 1 0 -8.9 0M-4.5 716.8a4.45 4.45 0 1 0 8.9 0a4.45 4.45 0 1 0 -8.9 0M4.3 716.8a4.45 4.45 0 1 0 8.9 0a4.45 4.45 0 1 0 -8.9 0M13.0 716.8a4.45 4.45 0 1 0 8.9 0a4.45 4.45 0 1 0 -8.9 0M21.7 716.8a4.45 4.45 0 1 0 8.9 0a4.45 4.45 0 1 0 -8.9 0M30.5 716.8a4.45 4.45 0 1 0 8.9 0a4.45 4.45 0 1 0 -8.9 0M47.9 716.8a4.45 4.45 0 1 0 8.9 0a4.45 4.45 0 1 0 -8.9 0M56.6 716.8a4.45 4.45 0 1 0 8.9 0a4.45 4.45 0 1 0 -8.9 0M74.1 716.8a4.45 4.45 0 1 0 8.9 0a4.45 4.45 0 1 0 -8.9 0M82.8 716.8a4.45 4.45 0 1 0 8.9 0a4.45 4.45 0 1 0 -8.9 0M152.6 716.8a4.45 4.45 0 1 0 8.9 0a4.45 4.45 0 1 0 -8.9 0M161.4 716.8a4.45 4.45 0 1 0 8.9 0a4.45 4.45 0 1 0 -8.9 0M178.8 716.8a4.45 4.45 0 1 0 8.9 0a4.45 4.45 0 1 0 -8.9 0M187.5 716.8a4.45 4.45 0 1 0 8.9 0a4.45 4.45 0 1 0 -8.9 0M213.7 716.8a4.45 4.45 0 1 0 8.9 0a4.45 4.45 0 1 0 -8.9 0M239.9 716.8a4.45 4.45 0 1 0 8.9 0a4.45 4.45 0 1 0 -8.9 0M248.6 716.8a4.45 4.45 0 1 0 8.9 0a4.45 4.45 0 1 0 -8.9 0M257.3 716.8a4.45 4.45 0 1 0 8.9 0a4.45 4.45 0 1 0 -8.9 0M274.8 716.8a4.45 4.45 0 1 0 8.9 0a4.45 4.45 0 1 0 -8.9 0M292.3 716.8a4.45 4.45 0 1 0 8.9 0a4.45 4.45 0 1 0 -8.9 0M301.0 716.8a4.45 4.45 0 1 0 8.9 0a4.45 4.45 0 1 0 -8.9 0M309.7 716.8a4.45 4.45 0 1 0 8.9 0a4.45 4.45 0 1 0 -8.9 0M327.2 716.8a4.45 4.45 0 1 0 8.9 0a4.45 4.45 0 1 0 -8.9 0M335.9 716.8a4.45 4.45 0 1 0 8.9 0a4.45 4.45 0 1 0 -8.9 0M362.1 716.8a4.45 4.45 0 1 0 8.9 0a4.45 4.45 0 1 0 -8.9 0M370.8 716.8a4.45 4.45 0 1 0 8.9 0a4.45 4.45 0 1 0 -8.9 0M414.4 716.8a4.45 4.45 0 1 0 8.9 0a4.45 4.45 0 1 0 -8.9 0M423.2 716.8a4.45 4.45 0 1 0 8.9 0a4.45 4.45 0 1 0 -8.9 0M431.9 716.8a4.45 4.45 0 1 0 8.9 0a4.45 4.45 0 1 0 -8.9 0M440.6 716.8a4.45 4.45 0 1 0 8.9 0a4.45 4.45 0 1 0 -8.9 0M449.3 716.8a4.45 4.45 0 1 0 8.9 0a4.45 4.45 0 1 0 -8.9 0M484.2 716.8a4.45 4.45 0 1 0 8.9 0a4.45 4.45 0 1 0 -8.9 0M-4.5 725.5a4.45 4.45 0 1 0 8.9 0a4.45 4.45 0 1 0 -8.9 0M4.3 725.5a4.45 4.45 0 1 0 8.9 0a4.45 4.45 0 1 0 -8.9 0M13.0 725.5a4.45 4.45 0 1 0 8.9 0a4.45 4.45 0 1 0 -8.9 0M39.2 725.5a4.45 4.45 0 1 0 8.9 0a4.45 4.45 0 1 0 -8.9 0M47.9 725.5a4.45 4.45 0 1 0 8.9 0a4.45 4.45 0 1 0 -8.9 0M82.8 725.5a4.45 4.45 0 1 0 8.9 0a4.45 4.45 0 1 0 -8.9 0M109.0 725.5a4.45 4.45 0 1 0 8.9 0a4.45 4.45 0 1 0 -8.9 0M143.9 725.5a4.45 4.45 0 1 0 8.9 0a4.45 4.45 0 1 0 -8.9 0M152.6 725.5a4.45 4.45 0 1 0 8.9 0a4.45 4.45 0 1 0 -8.9 0M178.8 725.5a4.45 4.45 0 1 0 8.9 0a4.45 4.45 0 1 0 -8.9 0M257.3 725.5a4.45 4.45 0 1 0 8.9 0a4.45 4.45 0 1 0 -8.9 0M283.5 725.5a4.45 4.45 0 1 0 8.9 0a4.45 4.45 0 1 0 -8.9 0M292.3 725.5a4.45 4.45 0 1 0 8.9 0a4.45 4.45 0 1 0 -8.9 0M301.0 725.5a4.45 4.45 0 1 0 8.9 0a4.45 4.45 0 1 0 -8.9 0M309.7 725.5a4.45 4.45 0 1 0 8.9 0a4.45 4.45 0 1 0 -8.9 0M318.4 725.5a4.45 4.45 0 1 0 8.9 0a4.45 4.45 0 1 0 -8.9 0M327.2 725.5a4.45 4.45 0 1 0 8.9 0a4.45 4.45 0 1 0 -8.9 0M335.9 725.5a4.45 4.45 0 1 0 8.9 0a4.45 4.45 0 1 0 -8.9 0M344.6 725.5a4.45 4.45 0 1 0 8.9 0a4.45 4.45 0 1 0 -8.9 0M379.5 725.5a4.45 4.45 0 1 0 8.9 0a4.45 4.45 0 1 0 -8.9 0M414.4 725.5a4.45 4.45 0 1 0 8.9 0a4.45 4.45 0 1 0 -8.9 0M423.2 725.5a4.45 4.45 0 1 0 8.9 0a4.45 4.45 0 1 0 -8.9 0M440.6 725.5a4.45 4.45 0 1 0 8.9 0a4.45 4.45 0 1 0 -8.9 0M466.8 725.5a4.45 4.45 0 1 0 8.9 0a4.45 4.45 0 1 0 -8.9 0M501.7 725.5a4.45 4.45 0 1 0 8.9 0a4.45 4.45 0 1 0 -8.9 0"/></defs><use href="#dots" fill="#000"/></svg>
<svg style="position:absolute;left:715.2px;top:569.3px" width="381" height="494" viewBox="0 0 558.5 725.5" preserveAspectRatio="none"><use href="#dots" fill="#000"/></svg>
<div style="left:-6.0px;top:157.0px;width:28.2px;height:29.5px;background:linear-gradient(#24518c,#1d3f6c);border:1px solid #17243a;border-radius:6px;box-sizing:border-box"></div>
<svg style="position:absolute;left:3.0px;top:164.0px;" width="16" height="16" viewBox="0 0 16 16"><path d="M3 1.5 L13.5 8 L8.8 9 L11.8 14 L9.8 15 L7 10 L3.5 13.5 Z" fill="none" stroke="#f2f2f2" stroke-width="1.6" stroke-linejoin="round"/></svg>
<svg style="position:absolute;left:3.0px;top:196.0px;" width="16" height="16" viewBox="0 0 16 16"><rect x="3" y="3" width="5" height="5" fill="none" stroke="#e8e8e8" stroke-width="1.5"/><path d="M1 15 Q2 5 14 2" fill="none" stroke="#bdbdbd" stroke-width="0.9"/><path d="M10 9 L15 12 L10 15 Z" fill="#e8e8e8"/></svg>
<svg style="position:absolute;left:3.0px;top:228.0px;" width="16" height="16" viewBox="0 0 16 16"><circle cx="6" cy="6" r="4.5" fill="none" stroke="#e8e8e8" stroke-width="1.6"/><rect x="6.5" y="6.5" width="8.5" height="8.5" fill="none" stroke="#e8e8e8" stroke-width="1.6"/></svg>
<svg style="position:absolute;left:3.0px;top:263.0px;" width="16" height="16" viewBox="0 0 16 16"><rect x="1.5" y="1.5" width="13" height="13" rx="1.5" fill="#ff1a8c" stroke="#f0f0f0" stroke-width="1.6"/></svg>
<svg style="position:absolute;left:3.0px;top:295.0px;" width="16" height="16" viewBox="0 0 16 16"><circle cx="8" cy="8" r="6.5" fill="#c0267a" stroke="#f0f0f0" stroke-width="1.6"/></svg>
<svg style="position:absolute;left:2.0px;top:326.0px;" width="17" height="17" viewBox="0 0 17 17"><path d="M1 6 L6 1.5 L11 5 L9 11 L3 11 Z" fill="#8e1f5a" stroke="#e8e8e8" stroke-width="1.3"/><path d="M11.5 6.5 L12.8 9.3 L15.8 9.5 L13.5 11.5 L14.3 14.5 L11.5 12.8 L8.7 14.5 L9.5 11.5 L7.2 9.5 L10.2 9.3 Z" fill="#8e1f5a" stroke="#e8e8e8" stroke-width="1"/></svg>
<svg style="position:absolute;left:2.0px;top:358.0px;" width="17" height="17" viewBox="0 0 17 17"><path d="M8 1 L15 4.5 V12 L8 15.5 L1 12 V4.5 Z" fill="#e8e8e8"/><path d="M8 2.8 L13 5.2 L8 7.7 L3 5.2 Z" fill="#6a2646"/><path d="M2.5 6.5 L7.2 9 V14 L2.5 11.5 Z" fill="#ff1a8c"/><path d="M13.5 6.5 L8.8 9 V14 L13.5 11.5 Z" fill="#f04fa0"/></svg>
<svg style="position:absolute;left:3.0px;top:392.0px;" width="16" height="16" viewBox="0 0 16 16"><path d="M8 8.5 Q9.5 8 9 6.5 Q8 5 6 6 Q4 7.5 5 10 Q6.5 12.5 10 11.5 Q13.5 10 13 6 Q12 2 7.5 2 Q2.5 2.5 2 7.5 Q2 12 5 14" fill="none" stroke="#e8e8e8" stroke-width="1.8"/></svg>
<div style="left:0.0px;top:253.0px;width:24.0px;height:1.0px;background:#2c2c2c"></div>
<div style="left:0.0px;top:417.0px;width:24.0px;height:1.0px;background:#2c2c2c"></div>
<svg style="position:absolute;left:3.0px;top:426.0px;" width="16" height="16" viewBox="0 0 16 16"><circle cx="2.5" cy="2.5" r="2" fill="#14a01e"/><rect x="0.5" y="8" width="4" height="4" fill="#14a01e"/><path d="M2.5 3 V9" stroke="#14a01e" stroke-width="1"/><path d="M4 3 Q9 0 12 3" fill="none" stroke="#e8e8e8" stroke-width="0.9"/><path d="M6 15 L8 9 L13 5 L16 8 L12 13 Z" fill="#333" stroke="#e8e8e8" stroke-width="1.5" stroke-linejoin="round"/><circle cx="11" cy="10" r="1" fill="#e8e8e8"/></svg>
<svg style="position:absolute;left:3.0px;top:457.0px;" width="16" height="16" viewBox="0 0 16 16"><path d="M1 2 Q4 0 5 2 Q6 4 3 6 Q1 8 4 9" fill="none" stroke="#14a01e" stroke-width="1.3"/><path d="M6 15 L4 15 L5 12 Z" fill="#14a01e"/><path d="M5.5 12.5 L13 5 L15.5 7.5 L8 15 L5 15.5 Z" fill="#e8e8e8"/></svg>
<svg style="position:absolute;left:3.0px;top:489.0px;" width="16" height="16" viewBox="0 0 16 16"><path d="M2 3 Q5 1 5 4 Q5 7 2 8 Q5 9 6 8" fill="none" stroke="#14a01e" stroke-width="1.3"/><path d="M1 15.5 L5 11 L6.5 12.5 Z" fill="#14a01e"/><path d="M6 11 L15 2.5 L16 3.5 L7.5 12.5 Z" fill="#e8e8e8"/></svg>
<svg style="position:absolute;left:3.0px;top:522.0px;" width="16" height="16" viewBox="0 0 16 16"><path d="M0.5 14.5 L5 2 H8 L12.5 14.5 H9.6 L8.6 11.5 H4.4 L3.4 14.5 Z M5.2 9 H7.8 L6.5 5 Z" fill="#e8e8e8" fill-rule="evenodd"/><rect x="14" y="1" width="1.8" height="14" fill="#14a01e"/></svg>
<div style="left:0.0px;top:545.0px;width:24.0px;height:1.0px;background:#2c2c2c"></div>
<svg style="position:absolute;left:3.0px;top:557.0px;" width="16" height="16" viewBox="0 0 16 16"><defs><linearGradient id="gg" x1="0" y1="0" x2="1" y2="1"><stop offset="0" stop-color="#1a7fd8"/><stop offset="1" stop-color="#e0f0ff"/></linearGradient></defs><rect x="1" y="1" width="14" height="14" fill="url(#gg)" stroke="#e8e8e8" stroke-width="1.5"/></svg>
<svg style="position:absolute;left:3.0px;top:589.0px;" width="16" height="16" viewBox="0 0 16 16"><rect x="1" y="1" width="14" height="14" fill="#1f4a6e" stroke="#e8e8e8" stroke-width="1.5"/><path d="M8 8 Q3 3 8 2 M8 8 Q13 13 8 14 M8 8 Q13 3 14 8 M8 8 Q3 13 2 8" fill="none" stroke="#6fc3ff" stroke-width="1.4"/></svg>
<svg style="position:absolute;left:3.0px;top:620.0px;" width="16" height="16" viewBox="0 0 16 16"><path d="M3 1 Q5 4 4.5 5.5 Q4 7 3 7 Q1.5 7 1.5 5.5 Q1.5 4 3 1 Z" fill="#2a9df4"/><path d="M14 2 L15 3 L12 6 L10 4 Z" fill="#e8e8e8"/><path d="M10.5 5 L4 11.5 L3 14.5 L6 13.5 L12.5 7" fill="none" stroke="#e8e8e8" stroke-width="1.5"/></svg>
<svg style="position:absolute;left:3.0px;top:652.0px;" width="16" height="16" viewBox="0 0 16 16"><path d="M3 10 Q5 13 4.5 14.5 Q4 16 3 16 Q1.5 16 1.5 14.5 Q1.5 13 3 10 Z" fill="#2a9df4"/><path d="M4 8 L9 3 L15 8 L10 13 Z" fill="#e8e8e8"/><path d="M9 3 L7 1" stroke="#e8e8e8" stroke-width="1.4"/><path d="M6 8 H13" stroke="#333" stroke-width="1"/></svg>
<div style="left:0.0px;top:678.0px;width:24.0px;height:1.0px;background:#2c2c2c"></div>
<svg style="position:absolute;left:3.0px;top:688.0px;" width="16" height="16" viewBox="0 0 16 16"><path d="M1 15 V10 Q4 9 8 5 Q11 1.5 13.5 3.5 Q15 5 13 6.5 Q11 8 15 9 V15 Z" fill="#e8e8e8"/></svg>
<svg style="position:absolute;left:3.0px;top:720.0px;" width="16" height="16" viewBox="0 0 16 16"><circle cx="2" cy="2" r="0.8" fill="#aaa"/><circle cx="4.5" cy="1.5" r="0.8" fill="#aaa"/><circle cx="2.5" cy="5" r="0.8" fill="#aaa"/><circle cx="5" cy="4.5" r="0.8" fill="#aaa"/><rect x="8" y="2" width="3" height="3" fill="#e8e8e8"/><path d="M5.5 6.5 H14 V15 H5.5 Z" fill="#e8e8e8"/></svg>
<svg style="position:absolute;left:3.0px;top:752.0px;" width="16" height="16" viewBox="0 0 16 16"><path d="M5 9 L11 3 L15 6 L9 12 Z" fill="#e8e8e8"/><path d="M2 11 L5 8 L9 11.5 L7 13 H3 Z" fill="#8a8a8a"/><rect x="1" y="14" width="3" height="1.5" fill="#e8e8e8"/><rect x="9" y="14" width="6" height="1.5" fill="#e8e8e8"/></svg>
<svg style="position:absolute;left:3.0px;top:784.0px;" width="16" height="16" viewBox="0 0 16 16"><path d="M1 4 Q3 2 5 4 Q7 7 9 11" fill="none" stroke="#e8e8e8" stroke-width="2"/><path d="M7 8 L15 11.5 L9.5 16 Z" fill="#e8e8e8"/></svg>
<svg style="position:absolute;left:3.0px;top:816.0px;" width="16" height="16" viewBox="0 0 16 16"><circle cx="8" cy="3" r="2.2" fill="none" stroke="#e8e8e8" stroke-width="1.3"/><path d="M7 5 L2 16 M9 5 L14 16 M3 11 H13" stroke="#e8e8e8" stroke-width="1.3"/></svg>
<div style="left:0.0px;top:841.0px;width:24.0px;height:1.0px;background:#2c2c2c"></div>
<svg style="position:absolute;left:3.0px;top:851.0px;" width="16" height="16" viewBox="0 0 16 16"><path d="M2 1 H10 L14 5 V15 H2 Z" fill="none" stroke="#e8e8e8" stroke-width="1.8"/><path d="M4 5 H8 M4 8 H10 M4 11 H8" stroke="#e8e8e8" stroke-width="1.3"/></svg>
<svg style="position:absolute;left:3.0px;top:884.0px;" width="16" height="16" viewBox="0 0 16 16"><circle cx="6.5" cy="6.5" r="5" fill="none" stroke="#e8e8e8" stroke-width="1.8"/><path d="M10 10 L15 15" stroke="#e8e8e8" stroke-width="2.4" stroke-linecap="round"/></svg>
<svg style="position:absolute;left:3.0px;top:915.0px;" width="16" height="16" viewBox="0 0 16 16"><rect x="1" y="5" width="9" height="10" fill="none" stroke="#e8e8e8" stroke-width="1.8"/><path d="M5 3.5 V1 H15 V11 H12" fill="none" stroke="#e8e8e8" stroke-width="1.8"/></svg>
<svg style="position:absolute;left:715.0px;top:569.0px;" width="382" height="496" viewBox="0 0 382 496"><rect x="0.5" y="0.5" width="380" height="494" fill="none" stroke="#d8d8d8" stroke-width="1"/><rect x="0.5" y="0.5" width="380" height="494" fill="none" stroke="#1c1cb4" stroke-width="1" stroke-dasharray="4 4"/></svg>
<svg style="position:absolute;left:700.1px;top:554.3px" width="15" height="15" viewBox="0 0 15 15" preserveAspectRatio="none"><path d="M1 1 H8.5 L6.5 3 L12 8.5 L14 6.5 V14 H6.5 L8.5 12 L3 6.5 L1 8.5 Z" fill="#000" stroke="#b8b8b8" stroke-width="1.2" stroke-linejoin="miter"/></svg>
<svg style="position:absolute;left:1096.1px;top:554.3px" width="15" height="15" viewBox="0 0 15 15" preserveAspectRatio="none"><path d="M14 1 H6.5 L8.5 3 L3 8.5 L1 6.5 V14 H8.5 L6.5 12 L12 6.5 L14 8.5 Z" fill="#000" stroke="#b8b8b8" stroke-width="1.2" stroke-linejoin="miter"/></svg>
<svg style="position:absolute;left:700.1px;top:1064.3px" width="15" height="15" viewBox="0 0 15 15" preserveAspectRatio="none"><path d="M14 1 H6.5 L8.5 3 L3 8.5 L1 6.5 V14 H8.5 L6.5 12 L12 6.5 L14 8.5 Z" fill="#000" stroke="#b8b8b8" stroke-width="1.2" stroke-linejoin="miter"/></svg>
<svg style="position:absolute;left:1096.1px;top:1064.3px" width="15" height="15" viewBox="0 0 15 15" preserveAspectRatio="none"><path d="M1 1 H8.5 L6.5 3 L12 8.5 L14 6.5 V14 H6.5 L8.5 12 L3 6.5 L1 8.5 Z" fill="#000" stroke="#b8b8b8" stroke-width="1.2" stroke-linejoin="miter"/></svg>
<svg style="position:absolute;left:898.9px;top:549.8px" width="14" height="18" viewBox="0 0 15 15" preserveAspectRatio="none"><path d="M7.5 0.5 L14 6.2 H10 V8.8 H14 L7.5 14.5 L1 8.8 H5 V6.2 H1 Z" fill="#000" stroke="#b8b8b8" stroke-width="1.2" stroke-linejoin="miter"/></svg>
<svg style="position:absolute;left:899.0px;top:1066.0px" width="14" height="18" viewBox="0 0 15 15" preserveAspectRatio="none"><path d="M7.5 0.5 L14 6.2 H10 V8.8 H14 L7.5 14.5 L1 8.8 H5 V6.2 H1 Z" fill="#000" stroke="#b8b8b8" stroke-width="1.2" stroke-linejoin="miter"/></svg>
<svg style="position:absolute;left:695.9px;top:810.0px" width="18" height="14" viewBox="0 0 15 15" preserveAspectRatio="none"><path d="M0.5 7.5 L6.2 1 V5 H8.8 V1 L14.5 7.5 L8.8 14 V10 H6.2 V14 Z" fill="#000" stroke="#b8b8b8" stroke-width="1.2" stroke-linejoin="miter"/></svg>
<svg style="position:absolute;left:1097.2px;top:810.0px" width="18" height="14" viewBox="0 0 15 15" preserveAspectRatio="none"><path d="M0.5 7.5 L6.2 1 V5 H8.8 V1 L14.5 7.5 L8.8 14 V10 H6.2 V14 Z" fill="#000" stroke="#b8b8b8" stroke-width="1.2" stroke-linejoin="miter"/></svg>
<svg style="position:absolute;left:1897.0px;top:160.0px;" width="16" height="14" viewBox="0 0 16 14"><rect x="1" y="1" width="14" height="9" rx="1" fill="none" stroke="#e8e8e8" stroke-width="1.4"/><path d="M8 10 V12 M4.5 12.5 H11.5" stroke="#e8e8e8" stroke-width="1.4"/></svg>
<svg style="position:absolute;left:36.0px;top:162.0px;" width="16" height="18" viewBox="0 0 16 18"><rect x="1" y="8" width="10" height="8" fill="#e8e8e8"/><path d="M7.8 8 V5.5 a3 3 0 0 1 6 0 V6.8" fill="none" stroke="#e8e8e8" stroke-width="1.8"/></svg>
<div style="left:0.0px;top:1443.0px;width:32.0px;height:33.0px;background:#ffffff"></div>
<svg style="position:absolute;left:0.0px;top:1443.0px;" width="32" height="33" viewBox="0 0 32 33"><path d="M2.5 4 L29.5 30 M29.5 4 L2.5 30" stroke="#c8102e" stroke-width="3" stroke-linecap="round"/></svg>
<div style="left:33.0px;top:1443.0px;width:33.0px;height:33.0px;background:#000000"></div>
<div style="left:67.0px;top:1443.0px;width:33.0px;height:33.0px;background:#808080"></div>
<div style="left:101.0px;top:1443.0px;width:33.0px;height:33.0px;background:#ffffff"></div>
<svg style="position:absolute;left:135.0px;top:1443.0px;" width="2356" height="33" viewBox="0 0 2356 33"><rect x="0.5" y="0.5" width="16" height="15" fill="#1a1a1a" stroke="#1a1a1a" stroke-width="1"/><rect x="1.5" y="1.5" width="14" height="13" fill="none" stroke="rgba(255,255,255,0.07)" stroke-width="1"/><rect x="0.5" y="17.5" width="16" height="15" fill="#55d400" stroke="#55d400" stroke-width="1"/><rect x="1.5" y="18.5" width="14" height="13" fill="none" stroke="rgba(255,255,255,0.07)" stroke-width="1"/><rect x="18.5" y="0.5" width="16" height="15" fill="#333333" stroke="#333333" stroke-width="1"/><rect x="19.5" y="1.5" width="14" height="13" fill="none" stroke="rgba(255,255,255,0.07)" stroke-width="1"/><rect x="18.5" y="17.5" width="16" height="15" fill="#66ff00" stroke="#66ff00" stroke-width="1"/><rect x="19.5" y="18.5" width="14" height="13" fill="none" stroke="rgba(255,255,255,0.07)" stroke-width="1"/><rect x="36.5" y="0.5" width="16" height="15" fill="#4d4d4d" stroke="#4d4d4d" stroke-width="1"/><rect x="37.5" y="1.5" width="14" height="13" fill="none" stroke="rgba(255,255,255,0.07)" stroke-width="1"/><rect x="36.5" y="17.5" width="16" height="15" fill="#7fff2a" stroke="#7fff2a" stroke-width="1"/><rect x="37.5" y="18.5" width="14" height="13" fill="none" stroke="rgba(255,255,255,0.07)" stroke-width="1"/><rect x="54.5" y="0.5" width="16" height="15" fill="#666666" stroke="#666666" stroke-width="1"/><rect x="55.5" y="1.5" width="14" height="13" fill="none" stroke="rgba(255,255,255,0.07)" stroke-width="1"/><rect x="54.5" y="17.5" width="16" height="15" fill="#99ff55" stroke="#99ff55" stroke-width="1"/><rect x="55.5" y="18.5" width="14" height="13" fill="none" stroke="rgba(255,255,255,0.07)" stroke-width="1"/><rect x="72.5" y="0.5" width="16" height="15" fill="#999999" stroke="#999999" stroke-width="1"/><rect x="73.5" y="1.5" width="14" height="13" fill="none" stroke="rgba(255,255,255,0.07)" stroke-width="1"/><rect x="72.5" y="17.5" width="16" height="15" fill="#b3ff80" stroke="#b3ff80" stroke-width="1"/><rect x="73.5" y="18.5" width="14" height="13" fill="none" stroke="rgba(255,255,255,0.07)" stroke-width="1"/><rect x="90.5" y="0.5" width="16" height="15" fill="#b3b3b3" stroke="#b3b3b3" stroke-width="1"/><rect x="91.5" y="1.5" width="14" height="13" fill="none" stroke="rgba(255,255,255,0.07)" stroke-width="1"/><rect x="90.5" y="17.5" width="16" height="15" fill="#ccffaa" stroke="#ccffaa" stroke-width="1"/><rect x="91.5" y="18.5" width="14" height="13" fill="none" stroke="rgba(255,255,255,0.07)" stroke-width="1"/><rect x="108.5" y="0.5" width="16" height="15" fill="#cccccc" stroke="#cccccc" stroke-width="1"/><rect x="109.5" y="1.5" width="14" height="13" fill="none" stroke="rgba(255,255,255,0.07)" stroke-width="1"/><rect x="108.5" y="17.5" width="16" height="15" fill="#e6ffd5" stroke="#e6ffd5" stroke-width="1"/><rect x="109.5" y="18.5" width="14" height="13" fill="none" stroke="rgba(255,255,255,0.07)" stroke-width="1"/><rect x="126.5" y="0.5" width="16" height="15" fill="#e6e6e6" stroke="#e6e6e6" stroke-width="1"/><rect x="127.5" y="1.5" width="14" height="13" fill="none" stroke="rgba(255,255,255,0.07)" stroke-width="1"/><rect x="126.5" y="17.5" width="16" height="15" fill="#17280b" stroke="#17280b" stroke-width="1"/><rect x="127.5" y="18.5" width="14" height="13" fill="none" stroke="rgba(255,255,255,0.07)" stroke-width="1"/><rect x="144.5" y="0.5" width="16" height="15" fill="#ececec" stroke="#ececec" stroke-width="1"/><rect x="145.5" y="1.5" width="14" height="13" fill="none" stroke="rgba(255,255,255,0.07)" stroke-width="1"/><rect x="144.5" y="17.5" width="16" height="15" fill="#2d5016" stroke="#2d5016" stroke-width="1"/><rect x="145.5" y="18.5" width="14" height="13" fill="none" stroke="rgba(255,255,255,0.07)" stroke-width="1"/><rect x="162.5" y="0.5" width="16" height="15" fill="#f2f2f2" stroke="#f2f2f2" stroke-width="1"/><rect x="163.5" y="1.5" width="14" height="13" fill="none" stroke="rgba(255,255,255,0.07)" stroke-width="1"/><rect x="162.5" y="17.5" width="16" height="15" fill="#447821" stroke="#447821" stroke-width="1"/><rect x="163.5" y="18.5" width="14" height="13" fill="none" stroke="rgba(255,255,255,0.07)" stroke-width="1"/><rect x="180.5" y="0.5" width="16" height="15" fill="#f9f9f9" stroke="#f9f9f9" stroke-width="1"/><rect x="181.5" y="1.5" width="14" height="13" fill="none" stroke="rgba(255,255,255,0.07)" stroke-width="1"/><rect x="180.5" y="17.5" width="16" height="15" fill="#5aa02c" stroke="#5aa02c" stroke-width="1"/><rect x="181.5" y="18.5" width="14" height="13" fill="none" stroke="rgba(255,255,255,0.07)" stroke-width="1"/><rect x="198.5" y="0.5" width="16" height="15" fill="#800000" stroke="#800000" stroke-width="1"/><rect x="199.5" y="1.5" width="14" height="13" fill="none" stroke="rgba(255,255,255,0.07)" stroke-width="1"/><rect x="198.5" y="17.5" width="16" height="15" fill="#71c837" stroke="#71c837" stroke-width="1"/><rect x="199.5" y="18.5" width="14" height="13" fill="none" stroke="rgba(255,255,255,0.07)" stroke-width="1"/><rect x="216.5" y="0.5" width="16" height="15" fill="#ff0000" stroke="#ff0000" stroke-width="1"/><rect x="217.5" y="1.5" width="14" height="13" fill="none" stroke="rgba(255,255,255,0.07)" stroke-width="1"/><rect x="216.5" y="17.5" width="16" height="15" fill="#8dd35f" stroke="#8dd35f" stroke-width="1"/><rect x="217.5" y="18.5" width="14" height="13" fill="none" stroke="rgba(255,255,255,0.07)" stroke-width="1"/><rect x="234.5" y="0.5" width="16" height="15" fill="#808000" stroke="#808000" stroke-width="1"/><rect x="235.5" y="1.5" width="14" height="13" fill="none" stroke="rgba(255,255,255,0.07)" stroke-width="1"/><rect x="234.5" y="17.5" width="16" height="15" fill="#aade87" stroke="#aade87" stroke-width="1"/><rect x="235.5" y="18.5" width="14" height="13" fill="none" stroke="rgba(255,255,255,0.07)" stroke-width="1"/><rect x="252.5" y="0.5" width="16" height="15" fill="#ffff00" stroke="#ffff00" stroke-width="1"/><rect x="253.5" y="1.5" width="14" height="13" fill="none" stroke="rgba(255,255,255,0.07)" stroke-width="1"/><rect x="252.5" y="17.5" width="16" height="15" fill="#c6e9af" stroke="#c6e9af" stroke-width="1"/><rect x="253.5" y="18.5" width="14" height="13" fill="none" stroke="rgba(255,255,255,0.07)" stroke-width="1"/><rect x="270.5" y="0.5" width="16" height="15" fill="#008000" stroke="#008000" stroke-width="1"/><rect x="271.5" y="1.5" width="14" height="13" fill="none" stroke="rgba(255,255,255,0.07)" stroke-width="1"/><rect x="270.5" y="17.5" width="16" height="15" fill="#e3f4d7" stroke="#e3f4d7" stroke-width="1"/><rect x="271.5" y="18.5" width="14" height="13" fill="none" stroke="rgba(255,255,255,0.07)" stroke-width="1"/><rect x="288.5" y="0.5" width="16" height="15" fill="#00ff00" stroke="#00ff00" stroke-width="1"/><rect x="289.5" y="1.5" width="14" height="13" fill="none" stroke="rgba(255,255,255,0.07)" stroke-width="1"/><rect x="288.5" y="17.5" width="16" height="15" fill="#1f241c" stroke="#1f241c" stroke-width="1"/><rect x="289.5" y="18.5" width="14" height="13" fill="none" stroke="rgba(255,255,255,0.07)" stroke-width="1"/><rect x="306.5" y="0.5" width="16" height="15" fill="#008080" stroke="#008080" stroke-width="1"/><rect x="307.5" y="1.5" width="14" height="13" fill="none" stroke="rgba(255,255,255,0.07)" stroke-width="1"/><rect x="306.5" y="17.5" width="16" height="15" fill="#3e4837" stroke="#3e4837" stroke-width="1"/><rect x="307.5" y="18.5" width="14" height="13" fill="none" stroke="rgba(255,255,255,0.07)" stroke-width="1"/><rect x="324.5" y="0.5" width="16" height="15" fill="#00ffff" stroke="#00ffff" stroke-width="1"/><rect x="325.5" y="1.5" width="14" height="13" fill="none" stroke="rgba(255,255,255,0.07)" stroke-width="1"/><rect x="324.5" y="17.5" width="16" height="15" fill="#5d6c53" stroke="#5d6c53" stroke-width="1"/><rect x="325.5" y="18.5" width="14" height="13" fill="none" stroke="rgba(255,255,255,0.07)" stroke-width="1"/><rect x="342.5" y="0.5" width="16" height="15" fill="#000080" stroke="#000080" stroke-width="1"/><rect x="343.5" y="1.5" width="14" height="13" fill="none" stroke="rgba(255,255,255,0.07)" stroke-width="1"/><rect x="342.5" y="17.5" width="16" height="15" fill="#7d916f" stroke="#7d916f" stroke-width="1"/><rect x="343.5" y="18.5" width="14" height="13" fill="none" stroke="rgba(255,255,255,0.07)" stroke-width="1"/><rect x="360.5" y="0.5" width="16" height="15" fill="#0000ff" stroke="#0000ff" stroke-width="1"/><rect x="361.5" y="1.5" width="14" height="13" fill="none" stroke="rgba(255,255,255,0.07)" stroke-width="1"/><rect x="360.5" y="17.5" width="16" height="15" fill="#9dac93" stroke="#9dac93" stroke-width="1"/><rect x="361.5" y="18.5" width="14" height="13" fill="none" stroke="rgba(255,255,255,0.07)" stroke-width="1"/><rect x="378.5" y="0.5" width="16" height="15" fill="#800080" stroke="#800080" stroke-width="1"/><rect x="379.5" y="1.5" width="14" height="13" fill="none" stroke="rgba(255,255,255,0.07)" stroke-width="1"/><rect x="378.5" y="17.5" width="16" height="15" fill="#bec8b7" stroke="#bec8b7" stroke-width="1"/><rect x="379.5" y="18.5" width="14" height="13" fill="none" stroke="rgba(255,255,255,0.07)" stroke-width="1"/><rect x="396.5" y="0.5" width="16" height="15" fill="#ff00ff" stroke="#ff00ff" stroke-width="1"/><rect x="397.5" y="1.5" width="14" height="13" fill="none" stroke="rgba(255,255,255,0.07)" stroke-width="1"/><rect x="396.5" y="17.5" width="16" height="15" fill="#dee3db" stroke="#dee3db" stroke-width="1"/><rect x="397.5" y="18.5" width="14" height="13" fill="none" stroke="rgba(255,255,255,0.07)" stroke-width="1"/><rect x="414.5" y="0.5" width="16" height="15" fill="#2b0000" stroke="#2b0000" stroke-width="1"/><rect x="415.5" y="1.5" width="14" height="13" fill="none" stroke="rgba(255,255,255,0.07)" stroke-width="1"/><rect x="414.5" y="17.5" width="16" height="15" fill="#002b00" stroke="#002b00" stroke-width="1"/><rect x="415.5" y="18.5" width="14" height="13" fill="none" stroke="rgba(255,255,255,0.07)" stroke-width="1"/><rect x="432.5" y="0.5" width="16" height="15" fill="#550000" stroke="#550000" stroke-width="1"/><rect x="433.5" y="1.5" width="14" height="13" fill="none" stroke="rgba(255,255,255,0.07)" stroke-width="1"/><rect x="432.5" y="17.5" width="16" height="15" fill="#005500" stroke="#005500" stroke-width="1"/><rect x="433.5" y="18.5" width="14" height="13" fill="none" stroke="rgba(255,255,255,0.07)" stroke-width="1"/><rect x="450.5" y="0.5" width="16" height="15" fill="#800000" stroke="#800000" stroke-width="1"/><rect x="451.5" y="1.5" width="14" height="13" fill="none" stroke="rgba(255,255,255,0.07)" stroke-width="1"/><rect x="450.5" y="17.5" width="16" height="15" fill="#008000" stroke="#008000" stroke-width="1"/><rect x="451.5" y="18.5" width="14" height="13" fill="none" stroke="rgba(255,255,255,0.07)" stroke-width="1"/><rect x="468.5" y="0.5" width="16" height="15" fill="#aa0000" stroke="#aa0000" stroke-width="1"/><rect x="469.5" y="1.5" width="14" height="13" fill="none" stroke="rgba(255,255,255,0.07)" stroke-width="1"/><rect x="468.5" y="17.5" width="16" height="15" fill="#00aa00" stroke="#00aa00" stroke-width="1"/><rect x="469.5" y="18.5" width="14" height="13" fill="none" stroke="rgba(255,255,255,0.07)" stroke-width="1"/><rect x="486.5" y="0.5" width="16" height="15" fill="#d40000" stroke="#d40000" stroke-width="1"/><rect x="487.5" y="1.5" width="14" height="13" fill="none" stroke="rgba(255,255,255,0.07)" stroke-width="1"/><rect x="486.5" y="17.5" width="16" height="15" fill="#00d400" stroke="#00d400" stroke-width="1"/><rect x="487.5" y="18.5" width="14" height="13" fill="none" stroke="rgba(255,255,255,0.07)" stroke-width="1"/><rect x="504.5" y="0.5" width="16" height="15" fill="#ff0000" stroke="#ff0000" stroke-width="1"/><rect x="505.5" y="1.5" width="14" height="13" fill="none" stroke="rgba(255,255,255,0.07)" stroke-width="1"/><rect x="504.5" y="17.5" width="16" height="15" fill="#00ff00" stroke="#00ff00" stroke-width="1"/><rect x="505.5" y="18.5" width="14" height="13" fill="none" stroke="rgba(255,255,255,0.07)" stroke-width="1"/><rect x="522.5" y="0.5" width="16" height="15" fill="#ff2a2a" stroke="#ff2a2a" stroke-width="1"/><rect x="523.5" y="1.5" width="14" height="13" fill="none" stroke="rgba(255,255,255,0.07)" stroke-width="1"/><rect x="522.5" y="17.5" width="16" height="15" fill="#2aff2a" stroke="#2aff2a" stroke-width="1"/><rect x="523.5" y="18.5" width="14" height="13" fill="none" stroke="rgba(255,255,255,0.07)" stroke-width="1"/><rect x="540.5" y="0.5" width="16" height="15" fill="#ff5555" stroke="#ff5555" stroke-width="1"/><rect x="541.5" y="1.5" width="14" height="13" fill="none" stroke="rgba(255,255,255,0.07)" stroke-width="1"/><rect x="540.5" y="17.5" width="16" height="15" fill="#55ff55" stroke="#55ff55" stroke-width="1"/><rect x="541.5" y="18.5" width="14" height="13" fill="none" stroke="rgba(255,255,255,0.07)" stroke-width="1"/><rect x="558.5" y="0.5" width="16" height="15" fill="#ff8080" stroke="#ff8080" stroke-width="1"/><rect x="559.5" y="1.5" width="14" height="13" fill="none" stroke="rgba(255,255,255,0.07)" stroke-width="1"/><rect x="558.5" y="17.5" width="16" height="15" fill="#80ff80" stroke="#80ff80" stroke-width="1"/><rect x="559.5" y="18.5" width="14" height="13" fill="none" stroke="rgba(255,255,255,0.07)" stroke-width="1"/><rect x="576.5" y="0.5" width="16" height="15" fill="#ffaaaa" stroke="#ffaaaa" stroke-width="1"/><rect x="577.5" y="1.5" width="14" height="13" fill="none" stroke="rgba(255,255,255,0.07)" stroke-width="1"/><rect x="576.5" y="17.5" width="16" height="15" fill="#aaffaa" stroke="#aaffaa" stroke-width="1"/><rect x="577.5" y="18.5" width="14" height="13" fill="none" stroke="rgba(255,255,255,0.07)" stroke-width="1"/><rect x="594.5" y="0.5" width="16" height="15" fill="#ffd5d5" stroke="#ffd5d5" stroke-width="1"/><rect x="595.5" y="1.5" width="14" height="13" fill="none" stroke="rgba(255,255,255,0.07)" stroke-width="1"/><rect x="594.5" y="17.5" width="16" height="15" fill="#d5ffd5" stroke="#d5ffd5" stroke-width="1"/><rect x="595.5" y="18.5" width="14" height="13" fill="none" stroke="rgba(255,255,255,0.07)" stroke-width="1"/><rect x="612.5" y="0.5" width="16" height="15" fill="#280b0b" stroke="#280b0b" stroke-width="1"/><rect x="613.5" y="1.5" width="14" height="13" fill="none" stroke="rgba(255,255,255,0.07)" stroke-width="1"/><rect x="612.5" y="17.5" width="16" height="15" fill="#0b280b" stroke="#0b280b" stroke-width="1"/><rect x="613.5" y="18.5" width="14" height="13" fill="none" stroke="rgba(255,255,255,0.07)" stroke-width="1"/><rect x="630.5" y="0.5" width="16" height="15" fill="#501616" stroke="#501616" stroke-width="1"/><rect x="631.5" y="1.5" width="14" height="13" fill="none" stroke="rgba(255,255,255,0.07)" stroke-width="1"/><rect x="630.5" y="17.5" width="16" height="15" fill="#165016" stroke="#165016" stroke-width="1"/><rect x="631.5" y="18.5" width="14" height="13" fill="none" stroke="rgba(255,255,255,0.07)" stroke-width="1"/><rect x="648.5" y="0.5" width="16" height="15" fill="#782121" stroke="#782121" stroke-width="1"/><rect x="649.5" y="1.5" width="14" height="13" fill="none" stroke="rgba(255,255,255,0.07)" stroke-width="1"/><rect x="648.5" y="17.5" width="16" height="15" fill="#217821" stroke="#217821" stroke-width="1"/><rect x="649.5" y="18.5" width="14" height="13" fill="none" stroke="rgba(255,255,255,0.07)" stroke-width="1"/><rect x="666.5" y="0.5" width="16" height="15" fill="#a02c2c" stroke="#a02c2c" stroke-width="1"/><rect x="667.5" y="1.5" width="14" height="13" fill="none" stroke="rgba(255,255,255,0.07)" stroke-width="1"/><rect x="666.5" y="17.5" width="16" height="15" fill="#2ca02c" stroke="#2ca02c" stroke-width="1"/><rect x="667.5" y="18.5" width="14" height="13" fill="none" stroke="rgba(255,255,255,0.07)" stroke-width="1"/><rect x="684.5" y="0.5" width="16" height="15" fill="#c83737" stroke="#c83737" stroke-width="1"/><rect x="685.5" y="1.5" width="14" height="13" fill="none" stroke="rgba(255,255,255,0.07)" stroke-width="1"/><rect x="684.5" y="17.5" width="16" height="15" fill="#37c837" stroke="#37c837" stroke-width="1"/><rect x="685.5" y="18.5" width="14" height="13" fill="none" stroke="rgba(255,255,255,0.07)" stroke-width="1"/><rect x="702.5" y="0.5" width="16" height="15" fill="#d35f5f" stroke="#d35f5f" stroke-width="1"/><rect x="703.5" y="1.5" width="14" height="13" fill="none" stroke="rgba(255,255,255,0.07)" stroke-width="1"/><rect x="702.5" y="17.5" width="16" height="15" fill="#5fd35f" stroke="#5fd35f" stroke-width="1"/><rect x="703.5" y="18.5" width="14" height="13" fill="none" stroke="rgba(255,255,255,0.07)" stroke-width="1"/><rect x="720.5" y="0.5" width="16" height="15" fill="#de8787" stroke="#de8787" stroke-width="1"/><rect x="721.5" y="1.5" width="14" height="13" fill="none" stroke="rgba(255,255,255,0.07)" stroke-width="1"/><rect x="720.5" y="17.5" width="16" height="15" fill="#87de87" stroke="#87de87" stroke-width="1"/><rect x="721.5" y="18.5" width="14" height="13" fill="none" stroke="rgba(255,255,255,0.07)" stroke-width="1"/><rect x="738.5" y="0.5" width="16" height="15" fill="#e9afaf" stroke="#e9afaf" stroke-width="1"/><rect x="739.5" y="1.5" width="14" height="13" fill="none" stroke="rgba(255,255,255,0.07)" stroke-width="1"/><rect x="738.5" y="17.5" width="16" height="15" fill="#afe9af" stroke="#afe9af" stroke-width="1"/><rect x="739.5" y="18.5" width="14" height="13" fill="none" stroke="rgba(255,255,255,0.07)" stroke-width="1"/><rect x="756.5" y="0.5" width="16" height="15" fill="#f4d7d7" stroke="#f4d7d7" stroke-width="1"/><rect x="757.5" y="1.5" width="14" height="13" fill="none" stroke="rgba(255,255,255,0.07)" stroke-width="1"/><rect x="756.5" y="17.5" width="16" height="15" fill="#d7f4d7" stroke="#d7f4d7" stroke-width="1"/><rect x="757.5" y="18.5" width="14" height="13" fill="none" stroke="rgba(255,255,255,0.07)" stroke-width="1"/><rect x="774.5" y="0.5" width="16" height="15" fill="#241c1c" stroke="#241c1c" stroke-width="1"/><rect x="775.5" y="1.5" width="14" height="13" fill="none" stroke="rgba(255,255,255,0.07)" stroke-width="1"/><rect x="774.5" y="17.5" width="16" height="15" fill="#1c241c" stroke="#1c241c" stroke-width="1"/><rect x="775.5" y="18.5" width="14" height="13" fill="none" stroke="rgba(255,255,255,0.07)" stroke-width="1"/><rect x="792.5" y="0.5" width="16" height="15" fill="#483737" stroke="#483737" stroke-width="1"/><rect x="793.5" y="1.5" width="14" height="13" fill="none" stroke="rgba(255,255,255,0.07)" stroke-width="1"/><rect x="792.5" y="17.5" width="16" height="15" fill="#374837" stroke="#374837" stroke-width="1"/><rect x="793.5" y="18.5" width="14" height="13" fill="none" stroke="rgba(255,255,255,0.07)" stroke-width="1"/><rect x="810.5" y="0.5" width="16" height="15" fill="#6c5353" stroke="#6c5353" stroke-width="1"/><rect x="811.5" y="1.5" width="14" height="13" fill="none" stroke="rgba(255,255,255,0.07)" stroke-width="1"/><rect x="810.5" y="17.5" width="16" height="15" fill="#536c53" stroke="#536c53" stroke-width="1"/><rect x="811.5" y="18.5" width="14" height="13" fill="none" stroke="rgba(255,255,255,0.07)" stroke-width="1"/><rect x="828.5" y="0.5" width="16" height="15" fill="#916f6f" stroke="#916f6f" stroke-width="1"/><rect x="829.5" y="1.5" width="14" height="13" fill="none" stroke="rgba(255,255,255,0.07)" stroke-width="1"/><rect x="828.5" y="17.5" width="16" height="15" fill="#6f916f" stroke="#6f916f" stroke-width="1"/><rect x="829.5" y="18.5" width="14" height="13" fill="none" stroke="rgba(255,255,255,0.07)" stroke-width="1"/><rect x="846.5" y="0.5" width="16" height="15" fill="#ac9393" stroke="#ac9393" stroke-width="1"/><rect x="847.5" y="1.5" width="14" height="13" fill="none" stroke="rgba(255,255,255,0.07)" stroke-width="1"/><rect x="846.5" y="17.5" width="16" height="15" fill="#93ac93" stroke="#93ac93" stroke-width="1"/><rect x="847.5" y="18.5" width="14" height="13" fill="none" stroke="rgba(255,255,255,0.07)" stroke-width="1"/><rect x="864.5" y="0.5" width="16" height="15" fill="#c8b7b7" stroke="#c8b7b7" stroke-width="1"/><rect x="865.5" y="1.5" width="14" height="13" fill="none" stroke="rgba(255,255,255,0.07)" stroke-width="1"/><rect x="864.5" y="17.5" width="16" height="15" fill="#b7c8b7" stroke="#b7c8b7" stroke-width="1"/><rect x="865.5" y="18.5" width="14" height="13" fill="none" stroke="rgba(255,255,255,0.07)" stroke-width="1"/><rect x="882.5" y="0.5" width="16" height="15" fill="#e3dbdb" stroke="#e3dbdb" stroke-width="1"/><rect x="883.5" y="1.5" width="14" height="13" fill="none" stroke="rgba(255,255,255,0.07)" stroke-width="1"/><rect x="882.5" y="17.5" width="16" height="15" fill="#dbe3db" stroke="#dbe3db" stroke-width="1"/><rect x="883.5" y="18.5" width="14" height="13" fill="none" stroke="rgba(255,255,255,0.07)" stroke-width="1"/><rect x="900.5" y="0.5" width="16" height="15" fill="#2b1100" stroke="#2b1100" stroke-width="1"/><rect x="901.5" y="1.5" width="14" height="13" fill="none" stroke="rgba(255,255,255,0.07)" stroke-width="1"/><rect x="900.5" y="17.5" width="16" height="15" fill="#002b11" stroke="#002b11" stroke-width="1"/><rect x="901.5" y="18.5" width="14" height="13" fill="none" stroke="rgba(255,255,255,0.07)" stroke-width="1"/><rect x="918.5" y="0.5" width="16" height="15" fill="#552200" stroke="#552200" stroke-width="1"/><rect x="919.5" y="1.5" width="14" height="13" fill="none" stroke="rgba(255,255,255,0.07)" stroke-width="1"/><rect x="918.5" y="17.5" width="16" height="15" fill="#005522" stroke="#005522" stroke-width="1"/><rect x="919.5" y="18.5" width="14" height="13" fill="none" stroke="rgba(255,255,255,0.07)" stroke-width="1"/><rect x="936.5" y="0.5" width="16" height="15" fill="#803300" stroke="#803300" stroke-width="1"/><rect x="937.5" y="1.5" width="14" height="13" fill="none" stroke="rgba(255,255,255,0.07)" stroke-width="1"/><rect x="936.5" y="17.5" width="16" height="15" fill="#008033" stroke="#008033" stroke-width="1"/><rect x="937.5" y="18.5" width="14" height="13" fill="none" stroke="rgba(255,255,255,0.07)" stroke-width="1"/><rect x="954.5" y="0.5" width="16" height="15" fill="#aa4400" stroke="#aa4400" stroke-width="1"/><rect x="955.5" y="1.5" width="14" height="13" fill="none" stroke="rgba(255,255,255,0.07)" stroke-width="1"/><rect x="954.5" y="17.5" width="16" height="15" fill="#00aa44" stroke="#00aa44" stroke-width="1"/><rect x="955.5" y="18.5" width="14" height="13" fill="none" stroke="rgba(255,255,255,0.07)" stroke-width="1"/><rect x="972.5" y="0.5" width="16" height="15" fill="#d45500" stroke="#d45500" stroke-width="1"/><rect x="973.5" y="1.5" width="14" height="13" fill="none" stroke="rgba(255,255,255,0.07)" stroke-width="1"/><rect x="972.5" y="17.5" width="16" height="15" fill="#00d455" stroke="#00d455" stroke-width="1"/><rect x="973.5" y="18.5" width="14" height="13" fill="none" stroke="rgba(255,255,255,0.07)" stroke-width="1"/><rect x="990.5" y="0.5" width="16" height="15" fill="#ff6600" stroke="#ff6600" stroke-width="1"/><rect x="991.5" y="1.5" width="14" height="13" fill="none" stroke="rgba(255,255,255,0.07)" stroke-width="1"/><rect x="990.5" y="17.5" width="16" height="15" fill="#00ff66" stroke="#00ff66" stroke-width="1"/><rect x="991.5" y="18.5" width="14" height="13" fill="none" stroke="rgba(255,255,255,0.07)" stroke-width="1"/><rect x="1008.5" y="0.5" width="16" height="15" fill="#ff7f2a" stroke="#ff7f2a" stroke-width="1"/><rect x="1009.5" y="1.5" width="14" height="13" fill="none" stroke="rgba(255,255,255,0.07)" stroke-width="1"/><rect x="1008.5" y="17.5" width="16" height="15" fill="#2aff7f" stroke="#2aff7f" stroke-width="1"/><rect x="1009.5" y="18.5" width="14" height="13" fill="none" stroke="rgba(255,255,255,0.07)" stroke-width="1"/><rect x="1026.5" y="0.5" width="16" height="15" fill="#ff9955" stroke="#ff9955" stroke-width="1"/><rect x="1027.5" y="1.5" width="14" height="13" fill="none" stroke="rgba(255,255,255,0.07)" stroke-width="1"/><rect x="1026.5" y="17.5" width="16" height="15" fill="#55ff99" stroke="#55ff99" stroke-width="1"/><rect x="1027.5" y="18.5" width="14" height="13" fill="none" stroke="rgba(255,255,255,0.07)" stroke-width="1"/><rect x="1044.5" y="0.5" width="16" height="15" fill="#ffb380" stroke="#ffb380" stroke-width="1"/><rect x="1045.5" y="1.5" width="14" height="13" fill="none" stroke="rgba(255,255,255,0.07)" stroke-width="1"/><rect x="1044.5" y="17.5" width="16" height="15" fill="#80ffb3" stroke="#80ffb3" stroke-width="1"/><rect x="1045.5" y="18.5" width="14" height="13" fill="none" stroke="rgba(255,255,255,0.07)" stroke-width="1"/><rect x="1062.5" y="0.5" width="16" height="15" fill="#ffccaa" stroke="#ffccaa" stroke-width="1"/><rect x="1063.5" y="1.5" width="14" height="13" fill="none" stroke="rgba(255,255,255,0.07)" stroke-width="1"/><rect x="1062.5" y="17.5" width="16" height="15" fill="#aaffcc" stroke="#aaffcc" stroke-width="1"/><rect x="1063.5" y="18.5" width="14" height="13" fill="none" stroke="rgba(255,255,255,0.07)" stroke-width="1"/><rect x="1080.5" y="0.5" width="16" height="15" fill="#ffe6d5" stroke="#ffe6d5" stroke-width="1"/><rect x="1081.5" y="1.5" width="14" height="13" fill="none" stroke="rgba(255,255,255,0.07)" stroke-width="1"/><rect x="1080.5" y="17.5" width="16" height="15" fill="#d5ffe6" stroke="#d5ffe6" stroke-width="1"/><rect x="1081.5" y="18.5" width="14" height="13" fill="none" stroke="rgba(255,255,255,0.07)" stroke-width="1"/><rect x="1098.5" y="0.5" width="16" height="15" fill="#28170b" stroke="#28170b" stroke-width="1"/><rect x="1099.5" y="1.5" width="14" height="13" fill="none" stroke="rgba(255,255,255,0.07)" stroke-width="1"/><rect x="1098.5" y="17.5" width="16" height="15" fill="#0b2817" stroke="#0b2817" stroke-width="1"/><rect x="1099.5" y="18.5" width="14" height="13" fill="none" stroke="rgba(255,255,255,0.07)" stroke-width="1"/><rect x="1116.5" y="0.5" width="15" height="15" fill="#502d16" stroke="#502d16" stroke-width="1"/><rect x="1117.5" y="1.5" width="13" height="13" fill="none" stroke="rgba(255,255,255,0.07)" stroke-width="1"/><rect x="1116.5" y="17.5" width="15" height="15" fill="#16502d" stroke="#16502d" stroke-width="1"/><rect x="1117.5" y="18.5" width="13" height="13" fill="none" stroke="rgba(255,255,255,0.07)" stroke-width="1"/><rect x="1133.5" y="0.5" width="15" height="15" fill="#784421" stroke="#784421" stroke-width="1"/><rect x="1134.5" y="1.5" width="13" height="13" fill="none" stroke="rgba(255,255,255,0.07)" stroke-width="1"/><rect x="1133.5" y="17.5" width="15" height="15" fill="#217844" stroke="#217844" stroke-width="1"/><rect x="1134.5" y="18.5" width="13" height="13" fill="none" stroke="rgba(255,255,255,0.07)" stroke-width="1"/><rect x="1150.5" y="0.5" width="15" height="15" fill="#a05a2c" stroke="#a05a2c" stroke-width="1"/><rect x="1151.5" y="1.5" width="13" height="13" fill="none" stroke="rgba(255,255,255,0.07)" stroke-width="1"/><rect x="1150.5" y="17.5" width="15" height="15" fill="#2ca05a" stroke="#2ca05a" stroke-width="1"/><rect x="1151.5" y="18.5" width="13" height="13" fill="none" stroke="rgba(255,255,255,0.07)" stroke-width="1"/><rect x="1167.5" y="0.5" width="15" height="15" fill="#c87137" stroke="#c87137" stroke-width="1"/><rect x="1168.5" y="1.5" width="13" height="13" fill="none" stroke="rgba(255,255,255,0.07)" stroke-width="1"/><rect x="1167.5" y="17.5" width="15" height="15" fill="#37c871" stroke="#37c871" stroke-width="1"/><rect x="1168.5" y="18.5" width="13" height="13" fill="none" stroke="rgba(255,255,255,0.07)" stroke-width="1"/><rect x="1184.5" y="0.5" width="15" height="15" fill="#d38d5f" stroke="#d38d5f" stroke-width="1"/><rect x="1185.5" y="1.5" width="13" height="13" fill="none" stroke="rgba(255,255,255,0.07)" stroke-width="1"/><rect x="1184.5" y="17.5" width="15" height="15" fill="#5fd38d" stroke="#5fd38d" stroke-width="1"/><rect x="1185.5" y="18.5" width="13" height="13" fill="none" stroke="rgba(255,255,255,0.07)" stroke-width="1"/><rect x="1201.5" y="0.5" width="15" height="15" fill="#deaa87" stroke="#deaa87" stroke-width="1"/><rect x="1202.5" y="1.5" width="13" height="13" fill="none" stroke="rgba(255,255,255,0.07)" stroke-width="1"/><rect x="1201.5" y="17.5" width="15" height="15" fill="#87deaa" stroke="#87deaa" stroke-width="1"/><rect x="1202.5" y="18.5" width="13" height="13" fill="none" stroke="rgba(255,255,255,0.07)" stroke-width="1"/><rect x="1218.5" y="0.5" width="15" height="15" fill="#e9c6af" stroke="#e9c6af" stroke-width="1"/><rect x="1219.5" y="1.5" width="13" height="13" fill="none" stroke="rgba(255,255,255,0.07)" stroke-width="1"/><rect x="1218.5" y="17.5" width="15" height="15" fill="#afe9c6" stroke="#afe9c6" stroke-width="1"/><rect x="1219.5" y="18.5" width="13" height="13" fill="none" stroke="rgba(255,255,255,0.07)" stroke-width="1"/><rect x="1235.5" y="0.5" width="15" height="15" fill="#f4e3d7" stroke="#f4e3d7" stroke-width="1"/><rect x="1236.5" y="1.5" width="13" height="13" fill="none" stroke="rgba(255,255,255,0.07)" stroke-width="1"/><rect x="1235.5" y="17.5" width="15" height="15" fill="#d7f4e3" stroke="#d7f4e3" stroke-width="1"/><rect x="1236.5" y="18.5" width="13" height="13" fill="none" stroke="rgba(255,255,255,0.07)" stroke-width="1"/><rect x="1252.5" y="0.5" width="15" height="15" fill="#241f1c" stroke="#241f1c" stroke-width="1"/><rect x="1253.5" y="1.5" width="13" height="13" fill="none" stroke="rgba(255,255,255,0.07)" stroke-width="1"/><rect x="1252.5" y="17.5" width="15" height="15" fill="#1c241f" stroke="#1c241f" stroke-width="1"/><rect x="1253.5" y="18.5" width="13" height="13" fill="none" stroke="rgba(255,255,255,0.07)" stroke-width="1"/><rect x="1269.5" y="0.5" width="15" height="15" fill="#483e37" stroke="#483e37" stroke-width="1"/><rect x="1270.5" y="1.5" width="13" height="13" fill="none" stroke="rgba(255,255,255,0.07)" stroke-width="1"/><rect x="1269.5" y="17.5" width="15" height="15" fill="#37483e" stroke="#37483e" stroke-width="1"/><rect x="1270.5" y="18.5" width="13" height="13" fill="none" stroke="rgba(255,255,255,0.07)" stroke-width="1"/><rect x="1286.5" y="0.5" width="15" height="15" fill="#6c5d53" stroke="#6c5d53" stroke-width="1"/><rect x="1287.5" y="1.5" width="13" height="13" fill="none" stroke="rgba(255,255,255,0.07)" stroke-width="1"/><rect x="1286.5" y="17.5" width="15" height="15" fill="#536c5d" stroke="#536c5d" stroke-width="1"/><rect x="1287.5" y="18.5" width="13" height="13" fill="none" stroke="rgba(255,255,255,0.07)" stroke-width="1"/><rect x="1303.5" y="0.5" width="15" height="15" fill="#917d6f" stroke="#917d6f" stroke-width="1"/><rect x="1304.5" y="1.5" width="13" height="13" fill="none" stroke="rgba(255,255,255,0.07)" stroke-width="1"/><rect x="1303.5" y="17.5" width="15" height="15" fill="#6f917d" stroke="#6f917d" stroke-width="1"/><rect x="1304.5" y="18.5" width="13" height="13" fill="none" stroke="rgba(255,255,255,0.07)" stroke-width="1"/><rect x="1320.5" y="0.5" width="15" height="15" fill="#ac9d93" stroke="#ac9d93" stroke-width="1"/><rect x="1321.5" y="1.5" width="13" height="13" fill="none" stroke="rgba(255,255,255,0.07)" stroke-width="1"/><rect x="1320.5" y="17.5" width="15" height="15" fill="#93ac9d" stroke="#93ac9d" stroke-width="1"/><rect x="1321.5" y="18.5" width="13" height="13" fill="none" stroke="rgba(255,255,255,0.07)" stroke-width="1"/><rect x="1337.5" y="0.5" width="15" height="15" fill="#c8beb7" stroke="#c8beb7" stroke-width="1"/><rect x="1338.5" y="1.5" width="13" height="13" fill="none" stroke="rgba(255,255,255,0.07)" stroke-width="1"/><rect x="1337.5" y="17.5" width="15" height="15" fill="#b7c8be" stroke="#b7c8be" stroke-width="1"/><rect x="1338.5" y="18.5" width="13" height="13" fill="none" stroke="rgba(255,255,255,0.07)" stroke-width="1"/><rect x="1354.5" y="0.5" width="15" height="15" fill="#e3dedb" stroke="#e3dedb" stroke-width="1"/><rect x="1355.5" y="1.5" width="13" height="13" fill="none" stroke="rgba(255,255,255,0.07)" stroke-width="1"/><rect x="1354.5" y="17.5" width="15" height="15" fill="#dbe3de" stroke="#dbe3de" stroke-width="1"/><rect x="1355.5" y="18.5" width="13" height="13" fill="none" stroke="rgba(255,255,255,0.07)" stroke-width="1"/><rect x="1371.5" y="0.5" width="15" height="15" fill="#2b2200" stroke="#2b2200" stroke-width="1"/><rect x="1372.5" y="1.5" width="13" height="13" fill="none" stroke="rgba(255,255,255,0.07)" stroke-width="1"/><rect x="1371.5" y="17.5" width="15" height="15" fill="#002b22" stroke="#002b22" stroke-width="1"/><rect x="1372.5" y="18.5" width="13" height="13" fill="none" stroke="rgba(255,255,255,0.07)" stroke-width="1"/><rect x="1388.5" y="0.5" width="15" height="15" fill="#554400" stroke="#554400" stroke-width="1"/><rect x="1389.5" y="1.5" width="13" height="13" fill="none" stroke="rgba(255,255,255,0.07)" stroke-width="1"/><rect x="1388.5" y="17.5" width="15" height="15" fill="#005544" stroke="#005544" stroke-width="1"/><rect x="1389.5" y="18.5" width="13" height="13" fill="none" stroke="rgba(255,255,255,0.07)" stroke-width="1"/><rect x="1405.5" y="0.5" width="15" height="15" fill="#806600" stroke="#806600" stroke-width="1"/><rect x="1406.5" y="1.5" width="13" height="13" fill="none" stroke="rgba(255,255,255,0.07)" stroke-width="1"/><rect x="1405.5" y="17.5" width="15" height="15" fill="#008066" stroke="#008066" stroke-width="1"/><rect x="1406.5" y="18.5" width="13" height="13" fill="none" stroke="rgba(255,255,255,0.07)" stroke-width="1"/><rect x="1422.5" y="0.5" width="15" height="15" fill="#aa8800" stroke="#aa8800" stroke-width="1"/><rect x="1423.5" y="1.5" width="13" height="13" fill="none" stroke="rgba(255,255,255,0.07)" stroke-width="1"/><rect x="1422.5" y="17.5" width="15" height="15" fill="#00aa88" stroke="#00aa88" stroke-width="1"/><rect x="1423.5" y="18.5" width="13" height="13" fill="none" stroke="rgba(255,255,255,0.07)" stroke-width="1"/><rect x="1439.5" y="0.5" width="15" height="15" fill="#d4aa00" stroke="#d4aa00" stroke-width="1"/><rect x="1440.5" y="1.5" width="13" height="13" fill="none" stroke="rgba(255,255,255,0.07)" stroke-width="1"/><rect x="1439.5" y="17.5" width="15" height="15" fill="#00d4aa" stroke="#00d4aa" stroke-width="1"/><rect x="1440.5" y="18.5" width="13" height="13" fill="none" stroke="rgba(255,255,255,0.07)" stroke-width="1"/><rect x="1456.5" y="0.5" width="15" height="15" fill="#ffcc00" stroke="#ffcc00" stroke-width="1"/><rect x="1457.5" y="1.5" width="13" height="13" fill="none" stroke="rgba(255,255,255,0.07)" stroke-width="1"/><rect x="1456.5" y="17.5" width="15" height="15" fill="#00ffcc" stroke="#00ffcc" stroke-width="1"/><rect x="1457.5" y="18.5" width="13" height="13" fill="none" stroke="rgba(255,255,255,0.07)" stroke-width="1"/><rect x="1473.5" y="0.5" width="15" height="15" fill="#ffd42a" stroke="#ffd42a" stroke-width="1"/><rect x="1474.5" y="1.5" width="13" height="13" fill="none" stroke="rgba(255,255,255,0.07)" stroke-width="1"/><rect x="1473.5" y="17.5" width="15" height="15" fill="#2affd4" stroke="#2affd4" stroke-width="1"/><rect x="1474.5" y="18.5" width="13" height="13" fill="none" stroke="rgba(255,255,255,0.07)" stroke-width="1"/><rect x="1490.5" y="0.5" width="15" height="15" fill="#ffdd55" stroke="#ffdd55" stroke-width="1"/><rect x="1491.5" y="1.5" width="13" height="13" fill="none" stroke="rgba(255,255,255,0.07)" stroke-width="1"/><rect x="1490.5" y="17.5" width="15" height="15" fill="#55ffdd" stroke="#55ffdd" stroke-width="1"/><rect x="1491.5" y="18.5" width="13" height="13" fill="none" stroke="rgba(255,255,255,0.07)" stroke-width="1"/><rect x="1507.5" y="0.5" width="15" height="15" fill="#ffe680" stroke="#ffe680" stroke-width="1"/><rect x="1508.5" y="1.5" width="13" height="13" fill="none" stroke="rgba(255,255,255,0.07)" stroke-width="1"/><rect x="1507.5" y="17.5" width="15" height="15" fill="#80ffe6" stroke="#80ffe6" stroke-width="1"/><rect x="1508.5" y="18.5" width="13" height="13" fill="none" stroke="rgba(255,255,255,0.07)" stroke-width="1"/><rect x="1524.5" y="0.5" width="15" height="15" fill="#ffeeaa" stroke="#ffeeaa" stroke-width="1"/><rect x="1525.5" y="1.5" width="13" height="13" fill="none" stroke="rgba(255,255,255,0.07)" stroke-width="1"/><rect x="1524.5" y="17.5" width="15" height="15" fill="#aaffee" stroke="#aaffee" stroke-width="1"/><rect x="1525.5" y="18.5" width="13" height="13" fill="none" stroke="rgba(255,255,255,0.07)" stroke-width="1"/><rect x="1541.5" y="0.5" width="15" height="15" fill="#fff7d5" stroke="#fff7d5" stroke-width="1"/><rect x="1542.5" y="1.5" width="13" height="13" fill="none" stroke="rgba(255,255,255,0.07)" stroke-width="1"/><rect x="1541.5" y="17.5" width="15" height="15" fill="#d5fff7" stroke="#d5fff7" stroke-width="1"/><rect x="1542.5" y="18.5" width="13" height="13" fill="none" stroke="rgba(255,255,255,0.07)" stroke-width="1"/><rect x="1558.5" y="0.5" width="15" height="15" fill="#28220b" stroke="#28220b" stroke-width="1"/><rect x="1559.5" y="1.5" width="13" height="13" fill="none" stroke="rgba(255,255,255,0.07)" stroke-width="1"/><rect x="1558.5" y="17.5" width="15" height="15" fill="#0b2822" stroke="#0b2822" stroke-width="1"/><rect x="1559.5" y="18.5" width="13" height="13" fill="none" stroke="rgba(255,255,255,0.07)" stroke-width="1"/><rect x="1575.5" y="0.5" width="15" height="15" fill="#504416" stroke="#504416" stroke-width="1"/><rect x="1576.5" y="1.5" width="13" height="13" fill="none" stroke="rgba(255,255,255,0.07)" stroke-width="1"/><rect x="1575.5" y="17.5" width="15" height="15" fill="#165044" stroke="#165044" stroke-width="1"/><rect x="1576.5" y="18.5" width="13" height="13" fill="none" stroke="rgba(255,255,255,0.07)" stroke-width="1"/><rect x="1592.5" y="0.5" width="15" height="15" fill="#786721" stroke="#786721" stroke-width="1"/><rect x="1593.5" y="1.5" width="13" height="13" fill="none" stroke="rgba(255,255,255,0.07)" stroke-width="1"/><rect x="1592.5" y="17.5" width="15" height="15" fill="#217867" stroke="#217867" stroke-width="1"/><rect x="1593.5" y="18.5" width="13" height="13" fill="none" stroke="rgba(255,255,255,0.07)" stroke-width="1"/><rect x="1609.5" y="0.5" width="15" height="15" fill="#a0892c" stroke="#a0892c" stroke-width="1"/><rect x="1610.5" y="1.5" width="13" height="13" fill="none" stroke="rgba(255,255,255,0.07)" stroke-width="1"/><rect x="1609.5" y="17.5" width="15" height="15" fill="#2ca089" stroke="#2ca089" stroke-width="1"/><rect x="1610.5" y="18.5" width="13" height="13" fill="none" stroke="rgba(255,255,255,0.07)" stroke-width="1"/><rect x="1626.5" y="0.5" width="15" height="15" fill="#c8ab37" stroke="#c8ab37" stroke-width="1"/><rect x="1627.5" y="1.5" width="13" height="13" fill="none" stroke="rgba(255,255,255,0.07)" stroke-width="1"/><rect x="1626.5" y="17.5" width="15" height="15" fill="#37c8ab" stroke="#37c8ab" stroke-width="1"/><rect x="1627.5" y="18.5" width="13" height="13" fill="none" stroke="rgba(255,255,255,0.07)" stroke-width="1"/><rect x="1643.5" y="0.5" width="15" height="15" fill="#d3bc5f" stroke="#d3bc5f" stroke-width="1"/><rect x="1644.5" y="1.5" width="13" height="13" fill="none" stroke="rgba(255,255,255,0.07)" stroke-width="1"/><rect x="1643.5" y="17.5" width="15" height="15" fill="#5fd3bc" stroke="#5fd3bc" stroke-width="1"/><rect x="1644.5" y="18.5" width="13" height="13" fill="none" stroke="rgba(255,255,255,0.07)" stroke-width="1"/><rect x="1660.5" y="0.5" width="15" height="15" fill="#decd87" stroke="#decd87" stroke-width="1"/><rect x="1661.5" y="1.5" width="13" height="13" fill="none" stroke="rgba(255,255,255,0.07)" stroke-width="1"/><rect x="1660.5" y="17.5" width="15" height="15" fill="#87decd" stroke="#87decd" stroke-width="1"/><rect x="1661.5" y="18.5" width="13" height="13" fill="none" stroke="rgba(255,255,255,0.07)" stroke-width="1"/><rect x="1677.5" y="0.5" width="15" height="15" fill="#e9ddaf" stroke="#e9ddaf" stroke-width="1"/><rect x="1678.5" y="1.5" width="13" height="13" fill="none" stroke="rgba(255,255,255,0.07)" stroke-width="1"/><rect x="1677.5" y="17.5" width="15" height="15" fill="#afe9dd" stroke="#afe9dd" stroke-width="1"/><rect x="1678.5" y="18.5" width="13" height="13" fill="none" stroke="rgba(255,255,255,0.07)" stroke-width="1"/><rect x="1694.5" y="0.5" width="15" height="15" fill="#f4eed7" stroke="#f4eed7" stroke-width="1"/><rect x="1695.5" y="1.5" width="13" height="13" fill="none" stroke="rgba(255,255,255,0.07)" stroke-width="1"/><rect x="1694.5" y="17.5" width="15" height="15" fill="#d7f4ee" stroke="#d7f4ee" stroke-width="1"/><rect x="1695.5" y="18.5" width="13" height="13" fill="none" stroke="rgba(255,255,255,0.07)" stroke-width="1"/><rect x="1711.5" y="0.5" width="15" height="15" fill="#24221c" stroke="#24221c" stroke-width="1"/><rect x="1712.5" y="1.5" width="13" height="13" fill="none" stroke="rgba(255,255,255,0.07)" stroke-width="1"/><rect x="1711.5" y="17.5" width="15" height="15" fill="#1c2422" stroke="#1c2422" stroke-width="1"/><rect x="1712.5" y="18.5" width="13" height="13" fill="none" stroke="rgba(255,255,255,0.07)" stroke-width="1"/><rect x="1728.5" y="0.5" width="15" height="15" fill="#484537" stroke="#484537" stroke-width="1"/><rect x="1729.5" y="1.5" width="13" height="13" fill="none" stroke="rgba(255,255,255,0.07)" stroke-width="1"/><rect x="1728.5" y="17.5" width="15" height="15" fill="#374845" stroke="#374845" stroke-width="1"/><rect x="1729.5" y="18.5" width="13" height="13" fill="none" stroke="rgba(255,255,255,0.07)" stroke-width="1"/><rect x="1745.5" y="0.5" width="15" height="15" fill="#6c6753" stroke="#6c6753" stroke-width="1"/><rect x="1746.5" y="1.5" width="13" height="13" fill="none" stroke="rgba(255,255,255,0.07)" stroke-width="1"/><rect x="1745.5" y="17.5" width="15" height="15" fill="#536c67" stroke="#536c67" stroke-width="1"/><rect x="1746.5" y="18.5" width="13" height="13" fill="none" stroke="rgba(255,255,255,0.07)" stroke-width="1"/><rect x="1762.5" y="0.5" width="15" height="15" fill="#918a6f" stroke="#918a6f" stroke-width="1"/><rect x="1763.5" y="1.5" width="13" height="13" fill="none" stroke="rgba(255,255,255,0.07)" stroke-width="1"/><rect x="1762.5" y="17.5" width="15" height="15" fill="#6f918a" stroke="#6f918a" stroke-width="1"/><rect x="1763.5" y="18.5" width="13" height="13" fill="none" stroke="rgba(255,255,255,0.07)" stroke-width="1"/><rect x="1779.5" y="0.5" width="15" height="15" fill="#aca793" stroke="#aca793" stroke-width="1"/><rect x="1780.5" y="1.5" width="13" height="13" fill="none" stroke="rgba(255,255,255,0.07)" stroke-width="1"/><rect x="1779.5" y="17.5" width="15" height="15" fill="#93aca7" stroke="#93aca7" stroke-width="1"/><rect x="1780.5" y="18.5" width="13" height="13" fill="none" stroke="rgba(255,255,255,0.07)" stroke-width="1"/><rect x="1796.5" y="0.5" width="15" height="15" fill="#c8c5b7" stroke="#c8c5b7" stroke-width="1"/><rect x="1797.5" y="1.5" width="13" height="13" fill="none" stroke="rgba(255,255,255,0.07)" stroke-width="1"/><rect x="1796.5" y="17.5" width="15" height="15" fill="#b7c8c5" stroke="#b7c8c5" stroke-width="1"/><rect x="1797.5" y="18.5" width="13" height="13" fill="none" stroke="rgba(255,255,255,0.07)" stroke-width="1"/><rect x="1813.5" y="0.5" width="15" height="15" fill="#e3e1db" stroke="#e3e1db" stroke-width="1"/><rect x="1814.5" y="1.5" width="13" height="13" fill="none" stroke="rgba(255,255,255,0.07)" stroke-width="1"/><rect x="1813.5" y="17.5" width="15" height="15" fill="#dbe3e1" stroke="#dbe3e1" stroke-width="1"/><rect x="1814.5" y="18.5" width="13" height="13" fill="none" stroke="rgba(255,255,255,0.07)" stroke-width="1"/><rect x="1830.5" y="0.5" width="15" height="15" fill="#222b00" stroke="#222b00" stroke-width="1"/><rect x="1831.5" y="1.5" width="13" height="13" fill="none" stroke="rgba(255,255,255,0.07)" stroke-width="1"/><rect x="1830.5" y="17.5" width="15" height="15" fill="#00222b" stroke="#00222b" stroke-width="1"/><rect x="1831.5" y="18.5" width="13" height="13" fill="none" stroke="rgba(255,255,255,0.07)" stroke-width="1"/><rect x="1847.5" y="0.5" width="15" height="15" fill="#445500" stroke="#445500" stroke-width="1"/><rect x="1848.5" y="1.5" width="13" height="13" fill="none" stroke="rgba(255,255,255,0.07)" stroke-width="1"/><rect x="1847.5" y="17.5" width="15" height="15" fill="#004455" stroke="#004455" stroke-width="1"/><rect x="1848.5" y="18.5" width="13" height="13" fill="none" stroke="rgba(255,255,255,0.07)" stroke-width="1"/><rect x="1864.5" y="0.5" width="15" height="15" fill="#668000" stroke="#668000" stroke-width="1"/><rect x="1865.5" y="1.5" width="13" height="13" fill="none" stroke="rgba(255,255,255,0.07)" stroke-width="1"/><rect x="1864.5" y="17.5" width="15" height="15" fill="#006680" stroke="#006680" stroke-width="1"/><rect x="1865.5" y="18.5" width="13" height="13" fill="none" stroke="rgba(255,255,255,0.07)" stroke-width="1"/><rect x="1881.5" y="0.5" width="15" height="15" fill="#88aa00" stroke="#88aa00" stroke-width="1"/><rect x="1882.5" y="1.5" width="13" height="13" fill="none" stroke="rgba(255,255,255,0.07)" stroke-width="1"/><rect x="1881.5" y="17.5" width="15" height="15" fill="#0088aa" stroke="#0088aa" stroke-width="1"/><rect x="1882.5" y="18.5" width="13" height="13" fill="none" stroke="rgba(255,255,255,0.07)" stroke-width="1"/><rect x="1898.5" y="0.5" width="15" height="15" fill="#aad400" stroke="#aad400" stroke-width="1"/><rect x="1899.5" y="1.5" width="13" height="13" fill="none" stroke="rgba(255,255,255,0.07)" stroke-width="1"/><rect x="1898.5" y="17.5" width="15" height="15" fill="#00aad4" stroke="#00aad4" stroke-width="1"/><rect x="1899.5" y="18.5" width="13" height="13" fill="none" stroke="rgba(255,255,255,0.07)" stroke-width="1"/><rect x="1915.5" y="0.5" width="15" height="15" fill="#ccff00" stroke="#ccff00" stroke-width="1"/><rect x="1916.5" y="1.5" width="13" height="13" fill="none" stroke="rgba(255,255,255,0.07)" stroke-width="1"/><rect x="1915.5" y="17.5" width="15" height="15" fill="#00ccff" stroke="#00ccff" stroke-width="1"/><rect x="1916.5" y="18.5" width="13" height="13" fill="none" stroke="rgba(255,255,255,0.07)" stroke-width="1"/><rect x="1932.5" y="0.5" width="15" height="15" fill="#d4ff2a" stroke="#d4ff2a" stroke-width="1"/><rect x="1933.5" y="1.5" width="13" height="13" fill="none" stroke="rgba(255,255,255,0.07)" stroke-width="1"/><rect x="1932.5" y="17.5" width="15" height="15" fill="#2ad4ff" stroke="#2ad4ff" stroke-width="1"/><rect x="1933.5" y="18.5" width="13" height="13" fill="none" stroke="rgba(255,255,255,0.07)" stroke-width="1"/><rect x="1949.5" y="0.5" width="15" height="15" fill="#ddff55" stroke="#ddff55" stroke-width="1"/><rect x="1950.5" y="1.5" width="13" height="13" fill="none" stroke="rgba(255,255,255,0.07)" stroke-width="1"/><rect x="1949.5" y="17.5" width="15" height="15" fill="#55ddff" stroke="#55ddff" stroke-width="1"/><rect x="1950.5" y="18.5" width="13" height="13" fill="none" stroke="rgba(255,255,255,0.07)" stroke-width="1"/><rect x="1966.5" y="0.5" width="15" height="15" fill="#e6ff80" stroke="#e6ff80" stroke-width="1"/><rect x="1967.5" y="1.5" width="13" height="13" fill="none" stroke="rgba(255,255,255,0.07)" stroke-width="1"/><rect x="1966.5" y="17.5" width="15" height="15" fill="#80e6ff" stroke="#80e6ff" stroke-width="1"/><rect x="1967.5" y="18.5" width="13" height="13" fill="none" stroke="rgba(255,255,255,0.07)" stroke-width="1"/><rect x="1983.5" y="0.5" width="15" height="15" fill="#eeffaa" stroke="#eeffaa" stroke-width="1"/><rect x="1984.5" y="1.5" width="13" height="13" fill="none" stroke="rgba(255,255,255,0.07)" stroke-width="1"/><rect x="1983.5" y="17.5" width="15" height="15" fill="#aaeeff" stroke="#aaeeff" stroke-width="1"/><rect x="1984.5" y="18.5" width="13" height="13" fill="none" stroke="rgba(255,255,255,0.07)" stroke-width="1"/><rect x="2000.5" y="0.5" width="15" height="15" fill="#f7ffd5" stroke="#f7ffd5" stroke-width="1"/><rect x="2001.5" y="1.5" width="13" height="13" fill="none" stroke="rgba(255,255,255,0.07)" stroke-width="1"/><rect x="2000.5" y="17.5" width="15" height="15" fill="#d5f7ff" stroke="#d5f7ff" stroke-width="1"/><rect x="2001.5" y="18.5" width="13" height="13" fill="none" stroke="rgba(255,255,255,0.07)" stroke-width="1"/><rect x="2017.5" y="0.5" width="15" height="15" fill="#22280b" stroke="#22280b" stroke-width="1"/><rect x="2018.5" y="1.5" width="13" height="13" fill="none" stroke="rgba(255,255,255,0.07)" stroke-width="1"/><rect x="2017.5" y="17.5" width="15" height="15" fill="#0b2228" stroke="#0b2228" stroke-width="1"/><rect x="2018.5" y="18.5" width="13" height="13" fill="none" stroke="rgba(255,255,255,0.07)" stroke-width="1"/><rect x="2034.5" y="0.5" width="15" height="15" fill="#445016" stroke="#445016" stroke-width="1"/><rect x="2035.5" y="1.5" width="13" height="13" fill="none" stroke="rgba(255,255,255,0.07)" stroke-width="1"/><rect x="2034.5" y="17.5" width="15" height="15" fill="#164450" stroke="#164450" stroke-width="1"/><rect x="2035.5" y="18.5" width="13" height="13" fill="none" stroke="rgba(255,255,255,0.07)" stroke-width="1"/><rect x="2051.5" y="0.5" width="15" height="15" fill="#677821" stroke="#677821" stroke-width="1"/><rect x="2052.5" y="1.5" width="13" height="13" fill="none" stroke="rgba(255,255,255,0.07)" stroke-width="1"/><rect x="2051.5" y="17.5" width="15" height="15" fill="#216778" stroke="#216778" stroke-width="1"/><rect x="2052.5" y="18.5" width="13" height="13" fill="none" stroke="rgba(255,255,255,0.07)" stroke-width="1"/><rect x="2068.5" y="0.5" width="15" height="15" fill="#89a02c" stroke="#89a02c" stroke-width="1"/><rect x="2069.5" y="1.5" width="13" height="13" fill="none" stroke="rgba(255,255,255,0.07)" stroke-width="1"/><rect x="2068.5" y="17.5" width="15" height="15" fill="#2c89a0" stroke="#2c89a0" stroke-width="1"/><rect x="2069.5" y="18.5" width="13" height="13" fill="none" stroke="rgba(255,255,255,0.07)" stroke-width="1"/><rect x="2085.5" y="0.5" width="15" height="15" fill="#abc837" stroke="#abc837" stroke-width="1"/><rect x="2086.5" y="1.5" width="13" height="13" fill="none" stroke="rgba(255,255,255,0.07)" stroke-width="1"/><rect x="2085.5" y="17.5" width="15" height="15" fill="#37abc8" stroke="#37abc8" stroke-width="1"/><rect x="2086.5" y="18.5" width="13" height="13" fill="none" stroke="rgba(255,255,255,0.07)" stroke-width="1"/><rect x="2102.5" y="0.5" width="15" height="15" fill="#bcd35f" stroke="#bcd35f" stroke-width="1"/><rect x="2103.5" y="1.5" width="13" height="13" fill="none" stroke="rgba(255,255,255,0.07)" stroke-width="1"/><rect x="2102.5" y="17.5" width="15" height="15" fill="#5fbcd3" stroke="#5fbcd3" stroke-width="1"/><rect x="2103.5" y="18.5" width="13" height="13" fill="none" stroke="rgba(255,255,255,0.07)" stroke-width="1"/><rect x="2119.5" y="0.5" width="15" height="15" fill="#cdde87" stroke="#cdde87" stroke-width="1"/><rect x="2120.5" y="1.5" width="13" height="13" fill="none" stroke="rgba(255,255,255,0.07)" stroke-width="1"/><rect x="2119.5" y="17.5" width="15" height="15" fill="#87cdde" stroke="#87cdde" stroke-width="1"/><rect x="2120.5" y="18.5" width="13" height="13" fill="none" stroke="rgba(255,255,255,0.07)" stroke-width="1"/><rect x="2136.5" y="0.5" width="15" height="15" fill="#dde9af" stroke="#dde9af" stroke-width="1"/><rect x="2137.5" y="1.5" width="13" height="13" fill="none" stroke="rgba(255,255,255,0.07)" stroke-width="1"/><rect x="2136.5" y="17.5" width="15" height="15" fill="#afdde9" stroke="#afdde9" stroke-width="1"/><rect x="2137.5" y="18.5" width="13" height="13" fill="none" stroke="rgba(255,255,255,0.07)" stroke-width="1"/><rect x="2153.5" y="0.5" width="15" height="15" fill="#eef4d7" stroke="#eef4d7" stroke-width="1"/><rect x="2154.5" y="1.5" width="13" height="13" fill="none" stroke="rgba(255,255,255,0.07)" stroke-width="1"/><rect x="2153.5" y="17.5" width="15" height="15" fill="#d7eef4" stroke="#d7eef4" stroke-width="1"/><rect x="2154.5" y="18.5" width="13" height="13" fill="none" stroke="rgba(255,255,255,0.07)" stroke-width="1"/><rect x="2170.5" y="0.5" width="15" height="15" fill="#22241c" stroke="#22241c" stroke-width="1"/><rect x="2171.5" y="1.5" width="13" height="13" fill="none" stroke="rgba(255,255,255,0.07)" stroke-width="1"/><rect x="2170.5" y="17.5" width="15" height="15" fill="#1c2224" stroke="#1c2224" stroke-width="1"/><rect x="2171.5" y="18.5" width="13" height="13" fill="none" stroke="rgba(255,255,255,0.07)" stroke-width="1"/><rect x="2187.5" y="0.5" width="15" height="15" fill="#454837" stroke="#454837" stroke-width="1"/><rect x="2188.5" y="1.5" width="13" height="13" fill="none" stroke="rgba(255,255,255,0.07)" stroke-width="1"/><rect x="2187.5" y="17.5" width="15" height="15" fill="#374548" stroke="#374548" stroke-width="1"/><rect x="2188.5" y="18.5" width="13" height="13" fill="none" stroke="rgba(255,255,255,0.07)" stroke-width="1"/><rect x="2204.5" y="0.5" width="15" height="15" fill="#676c53" stroke="#676c53" stroke-width="1"/><rect x="2205.5" y="1.5" width="13" height="13" fill="none" stroke="rgba(255,255,255,0.07)" stroke-width="1"/><rect x="2204.5" y="17.5" width="15" height="15" fill="#53676c" stroke="#53676c" stroke-width="1"/><rect x="2205.5" y="18.5" width="13" height="13" fill="none" stroke="rgba(255,255,255,0.07)" stroke-width="1"/><rect x="2221.5" y="0.5" width="15" height="15" fill="#8a916f" stroke="#8a916f" stroke-width="1"/><rect x="2222.5" y="1.5" width="13" height="13" fill="none" stroke="rgba(255,255,255,0.07)" stroke-width="1"/><rect x="2221.5" y="17.5" width="15" height="15" fill="#6f8a91" stroke="#6f8a91" stroke-width="1"/><rect x="2222.5" y="18.5" width="13" height="13" fill="none" stroke="rgba(255,255,255,0.07)" stroke-width="1"/><rect x="2238.5" y="0.5" width="15" height="15" fill="#a7ac93" stroke="#a7ac93" stroke-width="1"/><rect x="2239.5" y="1.5" width="13" height="13" fill="none" stroke="rgba(255,255,255,0.07)" stroke-width="1"/><rect x="2238.5" y="17.5" width="15" height="15" fill="#93a7ac" stroke="#93a7ac" stroke-width="1"/><rect x="2239.5" y="18.5" width="13" height="13" fill="none" stroke="rgba(255,255,255,0.07)" stroke-width="1"/><rect x="2255.5" y="0.5" width="15" height="15" fill="#c5c8b7" stroke="#c5c8b7" stroke-width="1"/><rect x="2256.5" y="1.5" width="13" height="13" fill="none" stroke="rgba(255,255,255,0.07)" stroke-width="1"/><rect x="2255.5" y="17.5" width="15" height="15" fill="#b7c5c8" stroke="#b7c5c8" stroke-width="1"/><rect x="2256.5" y="18.5" width="13" height="13" fill="none" stroke="rgba(255,255,255,0.07)" stroke-width="1"/><rect x="2272.5" y="0.5" width="15" height="15" fill="#e1e3db" stroke="#e1e3db" stroke-width="1"/><rect x="2273.5" y="1.5" width="13" height="13" fill="none" stroke="rgba(255,255,255,0.07)" stroke-width="1"/><rect x="2272.5" y="17.5" width="15" height="15" fill="#dbe1e3" stroke="#dbe1e3" stroke-width="1"/><rect x="2273.5" y="18.5" width="13" height="13" fill="none" stroke="rgba(255,255,255,0.07)" stroke-width="1"/><rect x="2289.5" y="0.5" width="15" height="15" fill="#112b00" stroke="#112b00" stroke-width="1"/><rect x="2290.5" y="1.5" width="13" height="13" fill="none" stroke="rgba(255,255,255,0.07)" stroke-width="1"/><rect x="2289.5" y="17.5" width="15" height="15" fill="#00112b" stroke="#00112b" stroke-width="1"/><rect x="2290.5" y="18.5" width="13" height="13" fill="none" stroke="rgba(255,255,255,0.07)" stroke-width="1"/><rect x="2306.5" y="0.5" width="15" height="15" fill="#225500" stroke="#225500" stroke-width="1"/><rect x="2307.5" y="1.5" width="13" height="13" fill="none" stroke="rgba(255,255,255,0.07)" stroke-width="1"/><rect x="2306.5" y="17.5" width="15" height="15" fill="#002255" stroke="#002255" stroke-width="1"/><rect x="2307.5" y="18.5" width="13" height="13" fill="none" stroke="rgba(255,255,255,0.07)" stroke-width="1"/><rect x="2323.5" y="0.5" width="15" height="15" fill="#338000" stroke="#338000" stroke-width="1"/><rect x="2324.5" y="1.5" width="13" height="13" fill="none" stroke="rgba(255,255,255,0.07)" stroke-width="1"/><rect x="2323.5" y="17.5" width="15" height="15" fill="#003380" stroke="#003380" stroke-width="1"/><rect x="2324.5" y="18.5" width="13" height="13" fill="none" stroke="rgba(255,255,255,0.07)" stroke-width="1"/><rect x="2340.5" y="0.5" width="15" height="15" fill="#44aa00" stroke="#44aa00" stroke-width="1"/><rect x="2341.5" y="1.5" width="13" height="13" fill="none" stroke="rgba(255,255,255,0.07)" stroke-width="1"/><rect x="2340.5" y="17.5" width="15" height="15" fill="#0044aa" stroke="#0044aa" stroke-width="1"/><rect x="2341.5" y="18.5" width="13" height="13" fill="none" stroke="rgba(255,255,255,0.07)" stroke-width="1"/></svg>
<svg style="position:absolute;left:2494.0px;top:1453.0px;" width="16" height="12" viewBox="0 0 16 12"><path d="M2 9 L8 3 L14 9" fill="none" stroke="#8a8a8a" stroke-width="2"/></svg>
<svg style="position:absolute;left:2517.0px;top:1451.0px;" width="16" height="12" viewBox="0 0 16 12"><path d="M2 3 L8 9 L14 3" fill="none" stroke="#ececec" stroke-width="2"/></svg>
<svg style="position:absolute;left:2539.0px;top:1455.0px;" width="17" height="16" viewBox="0 0 17 16"><rect x="1" y="2" width="14" height="2" fill="#ececec"/><rect x="1" y="7" width="14" height="2" fill="#ececec"/><rect x="1" y="12" width="14" height="2" fill="#ececec"/></svg>
<div class="t" id="t34" style="left:26.67px;top:1483.26px;font-size:18px;line-height:18px;color:#ececec;font-weight:400;transform:scaleX(0.9272);transform-origin:0 0;">Fill:</div>
<div class="t" id="t35" style="left:71.62px;top:1483.26px;font-size:18px;line-height:18px;color:#f2f2f2;font-weight:700;transform:scaleX(0.9813);transform-origin:0 0;">Unset</div>
<div class="t" id="t36" style="left:0.50px;top:1507.86px;font-size:18px;line-height:18px;color:#ececec;font-weight:400;transform:scaleX(0.9139);transform-origin:0 0;">Stroke:</div>
<div class="t" id="t37" style="left:71.62px;top:1507.86px;font-size:18px;line-height:18px;color:#f2f2f2;font-weight:700;transform:scaleX(0.9813);transform-origin:0 0;">Unset</div>
<div class="t" id="t38" style="left:131.57px;top:1507.86px;font-size:18px;line-height:18px;color:#ececec;font-weight:400;transform:scaleX(0.9317);transform-origin:0 0;">1.00</div>
<div class="t" id="t39" style="left:170.60px;top:1495.26px;font-size:18px;line-height:18px;color:#ececec;font-weight:400;transform:scaleX(0.9555);transform-origin:0 0;">O:</div>
<div style="left:192.7px;top:1478.0px;width:73.7px;height:49.0px;background:#2a2a2a;border:1px solid #1c1c1c;border-radius:6px;box-sizing:border-box"></div>
<div style="left:232.6px;top:1479.0px;width:1.0px;height:47.0px;background:#262626"></div>
<div style="left:249.5px;top:1479.0px;width:1.0px;height:47.0px;background:#262626"></div>
<div class="t" id="t40" style="left:202.02px;top:1495.26px;font-size:18px;line-height:18px;color:#ececec;font-weight:400;transform:scaleX(0.9786);transform-origin:0 0;">100</div>
<svg style="position:absolute;left:234.0px;top:1495.0px;" width="14" height="14" viewBox="0 0 14 14"><rect x="1" y="6.2" width="12" height="2" fill="#ececec"/></svg>
<svg style="position:absolute;left:251.0px;top:1495.0px;" width="14" height="14" viewBox="0 0 14 14"><rect x="1" y="6.2" width="12" height="1.8" fill="#6e6e6e"/><rect x="6.1" y="1" width="1.8" height="12" fill="#6e6e6e"/></svg>
<div style="left:278.0px;top:1490.0px;width:3.0px;height:24.5px;background:#3584e4"></div>
<div class="t" id="t41" style="left:286.70px;top:1495.26px;font-size:18px;line-height:18px;color:#ececec;font-weight:400;transform:scaleX(0.9047);transform-origin:0 0;">Layer 1</div>
<svg style="position:absolute;left:362.0px;top:1494.0px;" width="18" height="16" viewBox="0 0 18 16"><path d="M1.5 9 Q9 1 16.5 9 Q9 15 1.5 9 Z" fill="none" stroke="#e6e6e6" stroke-width="1.8"/><circle cx="9" cy="8.6" r="2.6" fill="#e6e6e6"/><path d="M4 3 L5 5 M9 1.5 V4 M14 3 L13 5" stroke="#e6e6e6" stroke-width="1.3"/></svg>
<svg style="position:absolute;left:401.0px;top:1494.0px;" width="16" height="18" viewBox="0 0 16 18"><rect x="1" y="8" width="11" height="9" fill="#e6e6e6"/><path d="M8 8 V5 a3.3 3.3 0 0 1 6.6 0 V6" fill="none" stroke="#e6e6e6" stroke-width="2"/></svg>
<div style="left:425.5px;top:1480.0px;width:1.0px;height:46.0px;background:#2a2a2a"></div>
<div class="t" id="t42" style="left:432.70px;top:1495.26px;font-size:18px;line-height:18px;color:#ececec;font-weight:400;transform:scaleX(0.9962);transform-origin:0 0;"><b>Image</b> 8000 × 10400: embedded in layer <b>Layer 1</b>. Click selection again to toggle scale/rotation handles.</div>
<svg style="position:absolute;left:2086.0px;top:1495.0px;" width="10" height="14" viewBox="0 0 10 14"><path d="M8.5 1.5 L1.5 7 L8.5 12.5 Z" fill="#8a8a8a"/></svg>
<div style="left:2109.6px;top:1478.5px;width:34.8px;height:48.5px;background:#2e2e2e;border:1px solid #1c1c1c;border-radius:6px;box-sizing:border-box"></div>
<svg style="position:absolute;left:2120.0px;top:1497.0px;" width="14" height="9" viewBox="0 0 14 9"><path d="M1 1 H13 L7 7.5 Z" fill="#9a9a9a"/></svg>
<svg style="position:absolute;left:2158.0px;top:1495.0px;" width="10" height="14" viewBox="0 0 10 14"><path d="M1.5 1.5 L8.5 7 L1.5 12.5 Z" fill="#8a8a8a"/></svg>
<div style="left:2181.8px;top:1480.0px;width:1.0px;height:46.0px;background:#2a2a2a"></div>
<div class="t" id="t43" style="left:2188.00px;top:1481.96px;font-size:18px;line-height:18px;color:#ececec;font-weight:400;transform:scaleX(0.8122);transform-origin:0 0;">X:</div>
<div class="t" id="t44" style="left:2219.00px;top:1481.96px;font-size:18px;line-height:18px;color:#ececec;font-weight:400;transform:scaleX(0.9505);transform-origin:0 0;">-53.67</div>
<div class="t" id="t45" style="left:2188.00px;top:1507.26px;font-size:18px;line-height:18px;color:#ececec;font-weight:400;transform:scaleX(0.8326);transform-origin:0 0;">Y:</div>
<div class="t" id="t46" style="left:2225.88px;top:1507.26px;font-size:18px;line-height:18px;color:#ececec;font-weight:400;transform:scaleX(0.9243);transform-origin:0 0;">16.97</div>
<div class="t" id="t47" style="left:2281.60px;top:1495.26px;font-size:18px;line-height:18px;color:#ececec;font-weight:400;transform:scaleX(0.8269);transform-origin:0 0;">Z:</div>
<div style="left:2299.8px;top:1478.5px;width:103.5px;height:48.5px;background:#2a2a2a;border:1px solid #1c1c1c;border-radius:6px;box-sizing:border-box"></div>
<div style="left:2369.3px;top:1479.5px;width:1.0px;height:46.5px;background:#262626"></div>
<div style="left:2386.4px;top:1479.5px;width:1.0px;height:46.5px;background:#262626"></div>
<div class="t" id="t48" style="left:2319.50px;top:1495.26px;font-size:18px;line-height:18px;color:#ececec;font-weight:400;transform:scaleX(0.9300);transform-origin:0 0;">76%</div>
<svg style="position:absolute;left:2371.0px;top:1495.0px;" width="14" height="14" viewBox="0 0 14 14"><rect x="1" y="6.2" width="12" height="1.8" fill="#ececec"/></svg>
<svg style="position:absolute;left:2388.0px;top:1495.0px;" width="14" height="14" viewBox="0 0 14 14"><rect x="1" y="6.2" width="12" height="1.8" fill="#ececec"/><rect x="6.1" y="1" width="1.8" height="12" fill="#ececec"/></svg>
<div class="t" id="t49" style="left:2414.12px;top:1495.26px;font-size:18px;line-height:18px;color:#ececec;font-weight:400;transform:scaleX(0.8751);transform-origin:0 0;">R:</div>
<div style="left:2433.4px;top:1478.5px;width:114.4px;height:48.5px;background:#2a2a2a;border:1px solid #1c1c1c;border-radius:6px;box-sizing:border-box"></div>
<div style="left:2513.5px;top:1479.5px;width:1.0px;height:46.5px;background:#262626"></div>
<div style="left:2530.3px;top:1479.5px;width:1.0px;height:46.5px;background:#262626"></div>
<div class="t" id="t50" style="left:2458.70px;top:1495.26px;font-size:18px;line-height:18px;color:#ececec;font-weight:400;transform:scaleX(0.9350);transform-origin:0 0;">0.00°</div>
<svg style="position:absolute;left:2515.0px;top:1495.0px;" width="14" height="14" viewBox="0 0 14 14"><rect x="1" y="6.2" width="12" height="1.8" fill="#ececec"/></svg>
<svg style="position:absolute;left:2532.0px;top:1495.0px;" width="14" height="14" viewBox="0 0 14 14"><rect x="1" y="6.2" width="12" height="1.8" fill="#ececec"/><rect x="6.1" y="1" width="1.8" height="12" fill="#ececec"/></svg>
<div style="left:154.0px;top:1426.3px;width:1737.0px;height:7.7px;background:#a6a6a6;border-radius:4px"></div>
<div style="left:1903.5px;top:1428.3px;width:3.0px;height:3.0px;background:#e0e0e0;border-radius:50%"></div>
<div style="left:0.0px;top:1528.0px;width:2557.0px;height:2.0px;background:#4a3e44"></div>
<svg style="position:absolute;left:11.0px;top:80.0px;" width="16" height="16" viewBox="0 0 16 16"><path d="M2 3 H8 L11 6 V15 H2 Z" fill="none" stroke="#e8e8e8" stroke-width="1.8"/><path d="M12.5 0.5 L13.4 2.6 L15.6 2.7 L13.9 4.1 L14.5 6.3 L12.5 5.1 L10.5 6.3 L11.1 4.1 L9.4 2.7 L11.6 2.6 Z" fill="#14a01e"/></svg>
<svg style="position:absolute;left:53.0px;top:80.0px;" width="16" height="16" viewBox="0 0 16 16"><path d="M1 2 H6 L7.5 4 H14 V6 H4.5 L2.8 14 H1 Z" fill="#e8e8e8"/><path d="M4.5 7 H15.5 L13.5 14 H2.5 Z" fill="#e8e8e8"/></svg>
<svg style="position:absolute;left:94.0px;top:80.0px;" width="16" height="16" viewBox="0 0 16 16"><path d="M8 0 V7" stroke="#14a01e" stroke-width="1.8"/><path d="M4.5 5 L8 9 L11.5 5 Z" fill="#14a01e"/><path d="M1 10 H5 V12 H11 V10 H15 V15 H1 Z" fill="#e8e8e8"/><path d="M2 9 L3 7 M14 9 L13 7" stroke="#e8e8e8" stroke-width="1.5"/></svg>
<svg style="position:absolute;left:135.0px;top:80.0px;" width="16" height="16" viewBox="0 0 16 16"><rect x="4" y="1" width="8" height="3" fill="#e8e8e8"/><path d="M1 6 Q1 5 2 5 H14 Q15 5 15 6 V11 H12 V9 H4 V11 H1 Z" fill="#e8e8e8"/><rect x="4" y="10" width="8" height="5" fill="#e8e8e8"/></svg>
<svg style="position:absolute;left:182.0px;top:80.0px;" width="16" height="16" viewBox="0 0 16 16"><path d="M4 1 H10 L14 5 V15 H4 V11" fill="none" stroke="#e8e8e8" stroke-width="1.8"/><path d="M4 5 V7" stroke="#e8e8e8" stroke-width="1.8"/><path d="M0 9 H6" stroke="#14a01e" stroke-width="2"/><path d="M6 5.5 L10 9 L6 12.5 Z" fill="#14a01e"/></svg>
<svg style="position:absolute;left:223.0px;top:80.0px;" width="16" height="16" viewBox="0 0 16 16"><path d="M10 15 H2 V1 H8 L12 5 V6" fill="none" stroke="#e8e8e8" stroke-width="1.8"/><path d="M6 10 H12" stroke="#14a01e" stroke-width="2"/><path d="M12 6.5 L16 10 L12 13.5 Z" fill="#14a01e"/></svg>
<svg style="position:absolute;left:269.0px;top:80.0px;" width="16" height="16" viewBox="0 0 16 16"><path d="M4 6 H10 A4 4 0 0 1 10 14 H9" fill="none" stroke="#e8e8e8" stroke-width="1.9"/><path d="M5.5 2 L1.5 6 L5.5 10" fill="none" stroke="#e8e8e8" stroke-width="1.9"/></svg>
<svg style="position:absolute;left:311.0px;top:80.0px;" width="16" height="16" viewBox="0 0 16 16"><path d="M12 6 H6 A4 4 0 0 0 6 14 H7" fill="none" stroke="#7c7c7c" stroke-width="1.9"/><path d="M10.5 2 L14.5 6 L10.5 10" fill="none" stroke="#7c7c7c" stroke-width="1.9"/></svg>
<svg style="position:absolute;left:358.0px;top:80.0px;" width="16" height="16" viewBox="0 0 16 16"><rect x="1" y="1" width="9" height="9" fill="#e8e8e8"/><rect x="5.5" y="6" width="10" height="10" fill="#e8e8e8" stroke="#333" stroke-width="1"/></svg>
<svg style="position:absolute;left:399.0px;top:80.0px;" width="16" height="16" viewBox="0 0 16 16"><path d="M3.5 0 L9.5 11 M12.5 0 L6.5 11" stroke="#e8e8e8" stroke-width="1.6"/><circle cx="4" cy="13" r="2.3" fill="none" stroke="#e8e8e8" stroke-width="1.6"/><circle cx="12" cy="13" r="2.3" fill="none" stroke="#e8e8e8" stroke-width="1.6"/></svg>
<svg style="position:absolute;left:439.0px;top:80.0px;" width="16" height="16" viewBox="0 0 16 16"><path d="M4 2.5 H1.5 V15 H14.5 V2.5 H12" fill="none" stroke="#e8e8e8" stroke-width="1.5"/><rect x="5" y="0" width="6" height="3" fill="#e8e8e8"/><path d="M4 5 H12 V11 Q12 13.5 9.5 13.5 H4 Z" fill="#e8e8e8"/></svg>
<svg style="position:absolute;left:487.0px;top:80.0px;" width="16" height="16" viewBox="0 0 16 16"><circle cx="7" cy="7" r="6.5" fill="#e8e8e8"/><path d="M11 11 L15 15" stroke="#e8e8e8" stroke-width="2.5" stroke-linecap="round"/><rect x="3.5" y="3.5" width="7" height="7" fill="none" stroke="#333" stroke-width="1" stroke-dasharray="1 1"/></svg>
<svg style="position:absolute;left:528.0px;top:80.0px;" width="16" height="16" viewBox="0 0 16 16"><circle cx="7" cy="7" r="6.5" fill="#e8e8e8"/><path d="M11 11 L15 15" stroke="#e8e8e8" stroke-width="2.5" stroke-linecap="round"/><circle cx="5.5" cy="5.5" r="2.5" fill="#333"/><rect x="6.5" y="6.5" width="5" height="5" fill="#333"/><rect x="7.5" y="7.5" width="3" height="3" fill="#fff"/></svg>
<svg style="position:absolute;left:569.0px;top:80.0px;" width="16" height="16" viewBox="0 0 16 16"><circle cx="7" cy="7" r="6.5" fill="#e8e8e8"/><path d="M11 11 L15 15" stroke="#e8e8e8" stroke-width="2.5" stroke-linecap="round"/><rect x="4.5" y="2.5" width="5" height="9" fill="none" stroke="#333" stroke-width="1.3"/></svg>
<svg style="position:absolute;left:611.0px;top:80.0px;" width="16" height="16" viewBox="0 0 16 16"><rect x="2.5" y="2.5" width="11" height="11" fill="none" stroke="#e8e8e8" stroke-width="1.3"/><path d="M8 5 V11 M5 8 H11" stroke="#e8e8e8" stroke-width="1.3"/><path d="M0.5 3 V0.5 H3 M13 0.5 H15.5 V3 M15.5 13 V15.5 H13 M3 15.5 H0.5 V13" fill="none" stroke="#8a8a8a" stroke-width="1"/></svg>
<svg style="position:absolute;left:656.0px;top:80.0px;" width="16" height="16" viewBox="0 0 16 16"><rect x="0.5" y="0.5" width="9" height="9" fill="#e8e8e8"/><rect x="5.5" y="5.5" width="10" height="10" fill="#14a01e"/></svg>
<svg style="position:absolute;left:697.0px;top:80.0px;" width="16" height="16" viewBox="0 0 16 16"><rect x="1" y="1" width="9" height="9" fill="#e8e8e8"/><rect x="5" y="6" width="10" height="10" fill="#333" stroke="#e8e8e8" stroke-width="1.5"/><rect x="7.5" y="10" width="5" height="4" fill="#e8e8e8"/><path d="M8.5 10 V8.5 a1.5 1.5 0 0 1 3 0 V10" fill="none" stroke="#e8e8e8" stroke-width="1.2"/></svg>
<svg style="position:absolute;left:739.0px;top:80.0px;" width="16" height="16" viewBox="0 0 16 16"><rect x="1" y="1" width="9" height="9" fill="#e8e8e8"/><rect x="5" y="6" width="10" height="10" fill="#333" stroke="#e8e8e8" stroke-width="1.5"/><rect x="7" y="10.5" width="5" height="4" fill="#e8e8e8"/><path d="M10.5 10.5 V8.5 a1.5 1.5 0 0 1 3 0" fill="none" stroke="#e8e8e8" stroke-width="1.2"/></svg>
<svg style="position:absolute;left:786.0px;top:80.0px;" width="16" height="16" viewBox="0 0 16 16"><rect x="0" y="0" width="3" height="3" fill="#14a01e"/><rect x="13" y="0" width="3" height="3" fill="#14a01e"/><rect x="0" y="13" width="3" height="3" fill="#14a01e"/><rect x="13" y="13" width="3" height="3" fill="#14a01e"/><circle cx="6" cy="7" r="3.2" fill="#e8e8e8"/><path d="M7 13 L12 8 V13 Z" fill="#e8e8e8"/></svg>
<svg style="position:absolute;left:826.0px;top:80.0px;" width="16" height="16" viewBox="0 0 16 16"><path d="M1 1 H3 M13 1 H15 M1 15 H3 M13 15 H15 M1 1 V3 M15 1 V3 M1 13 V15 M15 13 V15 M8 1 H9 M8 15 H9" stroke="#e8e8e8" stroke-width="1.4"/><circle cx="6" cy="7" r="3.5" fill="#e8e8e8"/><path d="M8 13 L13 8 V13 Z" fill="#8a8a8a"/></svg>
<svg style="position:absolute;left:873.0px;top:80.0px;" width="16" height="16" viewBox="0 0 16 16"><path d="M1 15 V1 H12" fill="none" stroke="#e8e8e8" stroke-width="1.4"/><path d="M15.5 0.8 L7 9.5" stroke="#e8e8e8" stroke-width="2.2"/><path d="M6 10 L2 15.5 L3.5 15.5 L7 12 Z" fill="#2a9df4"/></svg>
<svg style="position:absolute;left:915.0px;top:80.0px;" width="16" height="16" viewBox="0 0 16 16"><path d="M1.5 1.5 H14.5 V5 H13 L12.5 3.5 H9.3 V13.5 L11 14 V15.5 H5 V14 L6.7 13.5 V3.5 H3.5 L3 5 H1.5 Z" fill="#e8e8e8"/></svg>
<svg style="position:absolute;left:956.0px;top:80.0px;" width="16" height="16" viewBox="0 0 16 16"><path d="M5 1 H15 L12 4 H2 Z" fill="#2a9df4"/><path d="M5 6.5 H15 L12 9.5 H2 Z" fill="#8fc9f7"/><path d="M5 12 H15 L12 15 H2 Z" fill="#e8e8e8"/></svg>
<svg style="position:absolute;left:997.0px;top:80.0px;" width="16" height="16" viewBox="0 0 16 16"><rect x="0.8" y="0.8" width="14.4" height="14.4" fill="none" stroke="#e8e8e8" stroke-width="1.5"/><rect x="2" y="2" width="12" height="2" fill="#14a01e"/><path d="M6.5 6 L3.5 9.5 L6.5 13 M9.5 6 L12.5 9.5 L9.5 13" fill="none" stroke="#e8e8e8" stroke-width="1.1"/></svg>
<svg style="position:absolute;left:1038.0px;top:80.0px;" width="16" height="16" viewBox="0 0 16 16"><rect x="0.8" y="0.8" width="14.4" height="14.4" fill="none" stroke="#e8e8e8" stroke-width="1.5"/><rect x="2" y="2" width="12" height="2" fill="#e6007e"/><path d="M6 6 Q4.5 6 4.5 7.5 V8.5 L3.5 9.5 L4.5 10.5 V11.5 Q4.5 13 6 13 M10 6 Q11.5 6 11.5 7.5 V8.5 L12.5 9.5 L11.5 10.5 V11.5 Q11.5 13 10 13" fill="none" stroke="#e8e8e8" stroke-width="1.1"/></svg>
<svg style="position:absolute;left:1078.0px;top:80.0px;" width="16" height="16" viewBox="0 0 16 16"><rect x="0.5" y="0" width="1.3" height="16" fill="#14a01e"/><rect x="3" y="1" width="8" height="3" fill="#e8e8e8"/><rect x="3" y="6" width="12" height="3" fill="#e8e8e8"/><rect x="3" y="11" width="7" height="3" fill="#e8e8e8"/></svg>
<svg style="position:absolute;left:1126.0px;top:80.0px;" width="16" height="16" viewBox="0 0 16 16"><path d="M2 1 H10 Q14 1 14 5.5 Q14 8 12 9 L15 15 H2 Z" fill="#e8e8e8"/><circle cx="8.5" cy="7.5" r="3.3" fill="#333"/><circle cx="8.5" cy="7.5" r="1.8" fill="#e8e8e8"/><path d="M10.5 9.5 L13 13" stroke="#333" stroke-width="2"/><rect x="4" y="3" width="2" height="10" fill="#333"/></svg>
<svg style="position:absolute;left:1167.0px;top:80.0px;" width="16" height="16" viewBox="0 0 16 16"><path d="M2 14 L9 7" stroke="#e8e8e8" stroke-width="2.6"/><circle cx="12" cy="4" r="3.3" fill="#e8e8e8"/><circle cx="12.7" cy="3.3" r="1.3" fill="#333"/><path d="M14 14 L4 4" stroke="#e8e8e8" stroke-width="2.2"/><path d="M1 1 L4 2 L5 5 L2 4 Z" fill="#e8e8e8"/><path d="M11 10 L15 14 L14 15 L10 11 Z" fill="#e8e8e8"/></svg>
<svg style="position:absolute;left:2482.0px;top:79.0px;" width="18" height="18" viewBox="0 0 18 18"><path d="M9 2 A6 6 0 0 1 9 14" fill="none" stroke="#e8e8e8" stroke-width="3"/><circle cx="7.5" cy="2.5" r="1.5" fill="#14a01e"/><circle cx="7.5" cy="13.5" r="1.5" fill="#14a01e"/><path d="M5.5 6.5 Q3 7 4.5 8.5 Q6 9.5 3.5 10" fill="none" stroke="#e8e8e8" stroke-width="1"/></svg>
<div style="left:2516.7px;top:71.7px;width:34.3px;height:32.3px;background:#333333;border:1px solid #1c1c1c;border-radius:6px;box-sizing:border-box"></div>
<svg style="position:absolute;left:2527.0px;top:81.0px;" width="12" height="14" viewBox="0 0 12 14"><path d="M10 1 V13 L3 7 Z" fill="#ececec"/></svg>
<svg style="position:absolute;left:11.0px;top:124.0px;" width="16" height="16" viewBox="0 0 16 16"><rect x="1" y="1" width="14" height="14" fill="none" stroke="#e8e8e8" stroke-width="1.2" stroke-dasharray="1.05 1.05"/><rect x="3" y="9" width="8" height="4.5" fill="#e8e8e8"/><circle cx="10" cy="6" r="3.6" fill="#333"/><circle cx="10" cy="6" r="3" fill="#e8e8e8"/></svg>
<svg style="position:absolute;left:53.0px;top:124.0px;" width="16" height="16" viewBox="0 0 16 16"><rect x="1" y="1" width="14" height="14" fill="none" stroke="#e8e8e8" stroke-width="1.2" stroke-dasharray="1.05 1.05"/><path d="M5 3.5 H13 L11 5.8 H3 Z M5 7 H13 L11 9.3 H3 Z M5 10.5 H13 L11 12.8 H3 Z" fill="#c8c8c8"/></svg>
<svg style="position:absolute;left:94.0px;top:124.0px;" width="16" height="16" viewBox="0 0 16 16"><rect x="1" y="1" width="14" height="14" fill="none" stroke="#a0a0a0" stroke-width="1.2" stroke-dasharray="1.05 1.05"/><rect x="3" y="9" width="8" height="4.5" fill="#9a9a9a"/><circle cx="10" cy="6" r="3.6" fill="#333"/><circle cx="10" cy="6" r="3" fill="#9a9a9a"/></svg>
<svg style="position:absolute;left:135.0px;top:124.0px;" width="16" height="16" viewBox="0 0 16 16"><path d="M1.5 5 V15 H11 V10" fill="none" stroke="#e8e8e8" stroke-width="1.3" stroke-dasharray="2 1.2"/><rect x="10" y="0" width="5" height="5" fill="#e8e8e8"/></svg>
<svg style="position:absolute;left:182.0px;top:124.0px;" width="16" height="16" viewBox="0 0 16 16"><rect x="11" y="0" width="4.5" height="10" fill="#9a9a9a"/><rect x="0" y="11" width="10" height="5" fill="#e8e8e8"/><path d="M3.5 8 Q4 3 9 2.5" fill="none" stroke="#14a01e" stroke-width="1.8"/><path d="M0.8 6.5 L3.5 10 L6.2 6.5 Z" fill="#14a01e"/></svg>
<svg style="position:absolute;left:223.0px;top:124.0px;" width="16" height="16" viewBox="0 0 16 16"><rect x="0.5" y="0" width="4.5" height="10" fill="#9a9a9a"/><rect x="6" y="11" width="10" height="5" fill="#e8e8e8"/><path d="M12.5 8 Q12 3 7 2.5" fill="none" stroke="#14a01e" stroke-width="1.8"/><path d="M9.8 6.5 L12.5 10 L15.2 6.5 Z" fill="#14a01e"/></svg>
<svg style="position:absolute;left:264.0px;top:124.0px;" width="16" height="16" viewBox="0 0 16 16"><path d="M1.2 13.5 L7.8 3 V13.5 Z" fill="#8a8a8a"/><path d="M9.8 3 L15 13.5 H9.8 Z" fill="#e8e8e8"/><path d="M8.8 0 V16" stroke="#e8e8e8" stroke-width="1" stroke-dasharray="1.6 0.8"/></svg>
<svg style="position:absolute;left:304.0px;top:124.0px;" width="16" height="16" viewBox="0 0 16 16"><path d="M4 1 L14.5 6.6 H4 Z" fill="#8a8a8a"/><path d="M4 9 H14.5 L4 15 Z" fill="#e8e8e8"/><path d="M1 7.8 H16" stroke="#e8e8e8" stroke-width="1" stroke-dasharray="1.6 0.8"/></svg>
<svg style="position:absolute;left:352.0px;top:124.0px;" width="16" height="16" viewBox="0 0 16 16"><rect x="1" y="1" width="12" height="2" fill="#e8e8e8"/><rect x="1" y="5" width="4" height="2" fill="#9a9a9a"/><rect x="1" y="9" width="4" height="2" fill="#9a9a9a"/><rect x="1" y="13" width="4" height="2" fill="#9a9a9a"/><path d="M10 15.5 V7" stroke="#14a01e" stroke-width="1.8"/><path d="M6.5 8.5 L10 4 L13.5 8.5 Z" fill="#14a01e"/></svg>
<svg style="position:absolute;left:392.0px;top:124.0px;" width="16" height="16" viewBox="0 0 16 16"><rect x="1" y="1" width="4" height="2" fill="#9a9a9a"/><rect x="1" y="5" width="12" height="2" fill="#e8e8e8"/><rect x="1" y="9" width="4" height="2" fill="#9a9a9a"/><rect x="1" y="13" width="4" height="2" fill="#9a9a9a"/><path d="M10 15.5 V11" stroke="#14a01e" stroke-width="1.8"/><path d="M7 11.5 L10 8 L13 11.5 Z" fill="#14a01e"/></svg>
<svg style="position:absolute;left:434.0px;top:124.0px;" width="16" height="16" viewBox="0 0 16 16"><rect x="1" y="1" width="4" height="2" fill="#9a9a9a"/><rect x="1" y="5" width="4" height="2" fill="#9a9a9a"/><rect x="1" y="9" width="12" height="2" fill="#e8e8e8"/><rect x="1" y="13" width="4" height="2" fill="#9a9a9a"/><path d="M10 0.5 V5" stroke="#14a01e" stroke-width="1.8"/><path d="M7 4.5 L10 8 L13 4.5 Z" fill="#14a01e"/></svg>
<svg style="position:absolute;left:474.0px;top:124.0px;" width="16" height="16" viewBox="0 0 16 16"><rect x="1" y="1" width="4" height="2" fill="#9a9a9a"/><rect x="1" y="5" width="4" height="2" fill="#9a9a9a"/><rect x="1" y="9" width="4" height="2" fill="#9a9a9a"/><rect x="1" y="13" width="12" height="2" fill="#e8e8e8"/><path d="M10 0.5 V8" stroke="#14a01e" stroke-width="1.8"/><path d="M6.5 7.5 L10 12 L13.5 7.5 Z" fill="#14a01e"/></svg>
<div class="t" id="t51" style="left:511.90px;top:125.06px;font-size:18px;line-height:18px;color:#ececec;font-weight:400;transform:scaleX(0.9059);transform-origin:0 0;">X:</div>
<div style="left:529.3px;top:113.7px;width:144.7px;height:37.7px;background:#2a2a2a;border:1px solid #1c1c1c;border-radius:6px;box-sizing:border-box"></div>
<div style="left:639.3px;top:114.7px;width:1.0px;height:35.7px;background:#262626"></div>
<div style="left:656.4px;top:114.7px;width:1.0px;height:35.7px;background:#262626"></div>
<div class="t" id="t52" style="left:538.80px;top:125.06px;font-size:18px;line-height:18px;color:#ececec;font-weight:400;transform:scaleX(0.9738);transform-origin:0 0;">41.179</div>
<svg style="position:absolute;left:641.3px;top:125.5px;" width="14" height="14" viewBox="0 0 14 14"><rect x="1" y="6" width="12" height="2" fill="#e6e6e6"/></svg>
<svg style="position:absolute;left:658.4px;top:125.5px;" width="14" height="14" viewBox="0 0 14 14"><rect x="1" y="6" width="12" height="2" fill="#e6e6e6"/><rect x="6" y="1" width="2" height="12" fill="#e6e6e6"/></svg>
<div class="t" id="t53" style="left:679.20px;top:125.06px;font-size:18px;line-height:18px;color:#ececec;font-weight:400;transform:scaleX(0.8859);transform-origin:0 0;">Y:</div>
<div style="left:695.6px;top:113.7px;width:144.0px;height:37.7px;background:#2a2a2a;border:1px solid #1c1c1c;border-radius:6px;box-sizing:border-box"></div>
<div style="left:805.5px;top:114.7px;width:1.0px;height:35.7px;background:#262626"></div>
<div style="left:822.6px;top:114.7px;width:1.0px;height:35.7px;background:#262626"></div>
<div class="t" id="t54" style="left:705.30px;top:125.06px;font-size:18px;line-height:18px;color:#ececec;font-weight:400;transform:scaleX(0.9629);transform-origin:0 0;">61.175</div>
<svg style="position:absolute;left:807.5px;top:125.5px;" width="14" height="14" viewBox="0 0 14 14"><rect x="1" y="6" width="12" height="2" fill="#e6e6e6"/></svg>
<svg style="position:absolute;left:824.6px;top:125.5px;" width="14" height="14" viewBox="0 0 14 14"><rect x="1" y="6" width="12" height="2" fill="#e6e6e6"/><rect x="6" y="1" width="2" height="12" fill="#e6e6e6"/></svg>
<div class="t" id="t55" style="left:844.60px;top:125.06px;font-size:18px;line-height:18px;color:#ececec;font-weight:400;transform:scaleX(1.0211);transform-origin:0 0;">W:</div>
<div style="left:868.3px;top:113.7px;width:144.1px;height:37.7px;background:#2a2a2a;border:1px solid #1c1c1c;border-radius:6px;box-sizing:border-box"></div>
<div style="left:978.3px;top:114.7px;width:1.0px;height:35.7px;background:#262626"></div>
<div style="left:995.7px;top:114.7px;width:1.0px;height:35.7px;background:#262626"></div>
<div class="t" id="t56" style="left:877.83px;top:125.06px;font-size:18px;line-height:18px;color:#ececec;font-weight:400;transform:scaleX(0.9742);transform-origin:0 0;">131.546</div>
<svg style="position:absolute;left:980.3px;top:125.5px;" width="14" height="14" viewBox="0 0 14 14"><rect x="1" y="6" width="12" height="2" fill="#e6e6e6"/></svg>
<svg style="position:absolute;left:997.7px;top:125.5px;" width="14" height="14" viewBox="0 0 14 14"><rect x="1" y="6" width="12" height="2" fill="#e6e6e6"/><rect x="6" y="1" width="2" height="12" fill="#e6e6e6"/></svg>
<div style="left:1019.0px;top:113.7px;width:34.3px;height:37.7px;background:linear-gradient(#22508a,#1d4170);border:1px solid #1a1a1a;border-radius:6px;box-sizing:border-box"></div>
<svg style="position:absolute;left:1028.0px;top:123.0px;" width="16" height="18" viewBox="0 0 16 18"><rect x="2" y="8" width="11" height="9" rx="1" fill="#e8e8e8"/><path d="M4.3 8.5 V6 a3.2 3.2 0 0 1 6.4 0 V8.5" fill="none" stroke="#e8e8e8" stroke-width="2"/></svg>
<div class="t" id="t57" style="left:1058.61px;top:125.06px;font-size:18px;line-height:18px;color:#ececec;font-weight:400;transform:scaleX(0.9938);transform-origin:0 0;">H:</div>
<div style="left:1078.4px;top:113.7px;width:144.2px;height:37.7px;background:#2a2a2a;border:1px solid #1c1c1c;border-radius:6px;box-sizing:border-box"></div>
<div style="left:1188.7px;top:114.7px;width:1.0px;height:35.7px;background:#262626"></div>
<div style="left:1205.4px;top:114.7px;width:1.0px;height:35.7px;background:#262626"></div>
<div class="t" id="t58" style="left:1088.33px;top:125.06px;font-size:18px;line-height:18px;color:#ececec;font-weight:400;transform:scaleX(0.9742);transform-origin:0 0;">171.010</div>
<svg style="position:absolute;left:1190.7px;top:125.5px;" width="14" height="14" viewBox="0 0 14 14"><rect x="1" y="6" width="12" height="2" fill="#e6e6e6"/></svg>
<svg style="position:absolute;left:1207.4px;top:125.5px;" width="14" height="14" viewBox="0 0 14 14"><rect x="1" y="6" width="12" height="2" fill="#e6e6e6"/><rect x="6" y="1" width="2" height="12" fill="#e6e6e6"/></svg>
<div style="left:1228.3px;top:113.7px;width:71.0px;height:37.7px;background:#2a2a2a;border:1px solid #1c1c1c;border-radius:6px;box-sizing:border-box"></div>
<div class="t" id="t59" style="left:1239.19px;top:125.06px;font-size:18px;line-height:18px;color:#ececec;font-weight:400;transform:scaleX(1.1145);transform-origin:0 0;">mm</div>
<svg style="position:absolute;left:1276.0px;top:129.0px;" width="12" height="8" viewBox="0 0 12 8"><path d="M0.5 0.5 H11.5 L6 7 Z" fill="#ececec"/></svg>
<div style="left:1311.9px;top:113.5px;width:34.4px;height:37.8px;background:linear-gradient(#22508a,#1d4170);border:1px solid #1a1a1a;border-radius:6px;box-sizing:border-box"></div>
<div style="left:1352.4px;top:113.5px;width:34.4px;height:37.8px;background:linear-gradient(#22508a,#1d4170);border:1px solid #1a1a1a;border-radius:6px;box-sizing:border-box"></div>
<div style="left:1393.6px;top:113.5px;width:34.4px;height:37.8px;background:linear-gradient(#22508a,#1d4170);border:1px solid #1a1a1a;border-radius:6px;box-sizing:border-box"></div>
<div style="left:1434.7px;top:113.5px;width:34.4px;height:37.8px;background:linear-gradient(#22508a,#1d4170);border:1px solid #1a1a1a;border-radius:6px;box-sizing:border-box"></div>
<svg style="position:absolute;left:1320.9px;top:124.0px;" width="16" height="16" viewBox="0 0 16 16"><path d="M3 3 H13 V10 M3 6.5 H10 V10" fill="none" stroke="#fff" stroke-width="1.4"/><path d="M1 13.5 H2 M4 13.5 H5 M7 13.5 H12" stroke="#fff" stroke-width="1.6"/><path d="M11.5 11 L14.5 13.5 L11.5 16 Z" fill="#fff"/></svg>
<svg style="position:absolute;left:1361.4px;top:124.0px;" width="16" height="16" viewBox="0 0 16 16"><path d="M3 3 H8 Q13 3 13 10 M3 6.5 H7 Q10 6.5 10 10" fill="none" stroke="#fff" stroke-width="1.4"/><path d="M1 13.5 H2 M4 13.5 H5 M7 13.5 H12" stroke="#fff" stroke-width="1.6"/><path d="M11.5 11 L14.5 13.5 L11.5 16 Z" fill="#fff"/></svg>
<svg style="position:absolute;left:1402.6px;top:124.0px;" width="16" height="16" viewBox="0 0 16 16"><rect x="3" y="2.5" width="10" height="6" fill="#5aa8f0" stroke="#fff" stroke-width="1"/><path d="M13 8.5 V10" stroke="#fff" stroke-width="1.4"/><path d="M1 13.5 H2 M4 13.5 H5 M7 13.5 H12" stroke="#fff" stroke-width="1.6"/><path d="M11.5 11 L14.5 13.5 L11.5 16 Z" fill="#fff"/></svg>
<svg style="position:absolute;left:1443.7px;top:124.0px;" width="16" height="16" viewBox="0 0 16 16"><path d="M3 2.5 H13 V10" fill="none" stroke="#fff" stroke-width="1.2"/><path d="M4 4 L6.5 6 L4 8 M7.5 4 L10 6 L7.5 8" fill="none" stroke="#5aa8f0" stroke-width="1.3"/><path d="M1 13.5 H2 M4 13.5 H5 M7 13.5 H12" stroke="#fff" stroke-width="1.6"/><path d="M11.5 11 L14.5 13.5 L11.5 16 Z" fill="#fff"/></svg>
</body></html>
